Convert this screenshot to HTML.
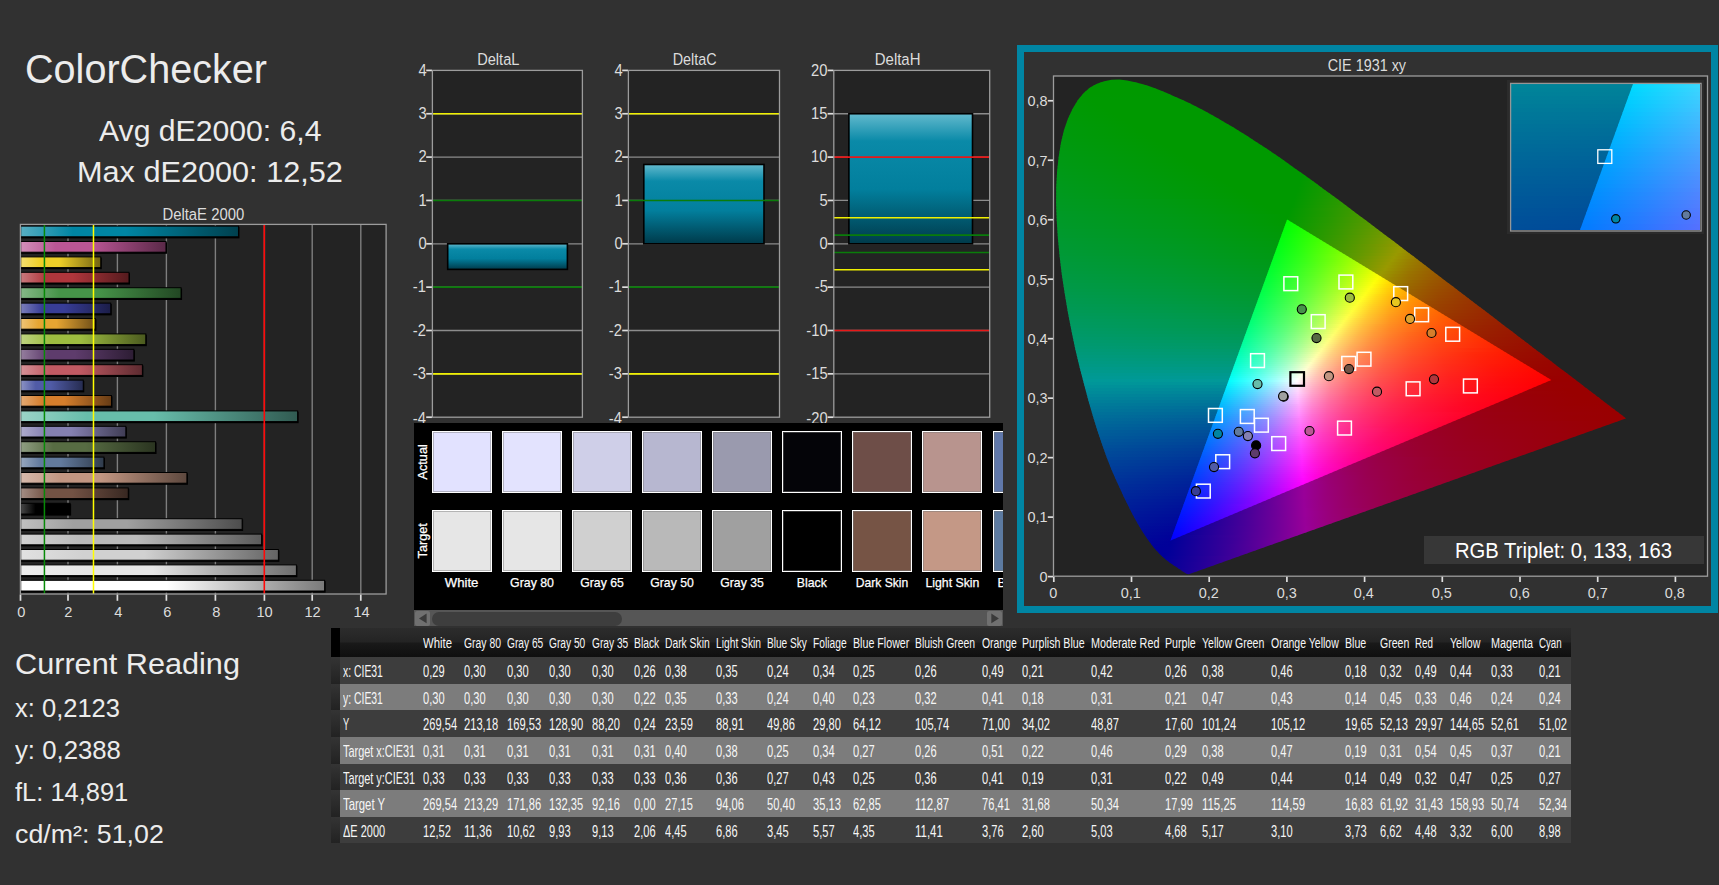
<!DOCTYPE html>
<html><head><meta charset="utf-8"><title>ColorChecker</title>
<style>
html,body{margin:0;padding:0;}
body{width:1719px;height:885px;background:#313131;position:relative;overflow:hidden;font-family:"Liberation Sans",sans-serif;}
.t{position:absolute;white-space:nowrap;line-height:1;}
.r{position:absolute;}
.sw{width:60.6px;height:62px;box-sizing:border-box;border:1.3px solid #fff;box-shadow:inset 0 0 0 1px rgba(120,120,120,0.45);}
</style></head><body>
<div class="t" style="left:24.50px;top:50.04px;font-size:40.12px;color:#ececec;transform:scaleX(0.9867);transform-origin:0 50%;">ColorChecker</div>
<div class="t" style="left:98.70px;top:116.64px;font-size:28.78px;color:#ececec;transform:scaleX(1.0481);transform-origin:0 50%;">Avg dE2000: 6,4</div>
<div class="t" style="left:77.00px;top:158.24px;font-size:28.78px;color:#ececec;transform:scaleX(1.0657);transform-origin:0 50%;">Max dE2000: 12,52</div>
<div class="t" style="left:159.10px;top:205.54px;font-size:16.13px;color:#dcdcdc;transform:scaleX(0.9234);transform-origin:50% 50%;">DeltaE 2000</div>
<div class="t" style="left:16.72px;top:603.86px;font-size:15.41px;color:#dcdcdc;transform:scaleX(0.9500);transform-origin:50% 50%;">0</div>
<div class="t" style="left:64.22px;top:603.86px;font-size:15.41px;color:#dcdcdc;transform:scaleX(0.9500);transform-origin:50% 50%;">2</div>
<div class="t" style="left:113.62px;top:603.86px;font-size:15.41px;color:#dcdcdc;transform:scaleX(0.9500);transform-origin:50% 50%;">4</div>
<div class="t" style="left:162.62px;top:603.86px;font-size:15.41px;color:#dcdcdc;transform:scaleX(0.9500);transform-origin:50% 50%;">6</div>
<div class="t" style="left:211.62px;top:603.86px;font-size:15.41px;color:#dcdcdc;transform:scaleX(0.9500);transform-origin:50% 50%;">8</div>
<div class="t" style="left:256.33px;top:603.86px;font-size:15.41px;color:#dcdcdc;transform:scaleX(0.9500);transform-origin:50% 50%;">10</div>
<div class="t" style="left:304.13px;top:603.86px;font-size:15.41px;color:#dcdcdc;transform:scaleX(0.9500);transform-origin:50% 50%;">12</div>
<div class="t" style="left:352.73px;top:603.86px;font-size:15.41px;color:#dcdcdc;transform:scaleX(0.9500);transform-origin:50% 50%;">14</div>
<div class="t" style="left:474.88px;top:51.34px;font-size:16.13px;color:#dcdcdc;transform:scaleX(0.9070);transform-origin:50% 50%;">DeltaL</div>
<div class="t" style="left:417.67px;top:62.51px;font-size:15.70px;color:#dcdcdc;transform:scaleX(0.9400);transform-origin:100% 50%;">4</div>
<div class="t" style="left:417.67px;top:105.86px;font-size:15.70px;color:#dcdcdc;transform:scaleX(0.9400);transform-origin:100% 50%;">3</div>
<div class="t" style="left:417.67px;top:149.21px;font-size:15.70px;color:#dcdcdc;transform:scaleX(0.9400);transform-origin:100% 50%;">2</div>
<div class="t" style="left:417.67px;top:192.56px;font-size:15.70px;color:#dcdcdc;transform:scaleX(0.9400);transform-origin:100% 50%;">1</div>
<div class="t" style="left:417.67px;top:235.91px;font-size:15.70px;color:#dcdcdc;transform:scaleX(0.9400);transform-origin:100% 50%;">0</div>
<div class="t" style="left:412.44px;top:279.26px;font-size:15.70px;color:#dcdcdc;transform:scaleX(0.9400);transform-origin:100% 50%;">-1</div>
<div class="t" style="left:412.44px;top:322.61px;font-size:15.70px;color:#dcdcdc;transform:scaleX(0.9400);transform-origin:100% 50%;">-2</div>
<div class="t" style="left:412.44px;top:365.96px;font-size:15.70px;color:#dcdcdc;transform:scaleX(0.9400);transform-origin:100% 50%;">-3</div>
<div class="t" style="left:412.44px;top:410.61px;font-size:15.70px;color:#dcdcdc;transform:scaleX(0.9400);transform-origin:100% 50%;">-4</div>
<div class="t" style="left:669.74px;top:51.34px;font-size:16.13px;color:#dcdcdc;transform:scaleX(0.8922);transform-origin:50% 50%;">DeltaC</div>
<div class="t" style="left:613.67px;top:62.51px;font-size:15.70px;color:#dcdcdc;transform:scaleX(0.9400);transform-origin:100% 50%;">4</div>
<div class="t" style="left:613.67px;top:105.86px;font-size:15.70px;color:#dcdcdc;transform:scaleX(0.9400);transform-origin:100% 50%;">3</div>
<div class="t" style="left:613.67px;top:149.21px;font-size:15.70px;color:#dcdcdc;transform:scaleX(0.9400);transform-origin:100% 50%;">2</div>
<div class="t" style="left:613.67px;top:192.56px;font-size:15.70px;color:#dcdcdc;transform:scaleX(0.9400);transform-origin:100% 50%;">1</div>
<div class="t" style="left:613.67px;top:235.91px;font-size:15.70px;color:#dcdcdc;transform:scaleX(0.9400);transform-origin:100% 50%;">0</div>
<div class="t" style="left:608.44px;top:279.26px;font-size:15.70px;color:#dcdcdc;transform:scaleX(0.9400);transform-origin:100% 50%;">-1</div>
<div class="t" style="left:608.44px;top:322.61px;font-size:15.70px;color:#dcdcdc;transform:scaleX(0.9400);transform-origin:100% 50%;">-2</div>
<div class="t" style="left:608.44px;top:365.96px;font-size:15.70px;color:#dcdcdc;transform:scaleX(0.9400);transform-origin:100% 50%;">-3</div>
<div class="t" style="left:608.44px;top:410.61px;font-size:15.70px;color:#dcdcdc;transform:scaleX(0.9400);transform-origin:100% 50%;">-4</div>
<div class="t" style="left:872.94px;top:51.34px;font-size:16.13px;color:#dcdcdc;transform:scaleX(0.9287);transform-origin:50% 50%;">DeltaH</div>
<div class="t" style="left:810.34px;top:62.51px;font-size:15.70px;color:#dcdcdc;transform:scaleX(0.9400);transform-origin:100% 50%;">20</div>
<div class="t" style="left:810.34px;top:105.86px;font-size:15.70px;color:#dcdcdc;transform:scaleX(0.9400);transform-origin:100% 50%;">15</div>
<div class="t" style="left:810.34px;top:149.21px;font-size:15.70px;color:#dcdcdc;transform:scaleX(0.9400);transform-origin:100% 50%;">10</div>
<div class="t" style="left:819.07px;top:192.56px;font-size:15.70px;color:#dcdcdc;transform:scaleX(0.9400);transform-origin:100% 50%;">5</div>
<div class="t" style="left:819.07px;top:235.91px;font-size:15.70px;color:#dcdcdc;transform:scaleX(0.9400);transform-origin:100% 50%;">0</div>
<div class="t" style="left:813.84px;top:279.26px;font-size:15.70px;color:#dcdcdc;transform:scaleX(0.9400);transform-origin:100% 50%;">-5</div>
<div class="t" style="left:805.11px;top:322.61px;font-size:15.70px;color:#dcdcdc;transform:scaleX(0.9400);transform-origin:100% 50%;">-10</div>
<div class="t" style="left:805.11px;top:365.96px;font-size:15.70px;color:#dcdcdc;transform:scaleX(0.9400);transform-origin:100% 50%;">-15</div>
<div class="t" style="left:805.11px;top:410.61px;font-size:15.70px;color:#dcdcdc;transform:scaleX(0.9400);transform-origin:100% 50%;">-20</div>
<svg class="r" style="left:0;top:0" width="1719" height="885" viewBox="0 0 1719 885"><rect x="20.40" y="224.40" width="365.70" height="369.60" fill="#232323"/><path d="M68.00 224.40L68.00 594.00" stroke="#7e7e7e" stroke-width="1.4"/><path d="M117.40 224.40L117.40 594.00" stroke="#7e7e7e" stroke-width="1.4"/><path d="M166.40 224.40L166.40 594.00" stroke="#7e7e7e" stroke-width="1.4"/><path d="M215.40 224.40L215.40 594.00" stroke="#7e7e7e" stroke-width="1.4"/><path d="M264.40 224.40L264.40 594.00" stroke="#7e7e7e" stroke-width="1.4"/><path d="M312.20 224.40L312.20 594.00" stroke="#7e7e7e" stroke-width="1.4"/><path d="M360.80 224.40L360.80 594.00" stroke="#7e7e7e" stroke-width="1.4"/><defs><linearGradient id="e0"><stop offset="0" stop-color="#57aec2"/><stop offset="0.24" stop-color="#0085a3"/><stop offset="0.48" stop-color="#0085a3"/><stop offset="1" stop-color="#00404e"/></linearGradient><linearGradient id="e1"><stop offset="0" stop-color="#d28fb9"/><stop offset="0.24" stop-color="#bb5695"/><stop offset="0.48" stop-color="#bb5695"/><stop offset="1" stop-color="#5a2948"/></linearGradient><linearGradient id="e2"><stop offset="0" stop-color="#f4df71"/><stop offset="0.24" stop-color="#eece28"/><stop offset="0.48" stop-color="#eece28"/><stop offset="1" stop-color="#726313"/></linearGradient><linearGradient id="e3"><stop offset="0" stop-color="#ca7a7e"/><stop offset="0.24" stop-color="#af363c"/><stop offset="0.48" stop-color="#af363c"/><stop offset="1" stop-color="#541a1d"/></linearGradient><linearGradient id="e4"><stop offset="0" stop-color="#85b887"/><stop offset="0.24" stop-color="#469449"/><stop offset="0.48" stop-color="#469449"/><stop offset="1" stop-color="#224723"/></linearGradient><linearGradient id="e5"><stop offset="0" stop-color="#7c7fba"/><stop offset="0.24" stop-color="#383d96"/><stop offset="0.48" stop-color="#383d96"/><stop offset="1" stop-color="#1b1d48"/></linearGradient><linearGradient id="e6"><stop offset="0" stop-color="#eec478"/><stop offset="0.24" stop-color="#e6a532"/><stop offset="0.48" stop-color="#e6a532"/><stop offset="1" stop-color="#6e4f18"/></linearGradient><linearGradient id="e7"><stop offset="0" stop-color="#bed381"/><stop offset="0.24" stop-color="#9dbc40"/><stop offset="0.48" stop-color="#9dbc40"/><stop offset="1" stop-color="#4b5a1f"/></linearGradient><linearGradient id="e8"><stop offset="0" stop-color="#957e9e"/><stop offset="0.24" stop-color="#5e3c6c"/><stop offset="0.48" stop-color="#5e3c6c"/><stop offset="1" stop-color="#2d1d34"/></linearGradient><linearGradient id="e9"><stop offset="0" stop-color="#d69298"/><stop offset="0.24" stop-color="#c15a63"/><stop offset="0.48" stop-color="#c15a63"/><stop offset="1" stop-color="#5d2b30"/></linearGradient><linearGradient id="e10"><stop offset="0" stop-color="#8c93c4"/><stop offset="0.24" stop-color="#505ba6"/><stop offset="0.48" stop-color="#505ba6"/><stop offset="1" stop-color="#262c50"/></linearGradient><linearGradient id="e11"><stop offset="0" stop-color="#e4aa74"/><stop offset="0.24" stop-color="#d67e2c"/><stop offset="0.48" stop-color="#d67e2c"/><stop offset="1" stop-color="#673c15"/></linearGradient><linearGradient id="e12"><stop offset="0" stop-color="#9bd3c7"/><stop offset="0.24" stop-color="#67bdaa"/><stop offset="0.48" stop-color="#67bdaa"/><stop offset="1" stop-color="#315b52"/></linearGradient><linearGradient id="e13"><stop offset="0" stop-color="#aeabcc"/><stop offset="0.24" stop-color="#8580b1"/><stop offset="0.48" stop-color="#8580b1"/><stop offset="1" stop-color="#403d55"/></linearGradient><linearGradient id="e14"><stop offset="0" stop-color="#909e83"/><stop offset="0.24" stop-color="#576c43"/><stop offset="0.48" stop-color="#576c43"/><stop offset="1" stop-color="#2a3420"/></linearGradient><linearGradient id="e15"><stop offset="0" stop-color="#97a7be"/><stop offset="0.24" stop-color="#627a9d"/><stop offset="0.48" stop-color="#627a9d"/><stop offset="1" stop-color="#2f3b4b"/></linearGradient><linearGradient id="e16"><stop offset="0" stop-color="#d7baac"/><stop offset="0.24" stop-color="#c29682"/><stop offset="0.48" stop-color="#c29682"/><stop offset="1" stop-color="#5d483e"/></linearGradient><linearGradient id="e17"><stop offset="0" stop-color="#a38d84"/><stop offset="0.24" stop-color="#735244"/><stop offset="0.48" stop-color="#735244"/><stop offset="1" stop-color="#372721"/></linearGradient><linearGradient id="e18"><stop offset="0" stop-color="#484848"/><stop offset="0.3" stop-color="#000000"/><stop offset="1" stop-color="#000000"/></linearGradient><linearGradient id="e19"><stop offset="0" stop-color="#c0c0c0"/><stop offset="0.24" stop-color="#a0a0a0"/><stop offset="0.48" stop-color="#a0a0a0"/><stop offset="1" stop-color="#4d4d4d"/></linearGradient><linearGradient id="e20"><stop offset="0" stop-color="#d2d2d2"/><stop offset="0.24" stop-color="#bbbbbb"/><stop offset="0.48" stop-color="#bbbbbb"/><stop offset="1" stop-color="#5a5a5a"/></linearGradient><linearGradient id="e21"><stop offset="0" stop-color="#e1e1e1"/><stop offset="0.24" stop-color="#d1d1d1"/><stop offset="0.48" stop-color="#d1d1d1"/><stop offset="1" stop-color="#646464"/></linearGradient><linearGradient id="e22"><stop offset="0" stop-color="#eeeeee"/><stop offset="0.24" stop-color="#e6e6e6"/><stop offset="0.48" stop-color="#e6e6e6"/><stop offset="1" stop-color="#6e6e6e"/></linearGradient><linearGradient id="e23"><stop offset="0" stop-color="#ffffff"/><stop offset="0.24" stop-color="#ffffff"/><stop offset="0.48" stop-color="#ffffff"/><stop offset="1" stop-color="#7a7a7a"/></linearGradient></defs><rect x="20.70" y="226.90" width="218.78" height="11.50" fill="#000"/><rect x="20.70" y="226.10" width="217.78" height="10.70" fill="url(#e0)" stroke="#000" stroke-width="1.0"/><rect x="20.70" y="242.30" width="146.28" height="11.50" fill="#000"/><rect x="20.70" y="241.50" width="145.28" height="10.70" fill="url(#e1)" stroke="#000" stroke-width="1.0"/><rect x="20.70" y="257.70" width="81.08" height="11.50" fill="#000"/><rect x="20.70" y="256.90" width="80.08" height="10.70" fill="url(#e2)" stroke="#000" stroke-width="1.0"/><rect x="20.70" y="273.10" width="109.30" height="11.50" fill="#000"/><rect x="20.70" y="272.30" width="108.30" height="10.70" fill="url(#e3)" stroke="#000" stroke-width="1.0"/><rect x="20.70" y="288.50" width="161.36" height="11.50" fill="#000"/><rect x="20.70" y="287.70" width="160.36" height="10.70" fill="url(#e4)" stroke="#000" stroke-width="1.0"/><rect x="20.70" y="303.90" width="91.05" height="11.50" fill="#000"/><rect x="20.70" y="303.10" width="90.05" height="10.70" fill="url(#e5)" stroke="#000" stroke-width="1.0"/><rect x="20.70" y="319.30" width="75.72" height="11.50" fill="#000"/><rect x="20.70" y="318.50" width="74.72" height="10.70" fill="url(#e6)" stroke="#000" stroke-width="1.0"/><rect x="20.70" y="334.70" width="126.09" height="11.50" fill="#000"/><rect x="20.70" y="333.90" width="125.09" height="10.70" fill="url(#e7)" stroke="#000" stroke-width="1.0"/><rect x="20.70" y="350.10" width="114.16" height="11.50" fill="#000"/><rect x="20.70" y="349.30" width="113.16" height="10.70" fill="url(#e8)" stroke="#000" stroke-width="1.0"/><rect x="20.70" y="365.50" width="122.68" height="11.50" fill="#000"/><rect x="20.70" y="364.70" width="121.68" height="10.70" fill="url(#e9)" stroke="#000" stroke-width="1.0"/><rect x="20.70" y="380.90" width="63.56" height="11.50" fill="#000"/><rect x="20.70" y="380.10" width="62.56" height="10.70" fill="url(#e10)" stroke="#000" stroke-width="1.0"/><rect x="20.70" y="396.30" width="91.78" height="11.50" fill="#000"/><rect x="20.70" y="395.50" width="90.78" height="10.70" fill="url(#e11)" stroke="#000" stroke-width="1.0"/><rect x="20.70" y="411.70" width="277.91" height="11.50" fill="#000"/><rect x="20.70" y="410.90" width="276.91" height="10.70" fill="url(#e12)" stroke="#000" stroke-width="1.0"/><rect x="20.70" y="427.10" width="106.14" height="11.50" fill="#000"/><rect x="20.70" y="426.30" width="105.14" height="10.70" fill="url(#e13)" stroke="#000" stroke-width="1.0"/><rect x="20.70" y="442.50" width="135.82" height="11.50" fill="#000"/><rect x="20.70" y="441.70" width="134.82" height="10.70" fill="url(#e14)" stroke="#000" stroke-width="1.0"/><rect x="20.70" y="457.90" width="84.24" height="11.50" fill="#000"/><rect x="20.70" y="457.10" width="83.24" height="10.70" fill="url(#e15)" stroke="#000" stroke-width="1.0"/><rect x="20.70" y="473.30" width="167.20" height="11.50" fill="#000"/><rect x="20.70" y="472.50" width="166.20" height="10.70" fill="url(#e16)" stroke="#000" stroke-width="1.0"/><rect x="20.70" y="488.70" width="108.57" height="11.50" fill="#000"/><rect x="20.70" y="487.90" width="107.57" height="10.70" fill="url(#e17)" stroke="#000" stroke-width="1.0"/><rect x="20.70" y="504.10" width="50.42" height="11.50" fill="#000"/><rect x="20.70" y="503.30" width="49.42" height="10.70" fill="url(#e18)" stroke="#000" stroke-width="1.0"/><rect x="20.70" y="519.50" width="222.43" height="11.50" fill="#000"/><rect x="20.70" y="518.70" width="221.43" height="10.70" fill="url(#e19)" stroke="#000" stroke-width="1.0"/><rect x="20.70" y="534.90" width="241.90" height="11.50" fill="#000"/><rect x="20.70" y="534.10" width="240.90" height="10.70" fill="url(#e20)" stroke="#000" stroke-width="1.0"/><rect x="20.70" y="550.30" width="258.68" height="11.50" fill="#000"/><rect x="20.70" y="549.50" width="257.68" height="10.70" fill="url(#e21)" stroke="#000" stroke-width="1.0"/><rect x="20.70" y="565.70" width="276.69" height="11.50" fill="#000"/><rect x="20.70" y="564.90" width="275.69" height="10.70" fill="url(#e22)" stroke="#000" stroke-width="1.0"/><rect x="20.70" y="581.10" width="304.91" height="11.50" fill="#000"/><rect x="20.70" y="580.30" width="303.91" height="10.70" fill="url(#e23)" stroke="#000" stroke-width="1.0"/><path d="M44.43 224.40L44.43 594.00" stroke="#078a07" stroke-width="1.5"/><path d="M93.49 224.40L93.49 594.00" stroke="#ffff00" stroke-width="1.5"/><path d="M264.30 224.40L264.30 594.00" stroke="#ff0808" stroke-width="1.6"/><rect x="20.40" y="224.40" width="365.70" height="369.60" fill="none" stroke="#9c9c9c" stroke-width="1.3"/><path d="M20.50 594.60L20.50 600.80" stroke="#dedede" stroke-width="1.7"/><path d="M68.00 594.60L68.00 600.80" stroke="#dedede" stroke-width="1.7"/><path d="M117.40 594.60L117.40 600.80" stroke="#dedede" stroke-width="1.7"/><path d="M166.40 594.60L166.40 600.80" stroke="#dedede" stroke-width="1.7"/><path d="M215.40 594.60L215.40 600.80" stroke="#dedede" stroke-width="1.7"/><path d="M264.40 594.60L264.40 600.80" stroke="#dedede" stroke-width="1.7"/><path d="M312.20 594.60L312.20 600.80" stroke="#dedede" stroke-width="1.7"/><path d="M360.80 594.60L360.80 600.80" stroke="#dedede" stroke-width="1.7"/><defs><linearGradient id="vb" x1="0" y1="0" x2="0" y2="1"><stop offset="0" stop-color="#62b9cd"/><stop offset="0.21" stop-color="#0a8aa8"/><stop offset="0.58" stop-color="#027f9d"/><stop offset="1" stop-color="#003a4a"/></linearGradient></defs><rect x="432.40" y="70.40" width="150.00" height="346.80" fill="#232323"/><path d="M432.40 113.75L582.40 113.75" stroke="#8c8c8c" stroke-width="1.3"/><path d="M432.40 157.10L582.40 157.10" stroke="#8c8c8c" stroke-width="1.3"/><path d="M432.40 200.45L582.40 200.45" stroke="#8c8c8c" stroke-width="1.3"/><path d="M432.40 243.80L582.40 243.80" stroke="#8c8c8c" stroke-width="1.3"/><path d="M432.40 287.15L582.40 287.15" stroke="#8c8c8c" stroke-width="1.3"/><path d="M432.40 330.50L582.40 330.50" stroke="#8c8c8c" stroke-width="1.3"/><path d="M432.40 373.85L582.40 373.85" stroke="#8c8c8c" stroke-width="1.3"/><rect x="447.70" y="243.80" width="119.70" height="25.58" fill="url(#vb)" stroke="#000" stroke-width="1.6"/><path d="M432.40 113.75L582.40 113.75" stroke="#f0f000" stroke-width="1.6"/><path d="M432.40 200.45L582.40 200.45" stroke="#0a7c0a" stroke-width="1.6"/><path d="M432.40 287.15L582.40 287.15" stroke="#0a7c0a" stroke-width="1.6"/><path d="M432.40 373.85L582.40 373.85" stroke="#f0f000" stroke-width="1.6"/><rect x="432.40" y="70.40" width="150.00" height="346.80" fill="none" stroke="#9c9c9c" stroke-width="1.3"/><path d="M426.20 70.40L431.90 70.40" stroke="#dedede" stroke-width="1.7"/><path d="M426.20 113.75L431.90 113.75" stroke="#dedede" stroke-width="1.7"/><path d="M426.20 157.10L431.90 157.10" stroke="#dedede" stroke-width="1.7"/><path d="M426.20 200.45L431.90 200.45" stroke="#dedede" stroke-width="1.7"/><path d="M426.20 243.80L431.90 243.80" stroke="#dedede" stroke-width="1.7"/><path d="M426.20 287.15L431.90 287.15" stroke="#dedede" stroke-width="1.7"/><path d="M426.20 330.50L431.90 330.50" stroke="#dedede" stroke-width="1.7"/><path d="M426.20 373.85L431.90 373.85" stroke="#dedede" stroke-width="1.7"/><path d="M426.20 417.20L431.90 417.20" stroke="#dedede" stroke-width="1.7"/><rect x="628.40" y="70.40" width="151.10" height="346.80" fill="#232323"/><path d="M628.40 113.75L779.50 113.75" stroke="#8c8c8c" stroke-width="1.3"/><path d="M628.40 157.10L779.50 157.10" stroke="#8c8c8c" stroke-width="1.3"/><path d="M628.40 200.45L779.50 200.45" stroke="#8c8c8c" stroke-width="1.3"/><path d="M628.40 243.80L779.50 243.80" stroke="#8c8c8c" stroke-width="1.3"/><path d="M628.40 287.15L779.50 287.15" stroke="#8c8c8c" stroke-width="1.3"/><path d="M628.40 330.50L779.50 330.50" stroke="#8c8c8c" stroke-width="1.3"/><path d="M628.40 373.85L779.50 373.85" stroke="#8c8c8c" stroke-width="1.3"/><rect x="643.80" y="164.47" width="120.20" height="79.33" fill="url(#vb)" stroke="#000" stroke-width="1.6"/><path d="M628.40 113.75L779.50 113.75" stroke="#f0f000" stroke-width="1.6"/><path d="M628.40 200.45L779.50 200.45" stroke="#0a7c0a" stroke-width="1.6"/><path d="M628.40 287.15L779.50 287.15" stroke="#0a7c0a" stroke-width="1.6"/><path d="M628.40 373.85L779.50 373.85" stroke="#f0f000" stroke-width="1.6"/><rect x="628.40" y="70.40" width="151.10" height="346.80" fill="none" stroke="#9c9c9c" stroke-width="1.3"/><path d="M622.20 70.40L627.90 70.40" stroke="#dedede" stroke-width="1.7"/><path d="M622.20 113.75L627.90 113.75" stroke="#dedede" stroke-width="1.7"/><path d="M622.20 157.10L627.90 157.10" stroke="#dedede" stroke-width="1.7"/><path d="M622.20 200.45L627.90 200.45" stroke="#dedede" stroke-width="1.7"/><path d="M622.20 243.80L627.90 243.80" stroke="#dedede" stroke-width="1.7"/><path d="M622.20 287.15L627.90 287.15" stroke="#dedede" stroke-width="1.7"/><path d="M622.20 330.50L627.90 330.50" stroke="#dedede" stroke-width="1.7"/><path d="M622.20 373.85L627.90 373.85" stroke="#dedede" stroke-width="1.7"/><path d="M622.20 417.20L627.90 417.20" stroke="#dedede" stroke-width="1.7"/><rect x="833.80" y="70.40" width="155.90" height="346.80" fill="#232323"/><path d="M833.80 113.75L989.70 113.75" stroke="#8c8c8c" stroke-width="1.3"/><path d="M833.80 157.10L989.70 157.10" stroke="#8c8c8c" stroke-width="1.3"/><path d="M833.80 200.45L989.70 200.45" stroke="#8c8c8c" stroke-width="1.3"/><path d="M833.80 243.80L989.70 243.80" stroke="#8c8c8c" stroke-width="1.3"/><path d="M833.80 287.15L989.70 287.15" stroke="#8c8c8c" stroke-width="1.3"/><path d="M833.80 330.50L989.70 330.50" stroke="#8c8c8c" stroke-width="1.3"/><path d="M833.80 373.85L989.70 373.85" stroke="#8c8c8c" stroke-width="1.3"/><rect x="848.90" y="113.75" width="123.60" height="130.05" fill="url(#vb)" stroke="#000" stroke-width="1.6"/><path d="M833.80 157.10L989.70 157.10" stroke="#e81818" stroke-width="1.6"/><path d="M833.80 217.79L989.70 217.79" stroke="#f0f000" stroke-width="1.6"/><path d="M833.80 235.13L989.70 235.13" stroke="#0a7c0a" stroke-width="1.6"/><path d="M833.80 252.47L989.70 252.47" stroke="#0a7c0a" stroke-width="1.6"/><path d="M833.80 269.81L989.70 269.81" stroke="#f0f000" stroke-width="1.6"/><path d="M833.80 330.50L989.70 330.50" stroke="#e81818" stroke-width="1.6"/><rect x="833.80" y="70.40" width="155.90" height="346.80" fill="none" stroke="#9c9c9c" stroke-width="1.3"/><path d="M827.60 70.40L833.30 70.40" stroke="#dedede" stroke-width="1.7"/><path d="M827.60 113.75L833.30 113.75" stroke="#dedede" stroke-width="1.7"/><path d="M827.60 157.10L833.30 157.10" stroke="#dedede" stroke-width="1.7"/><path d="M827.60 200.45L833.30 200.45" stroke="#dedede" stroke-width="1.7"/><path d="M827.60 243.80L833.30 243.80" stroke="#dedede" stroke-width="1.7"/><path d="M827.60 287.15L833.30 287.15" stroke="#dedede" stroke-width="1.7"/><path d="M827.60 330.50L833.30 330.50" stroke="#dedede" stroke-width="1.7"/><path d="M827.60 373.85L833.30 373.85" stroke="#dedede" stroke-width="1.7"/><path d="M827.60 417.20L833.30 417.20" stroke="#dedede" stroke-width="1.7"/></svg>
<div class="r" style="left:413.70px;top:423.00px;width:589.50px;height:203.30px;background:#000;overflow:hidden;"></div>
<div class="r" style="left:413.7px;top:423px;width:589.5px;height:186.8px;overflow:hidden;">
<div class="r sw" style="left:18.1px;top:8px;background:#e2e2ff;"></div>
<div class="r sw" style="left:18.1px;top:87.1px;background:#e6e6e6;"></div>
<div class="r sw" style="left:88.1px;top:8px;background:#e3e3fe;"></div>
<div class="r sw" style="left:88.1px;top:87.1px;background:#e6e6e6;"></div>
<div class="r sw" style="left:158.1px;top:8px;background:#cfcfe8;"></div>
<div class="r sw" style="left:158.1px;top:87.1px;background:#d0d0d0;"></div>
<div class="r sw" style="left:228.1px;top:8px;background:#b7b7d0;"></div>
<div class="r sw" style="left:228.1px;top:87.1px;background:#b9b9b9;"></div>
<div class="r sw" style="left:298.1px;top:8px;background:#9a9aae;"></div>
<div class="r sw" style="left:298.1px;top:87.1px;background:#a0a0a0;"></div>
<div class="r sw" style="left:368.1px;top:8px;background:#040408;"></div>
<div class="r sw" style="left:368.1px;top:87.1px;background:#000000;"></div>
<div class="r sw" style="left:438.1px;top:8px;background:#6e4e48;"></div>
<div class="r sw" style="left:438.1px;top:87.1px;background:#765445;"></div>
<div class="r sw" style="left:508.1px;top:8px;background:#b8948e;"></div>
<div class="r sw" style="left:508.1px;top:87.1px;background:#c49886;"></div>
<div class="r sw" style="left:578.9px;top:8px;background:#6078aa;"></div>
<div class="r sw" style="left:578.9px;top:87.1px;background:#5c7aa0;"></div>
</div>
<div class="t" style="left:445.47px;top:577.05px;font-size:12.94px;color:#ffffff;transform:scaleX(1.0192);transform-origin:50% 50%;-webkit-text-stroke:0.25px #fff;">White</div>
<div class="t" style="left:508.99px;top:577.05px;font-size:12.94px;color:#ffffff;transform:scaleX(0.9540);transform-origin:50% 50%;-webkit-text-stroke:0.25px #fff;">Gray 80</div>
<div class="t" style="left:578.99px;top:577.05px;font-size:12.94px;color:#ffffff;transform:scaleX(0.9453);transform-origin:50% 50%;-webkit-text-stroke:0.25px #fff;">Gray 65</div>
<div class="t" style="left:648.99px;top:577.05px;font-size:12.94px;color:#ffffff;transform:scaleX(0.9453);transform-origin:50% 50%;-webkit-text-stroke:0.25px #fff;">Gray 50</div>
<div class="t" style="left:718.99px;top:577.05px;font-size:12.94px;color:#ffffff;transform:scaleX(0.9453);transform-origin:50% 50%;-webkit-text-stroke:0.25px #fff;">Gray 35</div>
<div class="t" style="left:796.18px;top:577.05px;font-size:12.94px;color:#ffffff;transform:scaleX(0.9484);transform-origin:50% 50%;-webkit-text-stroke:0.25px #fff;">Black</div>
<div class="t" style="left:853.96px;top:577.05px;font-size:12.94px;color:#ffffff;transform:scaleX(0.9363);transform-origin:50% 50%;-webkit-text-stroke:0.25px #fff;">Dark Skin</div>
<div class="t" style="left:923.59px;top:577.05px;font-size:12.94px;color:#ffffff;transform:scaleX(0.9505);transform-origin:50% 50%;-webkit-text-stroke:0.25px #fff;">Light Skin</div>
<div class="r" style="left:990px;top:570px;width:13.2px;height:24px;overflow:hidden;">
<div class="t" style="left:7.27px;top:7.05px;font-size:12.94px;color:#ffffff;transform:scaleX(0.9794);transform-origin:50% 50%;-webkit-text-stroke:0.25px #fff;">Blue Sky</div>
</div>
<div class="t" style="left:403.61px;top:455.17px;font-size:13.66px;color:#fff;-webkit-text-stroke:0.25px #fff;transform:rotate(-90deg) scaleX(0.927);transform-origin:50% 50%;">Actual</div>
<div class="t" style="left:403.61px;top:533.67px;font-size:13.66px;color:#fff;-webkit-text-stroke:0.25px #fff;transform:rotate(-90deg) scaleX(0.927);transform-origin:50% 50%;">Target</div>
<div class="r" style="left:413.70px;top:609.90px;width:589.50px;height:16.40px;background:#565656;"></div>
<div class="r" style="left:432.00px;top:611.60px;width:189.50px;height:14.00px;background:#3e3e3e;border-radius:7px;"></div>
<div class="r" style="left:415.00px;top:611.00px;width:14.50px;height:14.50px;background:#707070;border-radius:2px;"></div>
<div class="r" style="left:987.30px;top:611.00px;width:14.50px;height:14.50px;background:#707070;border-radius:2px;"></div>
<svg class="r" style="left:413.7px;top:609.9px" width="590" height="17"><path d="M12.6 3.6 L5 8.4 L12.6 13.2Z" fill="#3a3a3a"/><path d="M577.3 3.6 L584.9 8.4 L577.3 13.2Z" fill="#3a3a3a"/></svg>
<div class="r" style="left:331.00px;top:628.00px;width:1240.00px;height:29.00px;background:linear-gradient(180deg,#2c2c2c 0%,#242424 47%,#191919 53%,#0f0f0f 100%);"></div>
<div class="t" style="left:423.00px;top:635.82px;font-size:14.39px;color:#f6f6f6;transform:scaleX(0.7884);transform-origin:0 50%;">White</div>
<div class="t" style="left:463.70px;top:635.82px;font-size:14.39px;color:#f6f6f6;transform:scaleX(0.7229);transform-origin:0 50%;">Gray 80</div>
<div class="t" style="left:506.50px;top:635.82px;font-size:14.39px;color:#f6f6f6;transform:scaleX(0.7092);transform-origin:0 50%;">Gray 65</div>
<div class="t" style="left:549.00px;top:635.82px;font-size:14.39px;color:#f6f6f6;transform:scaleX(0.7092);transform-origin:0 50%;">Gray 50</div>
<div class="t" style="left:591.60px;top:635.82px;font-size:14.39px;color:#f6f6f6;transform:scaleX(0.7092);transform-origin:0 50%;">Gray 35</div>
<div class="t" style="left:634.00px;top:635.82px;font-size:14.39px;color:#f6f6f6;transform:scaleX(0.7190);transform-origin:0 50%;">Black</div>
<div class="t" style="left:664.90px;top:635.82px;font-size:14.39px;color:#f6f6f6;transform:scaleX(0.7167);transform-origin:0 50%;">Dark Skin</div>
<div class="t" style="left:715.80px;top:635.82px;font-size:14.39px;color:#f6f6f6;transform:scaleX(0.7137);transform-origin:0 50%;">Light Skin</div>
<div class="t" style="left:767.00px;top:635.82px;font-size:14.39px;color:#f6f6f6;transform:scaleX(0.7026);transform-origin:0 50%;">Blue Sky</div>
<div class="t" style="left:813.00px;top:635.82px;font-size:14.39px;color:#f6f6f6;transform:scaleX(0.7140);transform-origin:0 50%;">Foliage</div>
<div class="t" style="left:852.50px;top:635.82px;font-size:14.39px;color:#f6f6f6;transform:scaleX(0.7423);transform-origin:0 50%;">Blue Flower</div>
<div class="t" style="left:914.80px;top:635.82px;font-size:14.39px;color:#f6f6f6;transform:scaleX(0.7225);transform-origin:0 50%;">Bluish Green</div>
<div class="t" style="left:981.50px;top:635.82px;font-size:14.39px;color:#f6f6f6;transform:scaleX(0.7250);transform-origin:0 50%;">Orange</div>
<div class="t" style="left:1022.20px;top:635.82px;font-size:14.39px;color:#f6f6f6;transform:scaleX(0.7395);transform-origin:0 50%;">Purplish Blue</div>
<div class="t" style="left:1090.70px;top:635.82px;font-size:14.39px;color:#f6f6f6;transform:scaleX(0.7512);transform-origin:0 50%;">Moderate Red</div>
<div class="t" style="left:1165.10px;top:635.82px;font-size:14.39px;color:#f6f6f6;transform:scaleX(0.7404);transform-origin:0 50%;">Purple</div>
<div class="t" style="left:1202.10px;top:635.82px;font-size:14.39px;color:#f6f6f6;transform:scaleX(0.7324);transform-origin:0 50%;">Yellow Green</div>
<div class="t" style="left:1270.70px;top:635.82px;font-size:14.39px;color:#f6f6f6;transform:scaleX(0.7306);transform-origin:0 50%;">Orange Yellow</div>
<div class="t" style="left:1344.70px;top:635.82px;font-size:14.39px;color:#f6f6f6;transform:scaleX(0.7395);transform-origin:0 50%;">Blue</div>
<div class="t" style="left:1379.50px;top:635.82px;font-size:14.39px;color:#f6f6f6;transform:scaleX(0.7326);transform-origin:0 50%;">Green</div>
<div class="t" style="left:1414.70px;top:635.82px;font-size:14.39px;color:#f6f6f6;transform:scaleX(0.6819);transform-origin:0 50%;">Red</div>
<div class="t" style="left:1449.50px;top:635.82px;font-size:14.39px;color:#f6f6f6;transform:scaleX(0.7402);transform-origin:0 50%;">Yellow</div>
<div class="t" style="left:1490.60px;top:635.82px;font-size:14.39px;color:#f6f6f6;transform:scaleX(0.7518);transform-origin:0 50%;">Magenta</div>
<div class="t" style="left:1539.30px;top:635.82px;font-size:14.39px;color:#f6f6f6;transform:scaleX(0.6757);transform-origin:0 50%;">Cyan</div>
<div class="r" style="left:331.00px;top:657.00px;width:1240.00px;height:27.00px;background:#3d3d3d;"></div>
<div class="t" style="left:343.20px;top:663.77px;font-size:15.99px;color:#f6f6f6;transform:scaleX(0.6507);transform-origin:0 50%;">x: CIE31</div>
<div class="t" style="left:423.00px;top:663.77px;font-size:15.99px;color:#f6f6f6;transform:scaleX(0.6941);transform-origin:0 50%;">0,29</div>
<div class="t" style="left:463.70px;top:663.77px;font-size:15.99px;color:#f6f6f6;transform:scaleX(0.6941);transform-origin:0 50%;">0,30</div>
<div class="t" style="left:506.50px;top:663.77px;font-size:15.99px;color:#f6f6f6;transform:scaleX(0.6941);transform-origin:0 50%;">0,30</div>
<div class="t" style="left:549.00px;top:663.77px;font-size:15.99px;color:#f6f6f6;transform:scaleX(0.6941);transform-origin:0 50%;">0,30</div>
<div class="t" style="left:591.60px;top:663.77px;font-size:15.99px;color:#f6f6f6;transform:scaleX(0.6941);transform-origin:0 50%;">0,30</div>
<div class="t" style="left:634.00px;top:663.77px;font-size:15.99px;color:#f6f6f6;transform:scaleX(0.6941);transform-origin:0 50%;">0,26</div>
<div class="t" style="left:664.90px;top:663.77px;font-size:15.99px;color:#f6f6f6;transform:scaleX(0.6941);transform-origin:0 50%;">0,38</div>
<div class="t" style="left:715.80px;top:663.77px;font-size:15.99px;color:#f6f6f6;transform:scaleX(0.6941);transform-origin:0 50%;">0,35</div>
<div class="t" style="left:767.00px;top:663.77px;font-size:15.99px;color:#f6f6f6;transform:scaleX(0.6941);transform-origin:0 50%;">0,24</div>
<div class="t" style="left:813.00px;top:663.77px;font-size:15.99px;color:#f6f6f6;transform:scaleX(0.6941);transform-origin:0 50%;">0,34</div>
<div class="t" style="left:852.50px;top:663.77px;font-size:15.99px;color:#f6f6f6;transform:scaleX(0.6941);transform-origin:0 50%;">0,25</div>
<div class="t" style="left:914.80px;top:663.77px;font-size:15.99px;color:#f6f6f6;transform:scaleX(0.6941);transform-origin:0 50%;">0,26</div>
<div class="t" style="left:981.50px;top:663.77px;font-size:15.99px;color:#f6f6f6;transform:scaleX(0.6941);transform-origin:0 50%;">0,49</div>
<div class="t" style="left:1022.20px;top:663.77px;font-size:15.99px;color:#f6f6f6;transform:scaleX(0.6941);transform-origin:0 50%;">0,21</div>
<div class="t" style="left:1090.70px;top:663.77px;font-size:15.99px;color:#f6f6f6;transform:scaleX(0.6941);transform-origin:0 50%;">0,42</div>
<div class="t" style="left:1165.10px;top:663.77px;font-size:15.99px;color:#f6f6f6;transform:scaleX(0.6941);transform-origin:0 50%;">0,26</div>
<div class="t" style="left:1202.10px;top:663.77px;font-size:15.99px;color:#f6f6f6;transform:scaleX(0.6941);transform-origin:0 50%;">0,38</div>
<div class="t" style="left:1270.70px;top:663.77px;font-size:15.99px;color:#f6f6f6;transform:scaleX(0.6941);transform-origin:0 50%;">0,46</div>
<div class="t" style="left:1344.70px;top:663.77px;font-size:15.99px;color:#f6f6f6;transform:scaleX(0.6941);transform-origin:0 50%;">0,18</div>
<div class="t" style="left:1379.50px;top:663.77px;font-size:15.99px;color:#f6f6f6;transform:scaleX(0.6941);transform-origin:0 50%;">0,32</div>
<div class="t" style="left:1414.70px;top:663.77px;font-size:15.99px;color:#f6f6f6;transform:scaleX(0.6941);transform-origin:0 50%;">0,49</div>
<div class="t" style="left:1449.50px;top:663.77px;font-size:15.99px;color:#f6f6f6;transform:scaleX(0.6941);transform-origin:0 50%;">0,44</div>
<div class="t" style="left:1490.60px;top:663.77px;font-size:15.99px;color:#f6f6f6;transform:scaleX(0.6941);transform-origin:0 50%;">0,33</div>
<div class="t" style="left:1539.30px;top:663.77px;font-size:15.99px;color:#f6f6f6;transform:scaleX(0.6941);transform-origin:0 50%;">0,21</div>
<div class="r" style="left:331.00px;top:684.00px;width:1240.00px;height:26.00px;background:#7c7c7c;"></div>
<div class="t" style="left:343.20px;top:690.77px;font-size:15.99px;color:#f6f6f6;transform:scaleX(0.6507);transform-origin:0 50%;">y: CIE31</div>
<div class="t" style="left:423.00px;top:690.77px;font-size:15.99px;color:#f6f6f6;transform:scaleX(0.6941);transform-origin:0 50%;">0,30</div>
<div class="t" style="left:463.70px;top:690.77px;font-size:15.99px;color:#f6f6f6;transform:scaleX(0.6941);transform-origin:0 50%;">0,30</div>
<div class="t" style="left:506.50px;top:690.77px;font-size:15.99px;color:#f6f6f6;transform:scaleX(0.6941);transform-origin:0 50%;">0,30</div>
<div class="t" style="left:549.00px;top:690.77px;font-size:15.99px;color:#f6f6f6;transform:scaleX(0.6941);transform-origin:0 50%;">0,30</div>
<div class="t" style="left:591.60px;top:690.77px;font-size:15.99px;color:#f6f6f6;transform:scaleX(0.6941);transform-origin:0 50%;">0,30</div>
<div class="t" style="left:634.00px;top:690.77px;font-size:15.99px;color:#f6f6f6;transform:scaleX(0.6941);transform-origin:0 50%;">0,22</div>
<div class="t" style="left:664.90px;top:690.77px;font-size:15.99px;color:#f6f6f6;transform:scaleX(0.6941);transform-origin:0 50%;">0,35</div>
<div class="t" style="left:715.80px;top:690.77px;font-size:15.99px;color:#f6f6f6;transform:scaleX(0.6941);transform-origin:0 50%;">0,33</div>
<div class="t" style="left:767.00px;top:690.77px;font-size:15.99px;color:#f6f6f6;transform:scaleX(0.6941);transform-origin:0 50%;">0,24</div>
<div class="t" style="left:813.00px;top:690.77px;font-size:15.99px;color:#f6f6f6;transform:scaleX(0.6941);transform-origin:0 50%;">0,40</div>
<div class="t" style="left:852.50px;top:690.77px;font-size:15.99px;color:#f6f6f6;transform:scaleX(0.6941);transform-origin:0 50%;">0,23</div>
<div class="t" style="left:914.80px;top:690.77px;font-size:15.99px;color:#f6f6f6;transform:scaleX(0.6941);transform-origin:0 50%;">0,32</div>
<div class="t" style="left:981.50px;top:690.77px;font-size:15.99px;color:#f6f6f6;transform:scaleX(0.6941);transform-origin:0 50%;">0,41</div>
<div class="t" style="left:1022.20px;top:690.77px;font-size:15.99px;color:#f6f6f6;transform:scaleX(0.6941);transform-origin:0 50%;">0,18</div>
<div class="t" style="left:1090.70px;top:690.77px;font-size:15.99px;color:#f6f6f6;transform:scaleX(0.6941);transform-origin:0 50%;">0,31</div>
<div class="t" style="left:1165.10px;top:690.77px;font-size:15.99px;color:#f6f6f6;transform:scaleX(0.6941);transform-origin:0 50%;">0,21</div>
<div class="t" style="left:1202.10px;top:690.77px;font-size:15.99px;color:#f6f6f6;transform:scaleX(0.6941);transform-origin:0 50%;">0,47</div>
<div class="t" style="left:1270.70px;top:690.77px;font-size:15.99px;color:#f6f6f6;transform:scaleX(0.6941);transform-origin:0 50%;">0,43</div>
<div class="t" style="left:1344.70px;top:690.77px;font-size:15.99px;color:#f6f6f6;transform:scaleX(0.6941);transform-origin:0 50%;">0,14</div>
<div class="t" style="left:1379.50px;top:690.77px;font-size:15.99px;color:#f6f6f6;transform:scaleX(0.6941);transform-origin:0 50%;">0,45</div>
<div class="t" style="left:1414.70px;top:690.77px;font-size:15.99px;color:#f6f6f6;transform:scaleX(0.6941);transform-origin:0 50%;">0,33</div>
<div class="t" style="left:1449.50px;top:690.77px;font-size:15.99px;color:#f6f6f6;transform:scaleX(0.6941);transform-origin:0 50%;">0,46</div>
<div class="t" style="left:1490.60px;top:690.77px;font-size:15.99px;color:#f6f6f6;transform:scaleX(0.6941);transform-origin:0 50%;">0,24</div>
<div class="t" style="left:1539.30px;top:690.77px;font-size:15.99px;color:#f6f6f6;transform:scaleX(0.6941);transform-origin:0 50%;">0,24</div>
<div class="r" style="left:331.00px;top:710.00px;width:1240.00px;height:27.00px;background:#3d3d3d;"></div>
<div class="t" style="left:343.20px;top:716.77px;font-size:15.99px;color:#f6f6f6;transform:scaleX(0.5814);transform-origin:0 50%;">Y</div>
<div class="t" style="left:423.00px;top:716.77px;font-size:15.99px;color:#f6f6f6;transform:scaleX(0.6973);transform-origin:0 50%;">269,54</div>
<div class="t" style="left:463.70px;top:716.77px;font-size:15.99px;color:#f6f6f6;transform:scaleX(0.6973);transform-origin:0 50%;">213,18</div>
<div class="t" style="left:506.50px;top:716.77px;font-size:15.99px;color:#f6f6f6;transform:scaleX(0.6973);transform-origin:0 50%;">169,53</div>
<div class="t" style="left:549.00px;top:716.77px;font-size:15.99px;color:#f6f6f6;transform:scaleX(0.6973);transform-origin:0 50%;">128,90</div>
<div class="t" style="left:591.60px;top:716.77px;font-size:15.99px;color:#f6f6f6;transform:scaleX(0.6961);transform-origin:0 50%;">88,20</div>
<div class="t" style="left:634.00px;top:716.77px;font-size:15.99px;color:#f6f6f6;transform:scaleX(0.6941);transform-origin:0 50%;">0,24</div>
<div class="t" style="left:664.90px;top:716.77px;font-size:15.99px;color:#f6f6f6;transform:scaleX(0.6961);transform-origin:0 50%;">23,59</div>
<div class="t" style="left:715.80px;top:716.77px;font-size:15.99px;color:#f6f6f6;transform:scaleX(0.6961);transform-origin:0 50%;">88,91</div>
<div class="t" style="left:767.00px;top:716.77px;font-size:15.99px;color:#f6f6f6;transform:scaleX(0.6961);transform-origin:0 50%;">49,86</div>
<div class="t" style="left:813.00px;top:716.77px;font-size:15.99px;color:#f6f6f6;transform:scaleX(0.6961);transform-origin:0 50%;">29,80</div>
<div class="t" style="left:852.50px;top:716.77px;font-size:15.99px;color:#f6f6f6;transform:scaleX(0.6961);transform-origin:0 50%;">64,12</div>
<div class="t" style="left:914.80px;top:716.77px;font-size:15.99px;color:#f6f6f6;transform:scaleX(0.6973);transform-origin:0 50%;">105,74</div>
<div class="t" style="left:981.50px;top:716.77px;font-size:15.99px;color:#f6f6f6;transform:scaleX(0.6961);transform-origin:0 50%;">71,00</div>
<div class="t" style="left:1022.20px;top:716.77px;font-size:15.99px;color:#f6f6f6;transform:scaleX(0.6961);transform-origin:0 50%;">34,02</div>
<div class="t" style="left:1090.70px;top:716.77px;font-size:15.99px;color:#f6f6f6;transform:scaleX(0.6961);transform-origin:0 50%;">48,87</div>
<div class="t" style="left:1165.10px;top:716.77px;font-size:15.99px;color:#f6f6f6;transform:scaleX(0.6961);transform-origin:0 50%;">17,60</div>
<div class="t" style="left:1202.10px;top:716.77px;font-size:15.99px;color:#f6f6f6;transform:scaleX(0.6973);transform-origin:0 50%;">101,24</div>
<div class="t" style="left:1270.70px;top:716.77px;font-size:15.99px;color:#f6f6f6;transform:scaleX(0.6973);transform-origin:0 50%;">105,12</div>
<div class="t" style="left:1344.70px;top:716.77px;font-size:15.99px;color:#f6f6f6;transform:scaleX(0.6961);transform-origin:0 50%;">19,65</div>
<div class="t" style="left:1379.50px;top:716.77px;font-size:15.99px;color:#f6f6f6;transform:scaleX(0.6961);transform-origin:0 50%;">52,13</div>
<div class="t" style="left:1414.70px;top:716.77px;font-size:15.99px;color:#f6f6f6;transform:scaleX(0.6961);transform-origin:0 50%;">29,97</div>
<div class="t" style="left:1449.50px;top:716.77px;font-size:15.99px;color:#f6f6f6;transform:scaleX(0.6973);transform-origin:0 50%;">144,65</div>
<div class="t" style="left:1490.60px;top:716.77px;font-size:15.99px;color:#f6f6f6;transform:scaleX(0.6961);transform-origin:0 50%;">52,61</div>
<div class="t" style="left:1539.30px;top:716.77px;font-size:15.99px;color:#f6f6f6;transform:scaleX(0.6961);transform-origin:0 50%;">51,02</div>
<div class="r" style="left:331.00px;top:737.00px;width:1240.00px;height:27.00px;background:#7c7c7c;"></div>
<div class="t" style="left:343.20px;top:743.77px;font-size:15.99px;color:#f6f6f6;transform:scaleX(0.6827);transform-origin:0 50%;">Target x:CIE31</div>
<div class="t" style="left:423.00px;top:743.77px;font-size:15.99px;color:#f6f6f6;transform:scaleX(0.6941);transform-origin:0 50%;">0,31</div>
<div class="t" style="left:463.70px;top:743.77px;font-size:15.99px;color:#f6f6f6;transform:scaleX(0.6941);transform-origin:0 50%;">0,31</div>
<div class="t" style="left:506.50px;top:743.77px;font-size:15.99px;color:#f6f6f6;transform:scaleX(0.6941);transform-origin:0 50%;">0,31</div>
<div class="t" style="left:549.00px;top:743.77px;font-size:15.99px;color:#f6f6f6;transform:scaleX(0.6941);transform-origin:0 50%;">0,31</div>
<div class="t" style="left:591.60px;top:743.77px;font-size:15.99px;color:#f6f6f6;transform:scaleX(0.6941);transform-origin:0 50%;">0,31</div>
<div class="t" style="left:634.00px;top:743.77px;font-size:15.99px;color:#f6f6f6;transform:scaleX(0.6941);transform-origin:0 50%;">0,31</div>
<div class="t" style="left:664.90px;top:743.77px;font-size:15.99px;color:#f6f6f6;transform:scaleX(0.6941);transform-origin:0 50%;">0,40</div>
<div class="t" style="left:715.80px;top:743.77px;font-size:15.99px;color:#f6f6f6;transform:scaleX(0.6941);transform-origin:0 50%;">0,38</div>
<div class="t" style="left:767.00px;top:743.77px;font-size:15.99px;color:#f6f6f6;transform:scaleX(0.6941);transform-origin:0 50%;">0,25</div>
<div class="t" style="left:813.00px;top:743.77px;font-size:15.99px;color:#f6f6f6;transform:scaleX(0.6941);transform-origin:0 50%;">0,34</div>
<div class="t" style="left:852.50px;top:743.77px;font-size:15.99px;color:#f6f6f6;transform:scaleX(0.6941);transform-origin:0 50%;">0,27</div>
<div class="t" style="left:914.80px;top:743.77px;font-size:15.99px;color:#f6f6f6;transform:scaleX(0.6941);transform-origin:0 50%;">0,26</div>
<div class="t" style="left:981.50px;top:743.77px;font-size:15.99px;color:#f6f6f6;transform:scaleX(0.6941);transform-origin:0 50%;">0,51</div>
<div class="t" style="left:1022.20px;top:743.77px;font-size:15.99px;color:#f6f6f6;transform:scaleX(0.6941);transform-origin:0 50%;">0,22</div>
<div class="t" style="left:1090.70px;top:743.77px;font-size:15.99px;color:#f6f6f6;transform:scaleX(0.6941);transform-origin:0 50%;">0,46</div>
<div class="t" style="left:1165.10px;top:743.77px;font-size:15.99px;color:#f6f6f6;transform:scaleX(0.6941);transform-origin:0 50%;">0,29</div>
<div class="t" style="left:1202.10px;top:743.77px;font-size:15.99px;color:#f6f6f6;transform:scaleX(0.6941);transform-origin:0 50%;">0,38</div>
<div class="t" style="left:1270.70px;top:743.77px;font-size:15.99px;color:#f6f6f6;transform:scaleX(0.6941);transform-origin:0 50%;">0,47</div>
<div class="t" style="left:1344.70px;top:743.77px;font-size:15.99px;color:#f6f6f6;transform:scaleX(0.6941);transform-origin:0 50%;">0,19</div>
<div class="t" style="left:1379.50px;top:743.77px;font-size:15.99px;color:#f6f6f6;transform:scaleX(0.6941);transform-origin:0 50%;">0,31</div>
<div class="t" style="left:1414.70px;top:743.77px;font-size:15.99px;color:#f6f6f6;transform:scaleX(0.6941);transform-origin:0 50%;">0,54</div>
<div class="t" style="left:1449.50px;top:743.77px;font-size:15.99px;color:#f6f6f6;transform:scaleX(0.6941);transform-origin:0 50%;">0,45</div>
<div class="t" style="left:1490.60px;top:743.77px;font-size:15.99px;color:#f6f6f6;transform:scaleX(0.6941);transform-origin:0 50%;">0,37</div>
<div class="t" style="left:1539.30px;top:743.77px;font-size:15.99px;color:#f6f6f6;transform:scaleX(0.6941);transform-origin:0 50%;">0,21</div>
<div class="r" style="left:331.00px;top:764.00px;width:1240.00px;height:26.00px;background:#3d3d3d;"></div>
<div class="t" style="left:343.20px;top:770.77px;font-size:15.99px;color:#f6f6f6;transform:scaleX(0.6827);transform-origin:0 50%;">Target y:CIE31</div>
<div class="t" style="left:423.00px;top:770.77px;font-size:15.99px;color:#f6f6f6;transform:scaleX(0.6941);transform-origin:0 50%;">0,33</div>
<div class="t" style="left:463.70px;top:770.77px;font-size:15.99px;color:#f6f6f6;transform:scaleX(0.6941);transform-origin:0 50%;">0,33</div>
<div class="t" style="left:506.50px;top:770.77px;font-size:15.99px;color:#f6f6f6;transform:scaleX(0.6941);transform-origin:0 50%;">0,33</div>
<div class="t" style="left:549.00px;top:770.77px;font-size:15.99px;color:#f6f6f6;transform:scaleX(0.6941);transform-origin:0 50%;">0,33</div>
<div class="t" style="left:591.60px;top:770.77px;font-size:15.99px;color:#f6f6f6;transform:scaleX(0.6941);transform-origin:0 50%;">0,33</div>
<div class="t" style="left:634.00px;top:770.77px;font-size:15.99px;color:#f6f6f6;transform:scaleX(0.6941);transform-origin:0 50%;">0,33</div>
<div class="t" style="left:664.90px;top:770.77px;font-size:15.99px;color:#f6f6f6;transform:scaleX(0.6941);transform-origin:0 50%;">0,36</div>
<div class="t" style="left:715.80px;top:770.77px;font-size:15.99px;color:#f6f6f6;transform:scaleX(0.6941);transform-origin:0 50%;">0,36</div>
<div class="t" style="left:767.00px;top:770.77px;font-size:15.99px;color:#f6f6f6;transform:scaleX(0.6941);transform-origin:0 50%;">0,27</div>
<div class="t" style="left:813.00px;top:770.77px;font-size:15.99px;color:#f6f6f6;transform:scaleX(0.6941);transform-origin:0 50%;">0,43</div>
<div class="t" style="left:852.50px;top:770.77px;font-size:15.99px;color:#f6f6f6;transform:scaleX(0.6941);transform-origin:0 50%;">0,25</div>
<div class="t" style="left:914.80px;top:770.77px;font-size:15.99px;color:#f6f6f6;transform:scaleX(0.6941);transform-origin:0 50%;">0,36</div>
<div class="t" style="left:981.50px;top:770.77px;font-size:15.99px;color:#f6f6f6;transform:scaleX(0.6941);transform-origin:0 50%;">0,41</div>
<div class="t" style="left:1022.20px;top:770.77px;font-size:15.99px;color:#f6f6f6;transform:scaleX(0.6941);transform-origin:0 50%;">0,19</div>
<div class="t" style="left:1090.70px;top:770.77px;font-size:15.99px;color:#f6f6f6;transform:scaleX(0.6941);transform-origin:0 50%;">0,31</div>
<div class="t" style="left:1165.10px;top:770.77px;font-size:15.99px;color:#f6f6f6;transform:scaleX(0.6941);transform-origin:0 50%;">0,22</div>
<div class="t" style="left:1202.10px;top:770.77px;font-size:15.99px;color:#f6f6f6;transform:scaleX(0.6941);transform-origin:0 50%;">0,49</div>
<div class="t" style="left:1270.70px;top:770.77px;font-size:15.99px;color:#f6f6f6;transform:scaleX(0.6941);transform-origin:0 50%;">0,44</div>
<div class="t" style="left:1344.70px;top:770.77px;font-size:15.99px;color:#f6f6f6;transform:scaleX(0.6941);transform-origin:0 50%;">0,14</div>
<div class="t" style="left:1379.50px;top:770.77px;font-size:15.99px;color:#f6f6f6;transform:scaleX(0.6941);transform-origin:0 50%;">0,49</div>
<div class="t" style="left:1414.70px;top:770.77px;font-size:15.99px;color:#f6f6f6;transform:scaleX(0.6941);transform-origin:0 50%;">0,32</div>
<div class="t" style="left:1449.50px;top:770.77px;font-size:15.99px;color:#f6f6f6;transform:scaleX(0.6941);transform-origin:0 50%;">0,47</div>
<div class="t" style="left:1490.60px;top:770.77px;font-size:15.99px;color:#f6f6f6;transform:scaleX(0.6941);transform-origin:0 50%;">0,25</div>
<div class="t" style="left:1539.30px;top:770.77px;font-size:15.99px;color:#f6f6f6;transform:scaleX(0.6941);transform-origin:0 50%;">0,27</div>
<div class="r" style="left:331.00px;top:790.00px;width:1240.00px;height:27.00px;background:#7c7c7c;"></div>
<div class="t" style="left:343.20px;top:796.77px;font-size:15.99px;color:#f6f6f6;transform:scaleX(0.7105);transform-origin:0 50%;">Target Y</div>
<div class="t" style="left:423.00px;top:796.77px;font-size:15.99px;color:#f6f6f6;transform:scaleX(0.6973);transform-origin:0 50%;">269,54</div>
<div class="t" style="left:463.70px;top:796.77px;font-size:15.99px;color:#f6f6f6;transform:scaleX(0.6973);transform-origin:0 50%;">213,29</div>
<div class="t" style="left:506.50px;top:796.77px;font-size:15.99px;color:#f6f6f6;transform:scaleX(0.6973);transform-origin:0 50%;">171,86</div>
<div class="t" style="left:549.00px;top:796.77px;font-size:15.99px;color:#f6f6f6;transform:scaleX(0.6973);transform-origin:0 50%;">132,35</div>
<div class="t" style="left:591.60px;top:796.77px;font-size:15.99px;color:#f6f6f6;transform:scaleX(0.6961);transform-origin:0 50%;">92,16</div>
<div class="t" style="left:634.00px;top:796.77px;font-size:15.99px;color:#f6f6f6;transform:scaleX(0.6941);transform-origin:0 50%;">0,00</div>
<div class="t" style="left:664.90px;top:796.77px;font-size:15.99px;color:#f6f6f6;transform:scaleX(0.6961);transform-origin:0 50%;">27,15</div>
<div class="t" style="left:715.80px;top:796.77px;font-size:15.99px;color:#f6f6f6;transform:scaleX(0.6961);transform-origin:0 50%;">94,06</div>
<div class="t" style="left:767.00px;top:796.77px;font-size:15.99px;color:#f6f6f6;transform:scaleX(0.6961);transform-origin:0 50%;">50,40</div>
<div class="t" style="left:813.00px;top:796.77px;font-size:15.99px;color:#f6f6f6;transform:scaleX(0.6961);transform-origin:0 50%;">35,13</div>
<div class="t" style="left:852.50px;top:796.77px;font-size:15.99px;color:#f6f6f6;transform:scaleX(0.6961);transform-origin:0 50%;">62,85</div>
<div class="t" style="left:914.80px;top:796.77px;font-size:15.99px;color:#f6f6f6;transform:scaleX(0.7146);transform-origin:0 50%;">112,87</div>
<div class="t" style="left:981.50px;top:796.77px;font-size:15.99px;color:#f6f6f6;transform:scaleX(0.6961);transform-origin:0 50%;">76,41</div>
<div class="t" style="left:1022.20px;top:796.77px;font-size:15.99px;color:#f6f6f6;transform:scaleX(0.6961);transform-origin:0 50%;">31,68</div>
<div class="t" style="left:1090.70px;top:796.77px;font-size:15.99px;color:#f6f6f6;transform:scaleX(0.6961);transform-origin:0 50%;">50,34</div>
<div class="t" style="left:1165.10px;top:796.77px;font-size:15.99px;color:#f6f6f6;transform:scaleX(0.6961);transform-origin:0 50%;">17,99</div>
<div class="t" style="left:1202.10px;top:796.77px;font-size:15.99px;color:#f6f6f6;transform:scaleX(0.7146);transform-origin:0 50%;">115,25</div>
<div class="t" style="left:1270.70px;top:796.77px;font-size:15.99px;color:#f6f6f6;transform:scaleX(0.7146);transform-origin:0 50%;">114,59</div>
<div class="t" style="left:1344.70px;top:796.77px;font-size:15.99px;color:#f6f6f6;transform:scaleX(0.6961);transform-origin:0 50%;">16,83</div>
<div class="t" style="left:1379.50px;top:796.77px;font-size:15.99px;color:#f6f6f6;transform:scaleX(0.6961);transform-origin:0 50%;">61,92</div>
<div class="t" style="left:1414.70px;top:796.77px;font-size:15.99px;color:#f6f6f6;transform:scaleX(0.6961);transform-origin:0 50%;">31,43</div>
<div class="t" style="left:1449.50px;top:796.77px;font-size:15.99px;color:#f6f6f6;transform:scaleX(0.6973);transform-origin:0 50%;">158,93</div>
<div class="t" style="left:1490.60px;top:796.77px;font-size:15.99px;color:#f6f6f6;transform:scaleX(0.6961);transform-origin:0 50%;">50,74</div>
<div class="t" style="left:1539.30px;top:796.77px;font-size:15.99px;color:#f6f6f6;transform:scaleX(0.6961);transform-origin:0 50%;">52,34</div>
<div class="r" style="left:331.00px;top:817.00px;width:1240.00px;height:26.00px;background:#3d3d3d;"></div>
<div class="t" style="left:343.20px;top:823.77px;font-size:15.99px;color:#f6f6f6;transform:scaleX(0.6862);transform-origin:0 50%;">ΔE 2000</div>
<div class="t" style="left:423.00px;top:823.77px;font-size:15.99px;color:#f6f6f6;transform:scaleX(0.6961);transform-origin:0 50%;">12,52</div>
<div class="t" style="left:463.70px;top:823.77px;font-size:15.99px;color:#f6f6f6;transform:scaleX(0.7173);transform-origin:0 50%;">11,36</div>
<div class="t" style="left:506.50px;top:823.77px;font-size:15.99px;color:#f6f6f6;transform:scaleX(0.6961);transform-origin:0 50%;">10,62</div>
<div class="t" style="left:549.00px;top:823.77px;font-size:15.99px;color:#f6f6f6;transform:scaleX(0.6941);transform-origin:0 50%;">9,93</div>
<div class="t" style="left:591.60px;top:823.77px;font-size:15.99px;color:#f6f6f6;transform:scaleX(0.6941);transform-origin:0 50%;">9,13</div>
<div class="t" style="left:634.00px;top:823.77px;font-size:15.99px;color:#f6f6f6;transform:scaleX(0.6941);transform-origin:0 50%;">2,06</div>
<div class="t" style="left:664.90px;top:823.77px;font-size:15.99px;color:#f6f6f6;transform:scaleX(0.6941);transform-origin:0 50%;">4,45</div>
<div class="t" style="left:715.80px;top:823.77px;font-size:15.99px;color:#f6f6f6;transform:scaleX(0.6941);transform-origin:0 50%;">6,86</div>
<div class="t" style="left:767.00px;top:823.77px;font-size:15.99px;color:#f6f6f6;transform:scaleX(0.6941);transform-origin:0 50%;">3,45</div>
<div class="t" style="left:813.00px;top:823.77px;font-size:15.99px;color:#f6f6f6;transform:scaleX(0.6941);transform-origin:0 50%;">5,57</div>
<div class="t" style="left:852.50px;top:823.77px;font-size:15.99px;color:#f6f6f6;transform:scaleX(0.6941);transform-origin:0 50%;">4,35</div>
<div class="t" style="left:914.80px;top:823.77px;font-size:15.99px;color:#f6f6f6;transform:scaleX(0.7173);transform-origin:0 50%;">11,41</div>
<div class="t" style="left:981.50px;top:823.77px;font-size:15.99px;color:#f6f6f6;transform:scaleX(0.6941);transform-origin:0 50%;">3,76</div>
<div class="t" style="left:1022.20px;top:823.77px;font-size:15.99px;color:#f6f6f6;transform:scaleX(0.6941);transform-origin:0 50%;">2,60</div>
<div class="t" style="left:1090.70px;top:823.77px;font-size:15.99px;color:#f6f6f6;transform:scaleX(0.6941);transform-origin:0 50%;">5,03</div>
<div class="t" style="left:1165.10px;top:823.77px;font-size:15.99px;color:#f6f6f6;transform:scaleX(0.6941);transform-origin:0 50%;">4,68</div>
<div class="t" style="left:1202.10px;top:823.77px;font-size:15.99px;color:#f6f6f6;transform:scaleX(0.6941);transform-origin:0 50%;">5,17</div>
<div class="t" style="left:1270.70px;top:823.77px;font-size:15.99px;color:#f6f6f6;transform:scaleX(0.6941);transform-origin:0 50%;">3,10</div>
<div class="t" style="left:1344.70px;top:823.77px;font-size:15.99px;color:#f6f6f6;transform:scaleX(0.6941);transform-origin:0 50%;">3,73</div>
<div class="t" style="left:1379.50px;top:823.77px;font-size:15.99px;color:#f6f6f6;transform:scaleX(0.6941);transform-origin:0 50%;">6,62</div>
<div class="t" style="left:1414.70px;top:823.77px;font-size:15.99px;color:#f6f6f6;transform:scaleX(0.6941);transform-origin:0 50%;">4,48</div>
<div class="t" style="left:1449.50px;top:823.77px;font-size:15.99px;color:#f6f6f6;transform:scaleX(0.6941);transform-origin:0 50%;">3,32</div>
<div class="t" style="left:1490.60px;top:823.77px;font-size:15.99px;color:#f6f6f6;transform:scaleX(0.6941);transform-origin:0 50%;">6,00</div>
<div class="t" style="left:1539.30px;top:823.77px;font-size:15.99px;color:#f6f6f6;transform:scaleX(0.6941);transform-origin:0 50%;">8,98</div>
<div class="r" style="left:331.00px;top:628.00px;width:9.00px;height:29.00px;background:#000;"></div>
<div class="r" style="left:331.00px;top:657.00px;width:9.00px;height:27.00px;background:linear-gradient(180deg,#343434 0%,#222 100%);"></div>
<div class="r" style="left:331.00px;top:684.00px;width:9.00px;height:26.00px;background:linear-gradient(180deg,#343434 0%,#222 100%);"></div>
<div class="r" style="left:331.00px;top:710.00px;width:9.00px;height:27.00px;background:linear-gradient(180deg,#343434 0%,#222 100%);"></div>
<div class="r" style="left:331.00px;top:737.00px;width:9.00px;height:27.00px;background:linear-gradient(180deg,#343434 0%,#222 100%);"></div>
<div class="r" style="left:331.00px;top:764.00px;width:9.00px;height:26.00px;background:linear-gradient(180deg,#343434 0%,#222 100%);"></div>
<div class="r" style="left:331.00px;top:790.00px;width:9.00px;height:27.00px;background:linear-gradient(180deg,#343434 0%,#222 100%);"></div>
<div class="r" style="left:331.00px;top:817.00px;width:9.00px;height:26.00px;background:linear-gradient(180deg,#343434 0%,#222 100%);"></div>
<div class="t" style="left:14.80px;top:648.52px;font-size:29.51px;color:#ececec;transform:scaleX(1.0392);transform-origin:0 50%;">Current Reading</div>
<div class="t" style="left:14.80px;top:695.71px;font-size:25.15px;color:#ececec;transform:scaleX(1.0149);transform-origin:0 50%;">x: 0,2123</div>
<div class="t" style="left:14.80px;top:738.31px;font-size:25.15px;color:#ececec;transform:scaleX(1.0236);transform-origin:0 50%;">y: 0,2388</div>
<div class="t" style="left:14.80px;top:780.31px;font-size:25.15px;color:#ececec;transform:scaleX(1.0129);transform-origin:0 50%;">fL: 14,891</div>
<div class="t" style="left:14.80px;top:822.11px;font-size:25.15px;color:#ececec;transform:scaleX(1.0647);transform-origin:0 50%;">cd/m²: 51,02</div>
<div class="r" style="left:1017.00px;top:45.00px;width:701.00px;height:568.00px;border:7px solid #0085a3;box-sizing:border-box;"></div>
<div class="r" style="left:1053.50px;top:76.00px;width:654.00px;height:500.20px;background:#232323;"></div>
<div class="t" style="left:1323.36px;top:56.84px;font-size:16.13px;color:#dcdcdc;transform:scaleX(0.8932);transform-origin:50% 50%;">CIE 1931 xy</div>
<svg class="r" style="left:1053.5px;top:76.0px" width="654.0" height="500.20000000000005" viewBox="0 0 654.0 500.20000000000005" shape-rendering="auto"><defs><clipPath id="hs"><path d="M135.5 498.0L135.5 498.0L135.4 498.0L135.3 498.0L135.2 498.1L135.1 498.1L135.0 498.1L134.9 498.1L134.7 498.1L134.6 498.2L134.4 498.2L134.2 498.2L134.0 498.1L133.8 498.1L133.5 498.1L133.2 498.0L132.9 497.9L132.6 497.8L132.4 497.7L132.2 497.6L131.9 497.5L131.7 497.3L131.4 497.1L131.1 497.0L130.8 496.8L130.5 496.6L130.1 496.3L129.7 496.0L129.2 495.7L128.8 495.4L128.3 495.1L127.8 494.7L127.3 494.4L126.7 494.0L126.1 493.6L125.5 493.1L124.7 492.7L123.9 492.1L123.1 491.6L122.2 491.0L121.2 490.3L120.2 489.7L119.2 489.0L118.1 488.2L116.9 487.4L115.6 486.4L114.3 485.5L112.9 484.4L111.4 483.2L109.9 481.9L108.3 480.5L106.6 478.9L104.7 477.0L102.7 474.8L100.5 472.4L98.2 469.6L95.8 466.3L93.2 462.7L90.5 458.7L87.6 454.2L84.5 449.0L81.2 443.2L77.7 436.8L74.1 429.6L70.2 421.7L66.1 412.8L61.7 403.2L57.1 392.7L52.6 381.2L48.1 368.6L43.5 354.9L39.0 340.4L34.5 325.0L30.1 308.6L25.6 291.2L21.3 273.2L17.5 255.0L13.9 236.5L10.7 217.6L7.8 198.6L5.6 180.2L3.9 162.2L2.7 144.4L2.1 127.2L2.2 110.9L3.1 95.3L4.7 80.4L7.0 66.5L10.0 54.0L13.9 42.8L18.6 32.7L23.9 24.0L29.7 16.9L36.0 11.5L42.9 7.7L50.2 5.2L57.6 3.7L65.3 3.4L73.1 4.4L81.1 6.2L89.0 8.3L96.9 10.7L104.8 13.7L112.8 17.0L120.5 20.4L128.1 23.8L135.6 27.3L143.0 31.0L150.3 34.8L157.5 38.7L164.6 42.7L171.7 46.9L178.8 51.1L185.9 55.4L192.9 59.8L200.0 64.4L207.0 68.9L214.0 73.6L220.9 78.3L227.9 83.1L234.8 88.0L241.7 92.9L248.7 97.8L255.6 102.8L262.6 107.8L269.5 112.9L276.5 118.0L283.4 123.1L290.4 128.3L297.3 133.5L304.2 138.7L311.1 143.8L318.0 149.0L324.9 154.2L331.8 159.4L338.7 164.6L345.5 169.8L352.3 175.0L359.1 180.1L365.8 185.2L372.5 190.3L379.1 195.4L385.7 200.4L392.2 205.4L398.7 210.3L405.1 215.2L411.4 220.0L417.6 224.7L423.8 229.4L429.9 234.0L435.8 238.6L441.7 243.0L447.4 247.4L453.0 251.7L458.5 255.8L463.8 259.9L468.9 263.8L473.9 267.6L478.6 271.2L483.2 274.7L487.7 278.1L492.0 281.4L496.2 284.6L500.3 287.7L504.1 290.7L507.8 293.4L511.3 296.1L514.6 298.6L517.8 301.0L520.8 303.3L523.7 305.5L526.4 307.5L528.9 309.5L531.3 311.4L533.6 313.1L535.7 314.7L537.8 316.3L539.7 317.7L541.5 319.1L543.2 320.4L544.9 321.6L546.4 322.8L547.8 323.9L549.2 325.0L550.5 326.0L551.8 326.9L553.0 327.9L554.2 328.8L555.3 329.6L556.3 330.4L557.3 331.2L558.3 331.9L559.1 332.6L560.0 333.2L560.8 333.8L561.5 334.4L562.3 334.9L562.9 335.4L563.5 335.8L564.1 336.3L564.6 336.7L565.1 337.1L565.5 337.4L566.0 337.7L566.4 338.0L566.7 338.3L567.1 338.6L567.4 338.8L567.7 339.0L568.1 339.3L568.5 339.7L568.9 340.0L569.3 340.2L569.6 340.5L569.8 340.7L570.1 340.9L570.3 341.1L570.6 341.3L570.9 341.5L571.2 341.7L571.7 342.6Z"/></clipPath><clipPath id="tr"><path d="M497.3 304.0L233.1 143.5L116.5 464.5Z"/></clipPath><linearGradient id="a0"><stop offset="0.0000" stop-color="#009900"/><stop offset="1.0000" stop-color="#009900"/></linearGradient><linearGradient id="a1"><stop offset="0.0000" stop-color="#009900"/><stop offset="1.0000" stop-color="#009900"/></linearGradient><linearGradient id="a2"><stop offset="0.0000" stop-color="#009900"/><stop offset="1.0000" stop-color="#009900"/></linearGradient><linearGradient id="a3"><stop offset="0.0000" stop-color="#009900"/><stop offset="1.0000" stop-color="#009900"/></linearGradient><linearGradient id="a4"><stop offset="0.0000" stop-color="#009900"/><stop offset="1.0000" stop-color="#009900"/></linearGradient><linearGradient id="a5"><stop offset="0.0000" stop-color="#009901"/><stop offset="1.0000" stop-color="#009900"/></linearGradient><linearGradient id="a6"><stop offset="0.0000" stop-color="#009902"/><stop offset="1.0000" stop-color="#009900"/></linearGradient><linearGradient id="a7"><stop offset="0.0000" stop-color="#009903"/><stop offset="0.1681" stop-color="#009900"/><stop offset="1.0000" stop-color="#009900"/></linearGradient><linearGradient id="a8"><stop offset="0.0000" stop-color="#009904"/><stop offset="0.2126" stop-color="#009900"/><stop offset="1.0000" stop-color="#009900"/></linearGradient><linearGradient id="a9"><stop offset="0.0000" stop-color="#009905"/><stop offset="0.2519" stop-color="#009900"/><stop offset="1.0000" stop-color="#009900"/></linearGradient><linearGradient id="a10"><stop offset="0.0000" stop-color="#009905"/><stop offset="0.2817" stop-color="#009900"/><stop offset="1.0000" stop-color="#009900"/></linearGradient><linearGradient id="a11"><stop offset="0.0000" stop-color="#009906"/><stop offset="0.3154" stop-color="#009900"/><stop offset="1.0000" stop-color="#009900"/></linearGradient><linearGradient id="a12"><stop offset="0.0000" stop-color="#009907"/><stop offset="0.3397" stop-color="#009900"/><stop offset="1.0000" stop-color="#009900"/></linearGradient><linearGradient id="a13"><stop offset="0.0000" stop-color="#009908"/><stop offset="0.3642" stop-color="#009900"/><stop offset="1.0000" stop-color="#009900"/></linearGradient><linearGradient id="a14"><stop offset="0.0000" stop-color="#009909"/><stop offset="0.3869" stop-color="#009900"/><stop offset="1.0000" stop-color="#009900"/></linearGradient><linearGradient id="a15"><stop offset="0.0000" stop-color="#00990a"/><stop offset="0.4080" stop-color="#009900"/><stop offset="1.0000" stop-color="#009900"/></linearGradient><linearGradient id="a16"><stop offset="0.0000" stop-color="#00990b"/><stop offset="0.4222" stop-color="#009900"/><stop offset="1.0000" stop-color="#009900"/></linearGradient><linearGradient id="a17"><stop offset="0.0000" stop-color="#00990c"/><stop offset="0.4409" stop-color="#009900"/><stop offset="1.0000" stop-color="#009900"/></linearGradient><linearGradient id="a18"><stop offset="0.0000" stop-color="#00990c"/><stop offset="0.4583" stop-color="#009900"/><stop offset="1.0000" stop-color="#009900"/></linearGradient><linearGradient id="a19"><stop offset="0.0000" stop-color="#00990d"/><stop offset="0.4772" stop-color="#009900"/><stop offset="1.0000" stop-color="#009900"/></linearGradient><linearGradient id="a20"><stop offset="0.0000" stop-color="#00990e"/><stop offset="0.4901" stop-color="#009900"/><stop offset="1.0000" stop-color="#009900"/></linearGradient><linearGradient id="a21"><stop offset="0.0000" stop-color="#00990f"/><stop offset="0.5048" stop-color="#009900"/><stop offset="1.0000" stop-color="#009900"/></linearGradient><linearGradient id="a22"><stop offset="0.0000" stop-color="#009910"/><stop offset="0.5189" stop-color="#009900"/><stop offset="1.0000" stop-color="#009900"/></linearGradient><linearGradient id="a23"><stop offset="0.0000" stop-color="#009911"/><stop offset="0.5321" stop-color="#009900"/><stop offset="1.0000" stop-color="#009900"/></linearGradient><linearGradient id="a24"><stop offset="0.0000" stop-color="#009912"/><stop offset="0.5450" stop-color="#009900"/><stop offset="1.0000" stop-color="#009900"/></linearGradient><linearGradient id="a25"><stop offset="0.0000" stop-color="#009913"/><stop offset="0.5595" stop-color="#009900"/><stop offset="1.0000" stop-color="#009900"/></linearGradient><linearGradient id="a26"><stop offset="0.0000" stop-color="#009914"/><stop offset="0.5690" stop-color="#009900"/><stop offset="1.0000" stop-color="#009900"/></linearGradient><linearGradient id="a27"><stop offset="0.0000" stop-color="#009914"/><stop offset="0.5805" stop-color="#009900"/><stop offset="1.0000" stop-color="#009900"/></linearGradient><linearGradient id="a28"><stop offset="0.0000" stop-color="#009915"/><stop offset="0.5934" stop-color="#009900"/><stop offset="1.0000" stop-color="#009900"/></linearGradient><linearGradient id="a29"><stop offset="0.0000" stop-color="#009916"/><stop offset="0.6041" stop-color="#009900"/><stop offset="1.0000" stop-color="#009900"/></linearGradient><linearGradient id="a30"><stop offset="0.0000" stop-color="#009917"/><stop offset="0.6080" stop-color="#009900"/><stop offset="1.0000" stop-color="#009900"/></linearGradient><linearGradient id="a31"><stop offset="0.0000" stop-color="#009918"/><stop offset="0.6181" stop-color="#009900"/><stop offset="0.9803" stop-color="#009900"/><stop offset="1.0000" stop-color="#039900"/></linearGradient><linearGradient id="a32"><stop offset="0.0000" stop-color="#009919"/><stop offset="0.6279" stop-color="#009900"/><stop offset="0.9612" stop-color="#009900"/><stop offset="1.0000" stop-color="#079900"/></linearGradient><linearGradient id="a33"><stop offset="0.0000" stop-color="#00991a"/><stop offset="0.6374" stop-color="#009900"/><stop offset="0.9427" stop-color="#009900"/><stop offset="1.0000" stop-color="#0b9900"/></linearGradient><linearGradient id="a34"><stop offset="0.0000" stop-color="#00991b"/><stop offset="0.6466" stop-color="#009900"/><stop offset="0.9248" stop-color="#009900"/><stop offset="1.0000" stop-color="#109900"/></linearGradient><linearGradient id="a35"><stop offset="0.0000" stop-color="#00991c"/><stop offset="0.6556" stop-color="#009900"/><stop offset="0.9074" stop-color="#009900"/><stop offset="1.0000" stop-color="#149900"/></linearGradient><linearGradient id="a36"><stop offset="0.0000" stop-color="#00991d"/><stop offset="0.6642" stop-color="#009900"/><stop offset="0.8905" stop-color="#009900"/><stop offset="1.0000" stop-color="#199900"/></linearGradient><linearGradient id="a37"><stop offset="0.0000" stop-color="#00991e"/><stop offset="0.6703" stop-color="#009900"/><stop offset="0.8710" stop-color="#009900"/><stop offset="1.0000" stop-color="#1e9900"/></linearGradient><linearGradient id="a38"><stop offset="0.0000" stop-color="#00991f"/><stop offset="0.6784" stop-color="#009900"/><stop offset="0.8551" stop-color="#009900"/><stop offset="1.0000" stop-color="#239900"/></linearGradient><linearGradient id="a39"><stop offset="0.0000" stop-color="#009920"/><stop offset="0.6864" stop-color="#009900"/><stop offset="0.8397" stop-color="#009900"/><stop offset="1.0000" stop-color="#289900"/></linearGradient><linearGradient id="a40"><stop offset="0.0000" stop-color="#009921"/><stop offset="0.3677" stop-color="#009912"/><stop offset="0.6942" stop-color="#009900"/><stop offset="0.8247" stop-color="#009900"/><stop offset="1.0000" stop-color="#2e9900"/></linearGradient><linearGradient id="a41"><stop offset="0.0000" stop-color="#009922"/><stop offset="0.3729" stop-color="#009912"/><stop offset="0.7017" stop-color="#009900"/><stop offset="0.8102" stop-color="#009900"/><stop offset="1.0000" stop-color="#339900"/></linearGradient><linearGradient id="a42"><stop offset="0.0000" stop-color="#009923"/><stop offset="0.3746" stop-color="#009913"/><stop offset="0.7090" stop-color="#009900"/><stop offset="0.7960" stop-color="#009900"/><stop offset="1.0000" stop-color="#399900"/></linearGradient><linearGradient id="a43"><stop offset="0.0000" stop-color="#009924"/><stop offset="0.3795" stop-color="#009914"/><stop offset="0.7129" stop-color="#009900"/><stop offset="0.7789" stop-color="#009900"/><stop offset="1.0000" stop-color="#3f9900"/></linearGradient><linearGradient id="a44"><stop offset="0.0000" stop-color="#009926"/><stop offset="0.3844" stop-color="#009914"/><stop offset="0.7199" stop-color="#009900"/><stop offset="0.7655" stop-color="#009900"/><stop offset="0.8795" stop-color="#1f9900"/><stop offset="1.0000" stop-color="#459900"/></linearGradient><linearGradient id="a45"><stop offset="0.0000" stop-color="#009927"/><stop offset="0.3505" stop-color="#009917"/><stop offset="0.7524" stop-color="#009900"/><stop offset="0.8746" stop-color="#229900"/><stop offset="1.0000" stop-color="#4b9900"/></linearGradient><linearGradient id="a46"><stop offset="0.0000" stop-color="#009928"/><stop offset="0.3873" stop-color="#009916"/><stop offset="0.7397" stop-color="#009900"/><stop offset="0.8698" stop-color="#269900"/><stop offset="1.0000" stop-color="#529900"/></linearGradient><linearGradient id="a47"><stop offset="0.0000" stop-color="#009929"/><stop offset="0.3918" stop-color="#009917"/><stop offset="0.7273" stop-color="#009901"/><stop offset="0.8652" stop-color="#299900"/><stop offset="1.0000" stop-color="#589900"/></linearGradient><linearGradient id="a48"><stop offset="0.0000" stop-color="#00992a"/><stop offset="0.3839" stop-color="#009918"/><stop offset="0.7152" stop-color="#009902"/><stop offset="0.8607" stop-color="#2d9900"/><stop offset="1.0000" stop-color="#609900"/></linearGradient><linearGradient id="a49"><stop offset="0.0000" stop-color="#00992b"/><stop offset="0.3792" stop-color="#009919"/><stop offset="0.7034" stop-color="#009904"/><stop offset="0.7523" stop-color="#0f9900"/><stop offset="0.8563" stop-color="#319900"/><stop offset="1.0000" stop-color="#679900"/></linearGradient><linearGradient id="a50"><stop offset="0.0000" stop-color="#00992d"/><stop offset="0.3716" stop-color="#00991b"/><stop offset="0.6918" stop-color="#009905"/><stop offset="0.7583" stop-color="#159900"/><stop offset="0.8520" stop-color="#359900"/><stop offset="1.0000" stop-color="#6f9900"/></linearGradient><linearGradient id="a51"><stop offset="0.0000" stop-color="#00992e"/><stop offset="0.3672" stop-color="#00991c"/><stop offset="0.6806" stop-color="#009907"/><stop offset="0.7642" stop-color="#1b9900"/><stop offset="0.8478" stop-color="#389900"/><stop offset="1.0000" stop-color="#779900"/></linearGradient><linearGradient id="a52"><stop offset="0.0000" stop-color="#00992f"/><stop offset="0.3599" stop-color="#00991d"/><stop offset="0.6696" stop-color="#009908"/><stop offset="0.7699" stop-color="#219900"/><stop offset="0.8437" stop-color="#3d9900"/><stop offset="1.0000" stop-color="#7f9900"/></linearGradient><linearGradient id="a53"><stop offset="0.0000" stop-color="#009931"/><stop offset="0.3557" stop-color="#00991f"/><stop offset="0.6589" stop-color="#00990a"/><stop offset="0.7755" stop-color="#289900"/><stop offset="0.8397" stop-color="#419900"/><stop offset="1.0000" stop-color="#889900"/></linearGradient><linearGradient id="a54"><stop offset="0.0000" stop-color="#009932"/><stop offset="0.3497" stop-color="#009920"/><stop offset="0.6474" stop-color="#00990c"/><stop offset="0.7803" stop-color="#2f9900"/><stop offset="0.8324" stop-color="#449900"/><stop offset="0.9191" stop-color="#6a9900"/><stop offset="1.0000" stop-color="#919900"/></linearGradient><linearGradient id="a55"><stop offset="0.0000" stop-color="#009933"/><stop offset="0.3429" stop-color="#009922"/><stop offset="0.6371" stop-color="#00990d"/><stop offset="0.7857" stop-color="#379900"/><stop offset="0.8200" stop-color="#459900"/><stop offset="1.0000" stop-color="#999700"/></linearGradient><linearGradient id="a56"><stop offset="0.0000" stop-color="#009934"/><stop offset="0.3390" stop-color="#009923"/><stop offset="0.6271" stop-color="#00990f"/><stop offset="0.7232" stop-color="#239907"/><stop offset="0.8136" stop-color="#489900"/><stop offset="0.8983" stop-color="#6f9900"/><stop offset="0.9774" stop-color="#989900"/><stop offset="1.0000" stop-color="#998e00"/></linearGradient><linearGradient id="a57"><stop offset="0.0000" stop-color="#009936"/><stop offset="0.3324" stop-color="#009925"/><stop offset="0.6145" stop-color="#009911"/><stop offset="0.7039" stop-color="#209909"/><stop offset="0.7961" stop-color="#479900"/><stop offset="0.8799" stop-color="#6e9900"/><stop offset="0.9609" stop-color="#999900"/><stop offset="1.0000" stop-color="#998500"/></linearGradient><linearGradient id="a58"><stop offset="0.0000" stop-color="#009937"/><stop offset="0.3278" stop-color="#009926"/><stop offset="0.6056" stop-color="#009913"/><stop offset="0.6917" stop-color="#20990b"/><stop offset="0.7833" stop-color="#469902"/><stop offset="0.8667" stop-color="#6e9900"/><stop offset="0.9444" stop-color="#989900"/><stop offset="1.0000" stop-color="#997e00"/></linearGradient><linearGradient id="a59"><stop offset="0.0000" stop-color="#009939"/><stop offset="0.3214" stop-color="#009928"/><stop offset="0.5962" stop-color="#009914"/><stop offset="0.6841" stop-color="#21990d"/><stop offset="0.7720" stop-color="#479904"/><stop offset="0.8077" stop-color="#589900"/><stop offset="0.9286" stop-color="#999900"/><stop offset="1.0000" stop-color="#997700"/></linearGradient><linearGradient id="a60"><stop offset="0.0000" stop-color="#00993a"/><stop offset="0.3179" stop-color="#00992a"/><stop offset="0.5870" stop-color="#009916"/><stop offset="0.6739" stop-color="#22990e"/><stop offset="0.7582" stop-color="#479906"/><stop offset="0.8125" stop-color="#629900"/><stop offset="0.9130" stop-color="#999900"/><stop offset="0.9538" stop-color="#998300"/><stop offset="1.0000" stop-color="#997000"/></linearGradient><linearGradient id="a61"><stop offset="0.0000" stop-color="#00993c"/><stop offset="0.3127" stop-color="#00992b"/><stop offset="0.5768" stop-color="#009918"/><stop offset="0.6604" stop-color="#219911"/><stop offset="0.7439" stop-color="#479908"/><stop offset="0.8167" stop-color="#6c9900"/><stop offset="0.8949" stop-color="#989900"/><stop offset="0.9461" stop-color="#997f00"/><stop offset="1.0000" stop-color="#996900"/></linearGradient><linearGradient id="a62"><stop offset="0.0000" stop-color="#00993d"/><stop offset="0.3067" stop-color="#00992d"/><stop offset="0.5680" stop-color="#00991a"/><stop offset="0.6533" stop-color="#239912"/><stop offset="0.7333" stop-color="#48990a"/><stop offset="0.8187" stop-color="#749900"/><stop offset="0.8800" stop-color="#999900"/><stop offset="0.9360" stop-color="#997c00"/><stop offset="1.0000" stop-color="#996300"/></linearGradient><linearGradient id="a63"><stop offset="0.0000" stop-color="#00993e"/><stop offset="0.3016" stop-color="#00992f"/><stop offset="0.5582" stop-color="#00991c"/><stop offset="0.6402" stop-color="#229914"/><stop offset="0.7196" stop-color="#47990c"/><stop offset="0.8228" stop-color="#7f9900"/><stop offset="0.8651" stop-color="#999900"/><stop offset="0.9259" stop-color="#997900"/><stop offset="1.0000" stop-color="#995d00"/></linearGradient><linearGradient id="a64"><stop offset="0.0000" stop-color="#009940"/><stop offset="0.2984" stop-color="#009930"/><stop offset="0.5497" stop-color="#00991e"/><stop offset="0.6309" stop-color="#239917"/><stop offset="0.7068" stop-color="#47990f"/><stop offset="0.7801" stop-color="#6f9906"/><stop offset="0.8482" stop-color="#989900"/><stop offset="0.9188" stop-color="#997400"/><stop offset="1.0000" stop-color="#995800"/></linearGradient><linearGradient id="a65"><stop offset="0.0000" stop-color="#009942"/><stop offset="0.2927" stop-color="#009932"/><stop offset="0.5415" stop-color="#009920"/><stop offset="0.6218" stop-color="#239919"/><stop offset="0.6969" stop-color="#489911"/><stop offset="0.7668" stop-color="#6f9909"/><stop offset="0.8342" stop-color="#999900"/><stop offset="0.8705" stop-color="#998400"/><stop offset="0.9093" stop-color="#997100"/><stop offset="1.0000" stop-color="#995300"/></linearGradient><linearGradient id="a66"><stop offset="0.0000" stop-color="#009943"/><stop offset="0.2879" stop-color="#009934"/><stop offset="0.5321" stop-color="#009922"/><stop offset="0.6093" stop-color="#23991b"/><stop offset="0.6838" stop-color="#489913"/><stop offset="0.7506" stop-color="#6d990b"/><stop offset="0.8201" stop-color="#999802"/><stop offset="0.8586" stop-color="#998200"/><stop offset="0.8997" stop-color="#996f00"/><stop offset="1.0000" stop-color="#994e00"/></linearGradient><linearGradient id="a67"><stop offset="0.0000" stop-color="#009945"/><stop offset="0.2824" stop-color="#009936"/><stop offset="0.5216" stop-color="#009924"/><stop offset="0.5929" stop-color="#1f991e"/><stop offset="0.6692" stop-color="#469916"/><stop offset="0.7379" stop-color="#6e990e"/><stop offset="0.8041" stop-color="#989905"/><stop offset="0.8397" stop-color="#998400"/><stop offset="0.8906" stop-color="#996c00"/><stop offset="0.9415" stop-color="#995a00"/><stop offset="1.0000" stop-color="#994900"/></linearGradient><linearGradient id="a68"><stop offset="0.0000" stop-color="#009947"/><stop offset="0.2778" stop-color="#009938"/><stop offset="0.5126" stop-color="#009927"/><stop offset="0.5808" stop-color="#1f9920"/><stop offset="0.6566" stop-color="#469919"/><stop offset="0.7247" stop-color="#6e9911"/><stop offset="0.7904" stop-color="#999908"/><stop offset="0.8333" stop-color="#997f01"/><stop offset="0.8813" stop-color="#996900"/><stop offset="0.9369" stop-color="#995600"/><stop offset="1.0000" stop-color="#994500"/></linearGradient><linearGradient id="a69"><stop offset="0.0000" stop-color="#009948"/><stop offset="0.2725" stop-color="#00993a"/><stop offset="0.5050" stop-color="#009929"/><stop offset="0.5725" stop-color="#1f9923"/><stop offset="0.6450" stop-color="#45991b"/><stop offset="0.7075" stop-color="#6b9914"/><stop offset="0.7775" stop-color="#99980b"/><stop offset="0.8225" stop-color="#997d03"/><stop offset="0.8725" stop-color="#996600"/><stop offset="0.9325" stop-color="#995200"/><stop offset="1.0000" stop-color="#994100"/></linearGradient><linearGradient id="a70"><stop offset="0.0000" stop-color="#00994a"/><stop offset="0.2698" stop-color="#00993c"/><stop offset="0.4975" stop-color="#00992b"/><stop offset="0.5668" stop-color="#219925"/><stop offset="0.6361" stop-color="#47991e"/><stop offset="0.7005" stop-color="#6e9916"/><stop offset="0.7624" stop-color="#99990e"/><stop offset="0.8094" stop-color="#997c06"/><stop offset="0.8639" stop-color="#996300"/><stop offset="0.9257" stop-color="#994f00"/><stop offset="1.0000" stop-color="#993d00"/></linearGradient><linearGradient id="a71"><stop offset="0.0000" stop-color="#00994c"/><stop offset="0.2654" stop-color="#00993e"/><stop offset="0.4889" stop-color="#00992d"/><stop offset="0.5553" stop-color="#209927"/><stop offset="0.6241" stop-color="#469920"/><stop offset="0.6880" stop-color="#6e9919"/><stop offset="0.7494" stop-color="#999911"/><stop offset="0.7961" stop-color="#997b08"/><stop offset="0.8526" stop-color="#996200"/><stop offset="0.9189" stop-color="#994c00"/><stop offset="1.0000" stop-color="#993900"/></linearGradient><linearGradient id="a72"><stop offset="0.0000" stop-color="#00994e"/><stop offset="0.2603" stop-color="#009940"/><stop offset="0.4818" stop-color="#009930"/><stop offset="0.5474" stop-color="#21992a"/><stop offset="0.6131" stop-color="#469923"/><stop offset="0.6715" stop-color="#6b991c"/><stop offset="0.7372" stop-color="#999813"/><stop offset="0.7859" stop-color="#99790a"/><stop offset="0.8467" stop-color="#995e01"/><stop offset="0.9173" stop-color="#994800"/><stop offset="1.0000" stop-color="#993600"/></linearGradient><linearGradient id="a73"><stop offset="0.0000" stop-color="#009950"/><stop offset="0.2567" stop-color="#009942"/><stop offset="0.4746" stop-color="#009932"/><stop offset="0.5424" stop-color="#23992c"/><stop offset="0.6053" stop-color="#479926"/><stop offset="0.6659" stop-color="#6e991f"/><stop offset="0.7240" stop-color="#999917"/><stop offset="0.7748" stop-color="#99780c"/><stop offset="0.8378" stop-color="#995c03"/><stop offset="0.9104" stop-color="#994600"/><stop offset="1.0000" stop-color="#993300"/></linearGradient><linearGradient id="a74"><stop offset="0.0000" stop-color="#009951"/><stop offset="0.2542" stop-color="#009944"/><stop offset="0.4676" stop-color="#009935"/><stop offset="0.5324" stop-color="#22992f"/><stop offset="0.5947" stop-color="#479929"/><stop offset="0.6547" stop-color="#6e9922"/><stop offset="0.7098" stop-color="#98991a"/><stop offset="0.7674" stop-color="#99750e"/><stop offset="0.8297" stop-color="#995a04"/><stop offset="0.8681" stop-color="#994d00"/><stop offset="0.9065" stop-color="#994300"/><stop offset="1.0000" stop-color="#993000"/></linearGradient><linearGradient id="a75"><stop offset="0.0000" stop-color="#009953"/><stop offset="0.2500" stop-color="#009947"/><stop offset="0.4595" stop-color="#009937"/><stop offset="0.5238" stop-color="#229932"/><stop offset="0.5857" stop-color="#48992b"/><stop offset="0.6429" stop-color="#6e9925"/><stop offset="0.6976" stop-color="#98991e"/><stop offset="0.7548" stop-color="#997410"/><stop offset="0.8190" stop-color="#995806"/><stop offset="0.8690" stop-color="#994800"/><stop offset="0.9000" stop-color="#994000"/><stop offset="1.0000" stop-color="#992d00"/></linearGradient><linearGradient id="a76"><stop offset="0.0000" stop-color="#009955"/><stop offset="0.2453" stop-color="#009949"/><stop offset="0.4528" stop-color="#00993a"/><stop offset="0.5165" stop-color="#239934"/><stop offset="0.5755" stop-color="#47992e"/><stop offset="0.6321" stop-color="#6f9928"/><stop offset="0.6863" stop-color="#999921"/><stop offset="0.7123" stop-color="#99861a"/><stop offset="0.7429" stop-color="#997312"/><stop offset="0.8113" stop-color="#995507"/><stop offset="0.8750" stop-color="#994200"/><stop offset="1.0000" stop-color="#992a00"/></linearGradient><linearGradient id="a77"><stop offset="0.0000" stop-color="#009957"/><stop offset="0.2412" stop-color="#00994b"/><stop offset="0.4450" stop-color="#00993d"/><stop offset="0.5059" stop-color="#229937"/><stop offset="0.5644" stop-color="#479932"/><stop offset="0.6206" stop-color="#6f992b"/><stop offset="0.6721" stop-color="#989925"/><stop offset="0.7330" stop-color="#997114"/><stop offset="0.8009" stop-color="#995409"/><stop offset="0.8782" stop-color="#993d00"/><stop offset="1.0000" stop-color="#992700"/></linearGradient><linearGradient id="a78"><stop offset="0.0000" stop-color="#009959"/><stop offset="0.2372" stop-color="#00994e"/><stop offset="0.4372" stop-color="#009940"/><stop offset="0.4977" stop-color="#23993a"/><stop offset="0.5558" stop-color="#489934"/><stop offset="0.6093" stop-color="#6f992e"/><stop offset="0.6605" stop-color="#999928"/><stop offset="0.6907" stop-color="#99821f"/><stop offset="0.7209" stop-color="#997017"/><stop offset="0.7930" stop-color="#99510a"/><stop offset="0.8791" stop-color="#993900"/><stop offset="1.0000" stop-color="#992400"/></linearGradient><linearGradient id="a79"><stop offset="0.0000" stop-color="#00995c"/><stop offset="0.2327" stop-color="#009950"/><stop offset="0.4286" stop-color="#009943"/><stop offset="0.4839" stop-color="#1f993e"/><stop offset="0.5438" stop-color="#469938"/><stop offset="0.5968" stop-color="#6d9932"/><stop offset="0.6498" stop-color="#99992c"/><stop offset="0.6774" stop-color="#998322"/><stop offset="0.7097" stop-color="#996f19"/><stop offset="0.7834" stop-color="#994f0c"/><stop offset="0.8825" stop-color="#993500"/><stop offset="1.0000" stop-color="#992200"/></linearGradient><linearGradient id="a80"><stop offset="0.0000" stop-color="#00995e"/><stop offset="0.2288" stop-color="#009953"/><stop offset="0.4211" stop-color="#009946"/><stop offset="0.4760" stop-color="#209941"/><stop offset="0.5332" stop-color="#46993b"/><stop offset="0.5858" stop-color="#6d9936"/><stop offset="0.6362" stop-color="#989930"/><stop offset="0.6682" stop-color="#998124"/><stop offset="0.7002" stop-color="#996d1b"/><stop offset="0.7757" stop-color="#994d0d"/><stop offset="0.8856" stop-color="#993100"/><stop offset="1.0000" stop-color="#991f00"/></linearGradient><linearGradient id="a81"><stop offset="0.0000" stop-color="#009960"/><stop offset="0.2245" stop-color="#009955"/><stop offset="0.4150" stop-color="#009949"/><stop offset="0.4694" stop-color="#209944"/><stop offset="0.5261" stop-color="#47993f"/><stop offset="0.5782" stop-color="#6f9939"/><stop offset="0.6259" stop-color="#999933"/><stop offset="0.6553" stop-color="#998128"/><stop offset="0.6871" stop-color="#996d1f"/><stop offset="0.7234" stop-color="#995c16"/><stop offset="0.7664" stop-color="#994b0e"/><stop offset="0.8231" stop-color="#993b07"/><stop offset="0.8889" stop-color="#992d00"/><stop offset="1.0000" stop-color="#991d00"/></linearGradient><linearGradient id="a82"><stop offset="0.0000" stop-color="#009962"/><stop offset="0.4077" stop-color="#00994c"/><stop offset="0.4617" stop-color="#219947"/><stop offset="0.5158" stop-color="#479942"/><stop offset="0.5653" stop-color="#6e993d"/><stop offset="0.6126" stop-color="#979937"/><stop offset="0.6464" stop-color="#997f2a"/><stop offset="0.6779" stop-color="#996b21"/><stop offset="0.7162" stop-color="#995917"/><stop offset="0.7590" stop-color="#994910"/><stop offset="0.8198" stop-color="#993807"/><stop offset="0.8919" stop-color="#992900"/><stop offset="1.0000" stop-color="#991a00"/></linearGradient><linearGradient id="a83"><stop offset="0.0000" stop-color="#009965"/><stop offset="0.4018" stop-color="#00994f"/><stop offset="0.4554" stop-color="#22994b"/><stop offset="0.5067" stop-color="#469946"/><stop offset="0.5558" stop-color="#6e9941"/><stop offset="0.6027" stop-color="#98993b"/><stop offset="0.6339" stop-color="#99802e"/><stop offset="0.6674" stop-color="#996a23"/><stop offset="0.7054" stop-color="#99581a"/><stop offset="0.7500" stop-color="#994711"/><stop offset="0.8170" stop-color="#993508"/><stop offset="0.8951" stop-color="#992600"/><stop offset="1.0000" stop-color="#991800"/></linearGradient><linearGradient id="a84"><stop offset="0.0000" stop-color="#009967"/><stop offset="0.3947" stop-color="#009952"/><stop offset="0.4479" stop-color="#22994e"/><stop offset="0.4989" stop-color="#48994a"/><stop offset="0.5477" stop-color="#709945"/><stop offset="0.5920" stop-color="#999940"/><stop offset="0.6231" stop-color="#997f31"/><stop offset="0.6563" stop-color="#996926"/><stop offset="0.6962" stop-color="#99561b"/><stop offset="0.7406" stop-color="#994613"/><stop offset="0.8115" stop-color="#993309"/><stop offset="0.8980" stop-color="#992300"/><stop offset="1.0000" stop-color="#991600"/></linearGradient><linearGradient id="a85"><stop offset="0.0000" stop-color="#009969"/><stop offset="0.3877" stop-color="#009956"/><stop offset="0.4405" stop-color="#239952"/><stop offset="0.4890" stop-color="#47994d"/><stop offset="0.5352" stop-color="#6e9949"/><stop offset="0.5793" stop-color="#989944"/><stop offset="0.6123" stop-color="#997e35"/><stop offset="0.6454" stop-color="#996829"/><stop offset="0.6850" stop-color="#99551e"/><stop offset="0.7313" stop-color="#994414"/><stop offset="0.8084" stop-color="#993009"/><stop offset="0.9009" stop-color="#992000"/><stop offset="1.0000" stop-color="#991400"/></linearGradient><linearGradient id="a86"><stop offset="0.0000" stop-color="#00996c"/><stop offset="0.3821" stop-color="#009959"/><stop offset="0.4345" stop-color="#249955"/><stop offset="0.4825" stop-color="#499951"/><stop offset="0.5284" stop-color="#70994d"/><stop offset="0.5699" stop-color="#989949"/><stop offset="0.6004" stop-color="#997e39"/><stop offset="0.6354" stop-color="#99672b"/><stop offset="0.6769" stop-color="#995320"/><stop offset="0.7227" stop-color="#994216"/><stop offset="0.8035" stop-color="#992e0a"/><stop offset="0.9017" stop-color="#991d00"/><stop offset="1.0000" stop-color="#991200"/></linearGradient><linearGradient id="a87"><stop offset="0.0000" stop-color="#00996f"/><stop offset="0.3753" stop-color="#00995d"/><stop offset="0.4252" stop-color="#239959"/><stop offset="0.4729" stop-color="#489955"/><stop offset="0.5163" stop-color="#6e9951"/><stop offset="0.5597" stop-color="#99994d"/><stop offset="0.5900" stop-color="#997d3c"/><stop offset="0.6247" stop-color="#99662e"/><stop offset="0.6659" stop-color="#995222"/><stop offset="0.7137" stop-color="#994117"/><stop offset="0.7939" stop-color="#992c0b"/><stop offset="0.8915" stop-color="#991c01"/><stop offset="1.0000" stop-color="#991000"/></linearGradient><linearGradient id="a88"><stop offset="0.0000" stop-color="#009971"/><stop offset="0.3693" stop-color="#009961"/><stop offset="0.4190" stop-color="#24995d"/><stop offset="0.4644" stop-color="#48995a"/><stop offset="0.5076" stop-color="#6e9956"/><stop offset="0.5486" stop-color="#989952"/><stop offset="0.5832" stop-color="#997b3f"/><stop offset="0.6177" stop-color="#996430"/><stop offset="0.6587" stop-color="#995024"/><stop offset="0.7063" stop-color="#993f19"/><stop offset="0.7840" stop-color="#992b0d"/><stop offset="0.8812" stop-color="#991b02"/><stop offset="1.0000" stop-color="#990e00"/></linearGradient><linearGradient id="a89"><stop offset="0.0000" stop-color="#009974"/><stop offset="0.3640" stop-color="#019964"/><stop offset="0.4111" stop-color="#239961"/><stop offset="0.4561" stop-color="#47995e"/><stop offset="0.4989" stop-color="#6f995b"/><stop offset="0.5396" stop-color="#999957"/><stop offset="0.5717" stop-color="#997b43"/><stop offset="0.6060" stop-color="#996434"/><stop offset="0.6488" stop-color="#994f26"/><stop offset="0.6981" stop-color="#993d1a"/><stop offset="0.7752" stop-color="#992a0e"/><stop offset="0.8715" stop-color="#991a03"/><stop offset="0.9143" stop-color="#991500"/><stop offset="1.0000" stop-color="#990d00"/></linearGradient><linearGradient id="a90"><stop offset="0.0000" stop-color="#009977"/><stop offset="0.3553" stop-color="#009969"/><stop offset="0.3979" stop-color="#1e9966"/><stop offset="0.4447" stop-color="#459963"/><stop offset="0.4872" stop-color="#6d995f"/><stop offset="0.5277" stop-color="#97995c"/><stop offset="0.5638" stop-color="#997946"/><stop offset="0.5979" stop-color="#996236"/><stop offset="0.6404" stop-color="#994d28"/><stop offset="0.6915" stop-color="#993b1c"/><stop offset="0.7681" stop-color="#99280f"/><stop offset="0.8638" stop-color="#991904"/><stop offset="0.9170" stop-color="#991300"/><stop offset="1.0000" stop-color="#990b00"/></linearGradient><linearGradient id="a91"><stop offset="0.0000" stop-color="#00997a"/><stop offset="0.3488" stop-color="#00996d"/><stop offset="0.3911" stop-color="#1f996a"/><stop offset="0.4376" stop-color="#469967"/><stop offset="0.4799" stop-color="#6f9964"/><stop offset="0.5180" stop-color="#989961"/><stop offset="0.5518" stop-color="#99794a"/><stop offset="0.5877" stop-color="#996139"/><stop offset="0.6300" stop-color="#994c2a"/><stop offset="0.6808" stop-color="#993a1d"/><stop offset="0.7569" stop-color="#992710"/><stop offset="0.8520" stop-color="#991805"/><stop offset="0.9197" stop-color="#991000"/><stop offset="1.0000" stop-color="#990900"/></linearGradient><linearGradient id="a92"><stop offset="0.0000" stop-color="#00997d"/><stop offset="0.3438" stop-color="#009971"/><stop offset="0.3857" stop-color="#20996f"/><stop offset="0.4298" stop-color="#46996c"/><stop offset="0.4717" stop-color="#6f9969"/><stop offset="0.5094" stop-color="#999966"/><stop offset="0.5409" stop-color="#997a4f"/><stop offset="0.5765" stop-color="#99613d"/><stop offset="0.6205" stop-color="#994b2d"/><stop offset="0.6730" stop-color="#99381f"/><stop offset="0.7484" stop-color="#992612"/><stop offset="0.8428" stop-color="#991706"/><stop offset="0.9224" stop-color="#990e00"/><stop offset="1.0000" stop-color="#990800"/></linearGradient><linearGradient id="a93"><stop offset="0.0000" stop-color="#009980"/><stop offset="0.3375" stop-color="#009975"/><stop offset="0.3792" stop-color="#209973"/><stop offset="0.4208" stop-color="#459971"/><stop offset="0.4583" stop-color="#6b996f"/><stop offset="0.5000" stop-color="#99986b"/><stop offset="0.5312" stop-color="#997953"/><stop offset="0.5687" stop-color="#995e3f"/><stop offset="0.6125" stop-color="#99492f"/><stop offset="0.6646" stop-color="#993721"/><stop offset="0.7417" stop-color="#992413"/><stop offset="0.8354" stop-color="#991607"/><stop offset="0.9229" stop-color="#990c00"/><stop offset="1.0000" stop-color="#990600"/></linearGradient><linearGradient id="a94"><stop offset="0.0000" stop-color="#009983"/><stop offset="0.3313" stop-color="#00997a"/><stop offset="0.3706" stop-color="#1f9978"/><stop offset="0.4120" stop-color="#459976"/><stop offset="0.4907" stop-color="#999770"/><stop offset="0.5217" stop-color="#997857"/><stop offset="0.5590" stop-color="#995d42"/><stop offset="0.6046" stop-color="#994730"/><stop offset="0.6584" stop-color="#993422"/><stop offset="0.7350" stop-color="#992313"/><stop offset="0.8302" stop-color="#991408"/><stop offset="0.9255" stop-color="#990a00"/><stop offset="1.0000" stop-color="#990400"/></linearGradient><linearGradient id="a95"><stop offset="0.0000" stop-color="#009986"/><stop offset="0.3265" stop-color="#00997e"/><stop offset="0.3676" stop-color="#22997d"/><stop offset="0.4066" stop-color="#46997b"/><stop offset="0.4435" stop-color="#6d997a"/><stop offset="0.4805" stop-color="#999977"/><stop offset="0.5113" stop-color="#99785d"/><stop offset="0.5503" stop-color="#995c45"/><stop offset="0.5955" stop-color="#994633"/><stop offset="0.6489" stop-color="#993324"/><stop offset="0.7248" stop-color="#992215"/><stop offset="0.8193" stop-color="#991309"/><stop offset="0.9281" stop-color="#990800"/><stop offset="1.0000" stop-color="#990300"/></linearGradient><linearGradient id="a96"><stop offset="0.0000" stop-color="#00998a"/><stop offset="0.3204" stop-color="#009983"/><stop offset="0.3612" stop-color="#239982"/><stop offset="0.3980" stop-color="#469981"/><stop offset="0.4327" stop-color="#6b997f"/><stop offset="0.4714" stop-color="#99987d"/><stop offset="0.5020" stop-color="#997761"/><stop offset="0.5408" stop-color="#995b49"/><stop offset="0.5857" stop-color="#994535"/><stop offset="0.6408" stop-color="#993225"/><stop offset="0.7184" stop-color="#992016"/><stop offset="0.8122" stop-color="#99120a"/><stop offset="0.9306" stop-color="#990600"/><stop offset="1.0000" stop-color="#990200"/></linearGradient><linearGradient id="a97"><stop offset="0.0000" stop-color="#00998d"/><stop offset="0.3144" stop-color="#009988"/><stop offset="0.3895" stop-color="#459986"/><stop offset="0.4260" stop-color="#6e9985"/><stop offset="0.4604" stop-color="#999984"/><stop offset="0.4625" stop-color="#999782"/><stop offset="0.4929" stop-color="#997665"/><stop offset="0.5314" stop-color="#995a4c"/><stop offset="0.5781" stop-color="#994337"/><stop offset="0.6329" stop-color="#993027"/><stop offset="0.7099" stop-color="#991f17"/><stop offset="0.8053" stop-color="#99110b"/><stop offset="0.9331" stop-color="#990500"/><stop offset="1.0000" stop-color="#990000"/></linearGradient><linearGradient id="a98"><stop offset="0.0000" stop-color="#009991"/><stop offset="0.3085" stop-color="#00998e"/><stop offset="0.3468" stop-color="#23998d"/><stop offset="0.3831" stop-color="#47998c"/><stop offset="0.4173" stop-color="#6e998c"/><stop offset="0.4516" stop-color="#99988a"/><stop offset="0.4839" stop-color="#997569"/><stop offset="0.5222" stop-color="#99594f"/><stop offset="0.5685" stop-color="#99413a"/><stop offset="0.6250" stop-color="#992e28"/><stop offset="0.7016" stop-color="#991d18"/><stop offset="0.7984" stop-color="#990f0b"/><stop offset="0.9355" stop-color="#990300"/><stop offset="1.0000" stop-color="#990000"/></linearGradient><linearGradient id="a99"><stop offset="0.0000" stop-color="#009994"/><stop offset="0.3040" stop-color="#009993"/><stop offset="0.3420" stop-color="#239993"/><stop offset="0.3760" stop-color="#469992"/><stop offset="0.4440" stop-color="#999790"/><stop offset="0.4760" stop-color="#99746e"/><stop offset="0.5140" stop-color="#995753"/><stop offset="0.5600" stop-color="#99403c"/><stop offset="0.6180" stop-color="#992d2a"/><stop offset="0.6960" stop-color="#991c19"/><stop offset="0.7920" stop-color="#990e0c"/><stop offset="0.9380" stop-color="#990100"/><stop offset="1.0000" stop-color="#990000"/></linearGradient><linearGradient id="a100"><stop offset="0.0000" stop-color="#009998"/><stop offset="0.2982" stop-color="#019998"/><stop offset="0.3360" stop-color="#249999"/><stop offset="0.3698" stop-color="#489999"/><stop offset="0.4016" stop-color="#6e9999"/><stop offset="0.4334" stop-color="#999999"/><stop offset="0.4652" stop-color="#997474"/><stop offset="0.5030" stop-color="#995757"/><stop offset="0.5507" stop-color="#993f3f"/><stop offset="0.6103" stop-color="#992b2b"/><stop offset="0.6879" stop-color="#991a1b"/><stop offset="0.7853" stop-color="#990d0d"/><stop offset="0.9364" stop-color="#990000"/><stop offset="1.0000" stop-color="#990000"/></linearGradient><linearGradient id="a101"><stop offset="0.0000" stop-color="#009699"/><stop offset="0.2905" stop-color="#009499"/><stop offset="0.3202" stop-color="#1a9499"/><stop offset="0.3577" stop-color="#419399"/><stop offset="0.3953" stop-color="#6c9399"/><stop offset="0.4289" stop-color="#999299"/><stop offset="0.4308" stop-color="#999097"/><stop offset="0.4625" stop-color="#996e73"/><stop offset="0.5020" stop-color="#995156"/><stop offset="0.5494" stop-color="#993b3f"/><stop offset="0.6087" stop-color="#99282b"/><stop offset="0.6917" stop-color="#99171a"/><stop offset="0.7945" stop-color="#990a0c"/><stop offset="0.9150" stop-color="#990002"/><stop offset="1.0000" stop-color="#990000"/></linearGradient><linearGradient id="a102"><stop offset="0.0000" stop-color="#009299"/><stop offset="0.2849" stop-color="#008e99"/><stop offset="0.3183" stop-color="#1e8e99"/><stop offset="0.3556" stop-color="#448d99"/><stop offset="0.4263" stop-color="#998a97"/><stop offset="0.4578" stop-color="#996974"/><stop offset="0.4971" stop-color="#994e57"/><stop offset="0.5462" stop-color="#99373f"/><stop offset="0.6051" stop-color="#99252c"/><stop offset="0.6916" stop-color="#99151a"/><stop offset="0.8016" stop-color="#99070b"/><stop offset="0.8939" stop-color="#990003"/><stop offset="1.0000" stop-color="#990000"/></linearGradient><linearGradient id="a103"><stop offset="0.0000" stop-color="#008e99"/><stop offset="0.2807" stop-color="#008999"/><stop offset="0.3158" stop-color="#1f8899"/><stop offset="0.3528" stop-color="#458799"/><stop offset="0.3840" stop-color="#688699"/><stop offset="0.4230" stop-color="#998398"/><stop offset="0.4561" stop-color="#996373"/><stop offset="0.4951" stop-color="#994957"/><stop offset="0.5439" stop-color="#99343f"/><stop offset="0.6043" stop-color="#99222c"/><stop offset="0.6940" stop-color="#991219"/><stop offset="0.8109" stop-color="#99050b"/><stop offset="0.8733" stop-color="#990005"/><stop offset="0.9474" stop-color="#990000"/><stop offset="1.0000" stop-color="#990000"/></linearGradient><linearGradient id="a104"><stop offset="0.0000" stop-color="#008b99"/><stop offset="0.2752" stop-color="#008499"/><stop offset="0.3101" stop-color="#1f8399"/><stop offset="0.3488" stop-color="#468199"/><stop offset="0.3818" stop-color="#6b8099"/><stop offset="0.4186" stop-color="#997e98"/><stop offset="0.4516" stop-color="#995e74"/><stop offset="0.4903" stop-color="#994658"/><stop offset="0.5407" stop-color="#99313f"/><stop offset="0.6008" stop-color="#99202c"/><stop offset="0.6977" stop-color="#990f18"/><stop offset="0.8217" stop-color="#99020a"/><stop offset="0.9477" stop-color="#990000"/><stop offset="1.0000" stop-color="#990000"/></linearGradient><linearGradient id="a105"><stop offset="0.0000" stop-color="#008799"/><stop offset="0.2697" stop-color="#007f99"/><stop offset="0.3064" stop-color="#207e99"/><stop offset="0.3449" stop-color="#467c99"/><stop offset="0.3796" stop-color="#6d7a99"/><stop offset="0.4143" stop-color="#997899"/><stop offset="0.4470" stop-color="#995a75"/><stop offset="0.4875" stop-color="#994157"/><stop offset="0.5376" stop-color="#992d3f"/><stop offset="0.5973" stop-color="#991e2c"/><stop offset="0.6975" stop-color="#990d18"/><stop offset="0.8304" stop-color="#990009"/><stop offset="0.9499" stop-color="#990000"/><stop offset="1.0000" stop-color="#990000"/></linearGradient><linearGradient id="a106"><stop offset="0.0000" stop-color="#008399"/><stop offset="0.2649" stop-color="#007b99"/><stop offset="0.3033" stop-color="#217999"/><stop offset="0.3417" stop-color="#477799"/><stop offset="0.3781" stop-color="#707499"/><stop offset="0.4107" stop-color="#997299"/><stop offset="0.4434" stop-color="#995676"/><stop offset="0.4837" stop-color="#993e58"/><stop offset="0.5336" stop-color="#992b40"/><stop offset="0.5950" stop-color="#991b2d"/><stop offset="0.6891" stop-color="#990c1a"/><stop offset="0.8119" stop-color="#99000b"/><stop offset="0.9539" stop-color="#990000"/><stop offset="1.0000" stop-color="#990000"/></linearGradient><linearGradient id="a107"><stop offset="0.0000" stop-color="#008099"/><stop offset="0.2595" stop-color="#007699"/><stop offset="0.3340" stop-color="#447299"/><stop offset="0.4084" stop-color="#996b97"/><stop offset="0.4427" stop-color="#994f73"/><stop offset="0.4828" stop-color="#993957"/><stop offset="0.5324" stop-color="#992740"/><stop offset="0.5935" stop-color="#99192d"/><stop offset="0.6813" stop-color="#990b1b"/><stop offset="0.7920" stop-color="#99000d"/><stop offset="0.9427" stop-color="#990001"/><stop offset="1.0000" stop-color="#990000"/></linearGradient><linearGradient id="a108"><stop offset="0.0000" stop-color="#007c99"/><stop offset="0.2543" stop-color="#007299"/><stop offset="0.3302" stop-color="#456d99"/><stop offset="0.3643" stop-color="#6a6a99"/><stop offset="0.4042" stop-color="#996698"/><stop offset="0.4383" stop-color="#994b74"/><stop offset="0.4801" stop-color="#993657"/><stop offset="0.5313" stop-color="#99243f"/><stop offset="0.5920" stop-color="#99162d"/><stop offset="0.6717" stop-color="#990a1c"/><stop offset="0.7723" stop-color="#99000f"/><stop offset="0.9203" stop-color="#990002"/><stop offset="1.0000" stop-color="#990000"/></linearGradient><linearGradient id="a109"><stop offset="0.0000" stop-color="#007999"/><stop offset="0.2505" stop-color="#006d99"/><stop offset="0.2900" stop-color="#226b99"/><stop offset="0.3277" stop-color="#466899"/><stop offset="0.3616" stop-color="#6a6599"/><stop offset="0.4011" stop-color="#996198"/><stop offset="0.4350" stop-color="#994775"/><stop offset="0.4765" stop-color="#993358"/><stop offset="0.5273" stop-color="#992240"/><stop offset="0.5895" stop-color="#99142d"/><stop offset="0.6629" stop-color="#99091e"/><stop offset="0.7533" stop-color="#990011"/><stop offset="0.9021" stop-color="#990004"/><stop offset="1.0000" stop-color="#990000"/></linearGradient><linearGradient id="a110"><stop offset="0.0000" stop-color="#007699"/><stop offset="0.2453" stop-color="#006999"/><stop offset="0.2865" stop-color="#236699"/><stop offset="0.3240" stop-color="#476399"/><stop offset="0.3596" stop-color="#6c6099"/><stop offset="0.3970" stop-color="#995c99"/><stop offset="0.4307" stop-color="#994475"/><stop offset="0.4719" stop-color="#993059"/><stop offset="0.5225" stop-color="#992041"/><stop offset="0.5861" stop-color="#99122d"/><stop offset="0.6536" stop-color="#99081f"/><stop offset="0.7341" stop-color="#990013"/><stop offset="0.8839" stop-color="#990005"/><stop offset="1.0000" stop-color="#990000"/></linearGradient><linearGradient id="a111"><stop offset="0.0000" stop-color="#007299"/><stop offset="0.2402" stop-color="#006599"/><stop offset="0.2812" stop-color="#236299"/><stop offset="0.3203" stop-color="#475e99"/><stop offset="0.3575" stop-color="#6f5b99"/><stop offset="0.3929" stop-color="#995799"/><stop offset="0.4264" stop-color="#994076"/><stop offset="0.4693" stop-color="#992c59"/><stop offset="0.5196" stop-color="#991d41"/><stop offset="0.5829" stop-color="#99102e"/><stop offset="0.7151" stop-color="#990016"/><stop offset="0.8659" stop-color="#990007"/><stop offset="1.0000" stop-color="#990000"/></linearGradient><linearGradient id="a112"><stop offset="0.0000" stop-color="#006f99"/><stop offset="0.2352" stop-color="#016199"/><stop offset="0.3130" stop-color="#455a99"/><stop offset="0.3907" stop-color="#995197"/><stop offset="0.4241" stop-color="#993b75"/><stop offset="0.4667" stop-color="#992958"/><stop offset="0.5185" stop-color="#991a41"/><stop offset="0.5815" stop-color="#990e2e"/><stop offset="0.6944" stop-color="#990018"/><stop offset="0.7593" stop-color="#990010"/><stop offset="0.9019" stop-color="#990004"/><stop offset="1.0000" stop-color="#990000"/></linearGradient><linearGradient id="a113"><stop offset="0.0000" stop-color="#006c99"/><stop offset="0.2319" stop-color="#015d99"/><stop offset="0.3117" stop-color="#455699"/><stop offset="0.3896" stop-color="#994c98"/><stop offset="0.4249" stop-color="#993775"/><stop offset="0.4675" stop-color="#992658"/><stop offset="0.5195" stop-color="#991741"/><stop offset="0.5826" stop-color="#990c2e"/><stop offset="0.6809" stop-color="#99001b"/><stop offset="0.7588" stop-color="#990011"/><stop offset="0.8905" stop-color="#990005"/><stop offset="1.0000" stop-color="#990000"/></linearGradient><linearGradient id="a114"><stop offset="0.0000" stop-color="#006999"/><stop offset="0.2298" stop-color="#005a99"/><stop offset="0.2693" stop-color="#1e5699"/><stop offset="0.3126" stop-color="#445299"/><stop offset="0.3503" stop-color="#6a4e99"/><stop offset="0.3936" stop-color="#994898"/><stop offset="0.4294" stop-color="#993475"/><stop offset="0.4708" stop-color="#99245a"/><stop offset="0.5235" stop-color="#991642"/><stop offset="0.5857" stop-color="#990b30"/><stop offset="0.6761" stop-color="#99001e"/><stop offset="0.7533" stop-color="#990013"/><stop offset="1.0000" stop-color="#990000"/></linearGradient><linearGradient id="a115"><stop offset="0.0000" stop-color="#006699"/><stop offset="0.2299" stop-color="#005699"/><stop offset="0.2720" stop-color="#205299"/><stop offset="0.3161" stop-color="#454e99"/><stop offset="0.3563" stop-color="#6c4999"/><stop offset="0.3985" stop-color="#994498"/><stop offset="0.4349" stop-color="#993076"/><stop offset="0.4770" stop-color="#99215b"/><stop offset="0.5287" stop-color="#991444"/><stop offset="0.5900" stop-color="#990a31"/><stop offset="0.6724" stop-color="#990021"/><stop offset="0.7567" stop-color="#990015"/><stop offset="1.0000" stop-color="#990001"/></linearGradient><linearGradient id="a116"><stop offset="0.0000" stop-color="#006399"/><stop offset="0.2300" stop-color="#005399"/><stop offset="0.2749" stop-color="#214f99"/><stop offset="0.3216" stop-color="#484a99"/><stop offset="0.3626" stop-color="#6e4599"/><stop offset="0.4035" stop-color="#994099"/><stop offset="0.4386" stop-color="#992e78"/><stop offset="0.4815" stop-color="#991f5d"/><stop offset="0.5322" stop-color="#991346"/><stop offset="0.5945" stop-color="#990833"/><stop offset="0.6686" stop-color="#990024"/><stop offset="0.7602" stop-color="#990016"/><stop offset="1.0000" stop-color="#990003"/></linearGradient><linearGradient id="a117"><stop offset="0.0000" stop-color="#005f99"/><stop offset="0.2306" stop-color="#004f99"/><stop offset="0.2783" stop-color="#224b99"/><stop offset="0.3241" stop-color="#474699"/><stop offset="0.3678" stop-color="#6e4199"/><stop offset="0.4095" stop-color="#993b99"/><stop offset="0.4453" stop-color="#992b79"/><stop offset="0.4891" stop-color="#991c5d"/><stop offset="0.5408" stop-color="#991147"/><stop offset="0.6024" stop-color="#990734"/><stop offset="0.6660" stop-color="#990027"/><stop offset="0.7654" stop-color="#990018"/><stop offset="1.0000" stop-color="#990004"/></linearGradient><linearGradient id="a118"><stop offset="0.0000" stop-color="#005d99"/><stop offset="0.2308" stop-color="#004c99"/><stop offset="0.2794" stop-color="#224899"/><stop offset="0.3259" stop-color="#464399"/><stop offset="0.4170" stop-color="#993697"/><stop offset="0.4534" stop-color="#992778"/><stop offset="0.4960" stop-color="#991a5e"/><stop offset="0.5486" stop-color="#990f48"/><stop offset="0.6093" stop-color="#990636"/><stop offset="0.6619" stop-color="#99002a"/><stop offset="0.7713" stop-color="#990019"/><stop offset="1.0000" stop-color="#990006"/></linearGradient><linearGradient id="a119"><stop offset="0.0000" stop-color="#005a99"/><stop offset="0.2314" stop-color="#004999"/><stop offset="0.2831" stop-color="#234499"/><stop offset="0.3306" stop-color="#463f99"/><stop offset="0.3740" stop-color="#6b3a99"/><stop offset="0.4236" stop-color="#993398"/><stop offset="0.4607" stop-color="#992479"/><stop offset="0.5041" stop-color="#99175f"/><stop offset="0.5558" stop-color="#990d49"/><stop offset="0.6157" stop-color="#990537"/><stop offset="0.6591" stop-color="#99002e"/><stop offset="0.7748" stop-color="#99001b"/><stop offset="1.0000" stop-color="#990007"/></linearGradient><linearGradient id="a120"><stop offset="0.0000" stop-color="#005799"/><stop offset="0.2316" stop-color="#004699"/><stop offset="0.2842" stop-color="#224199"/><stop offset="0.3347" stop-color="#473b99"/><stop offset="0.3811" stop-color="#6d3699"/><stop offset="0.4295" stop-color="#992f98"/><stop offset="0.4653" stop-color="#99217b"/><stop offset="0.5095" stop-color="#991661"/><stop offset="0.5600" stop-color="#990c4c"/><stop offset="0.6211" stop-color="#990439"/><stop offset="0.6547" stop-color="#990031"/><stop offset="0.7789" stop-color="#99001d"/><stop offset="1.0000" stop-color="#990009"/></linearGradient><linearGradient id="a121"><stop offset="0.0000" stop-color="#005499"/><stop offset="0.2323" stop-color="#004399"/><stop offset="0.2882" stop-color="#233d99"/><stop offset="0.3398" stop-color="#483899"/><stop offset="0.3871" stop-color="#6d3299"/><stop offset="0.4366" stop-color="#992b99"/><stop offset="0.4731" stop-color="#991e7b"/><stop offset="0.5161" stop-color="#991462"/><stop offset="0.5677" stop-color="#990a4d"/><stop offset="0.6280" stop-color="#99023b"/><stop offset="0.6989" stop-color="#99002c"/><stop offset="0.7828" stop-color="#99001f"/><stop offset="1.0000" stop-color="#99000b"/></linearGradient><linearGradient id="a122"><stop offset="0.0000" stop-color="#005199"/><stop offset="0.2325" stop-color="#004099"/><stop offset="0.2895" stop-color="#233a99"/><stop offset="0.3443" stop-color="#483599"/><stop offset="0.3947" stop-color="#6f2e99"/><stop offset="0.4430" stop-color="#992899"/><stop offset="0.4803" stop-color="#991c7c"/><stop offset="0.5241" stop-color="#991163"/><stop offset="0.5746" stop-color="#99094f"/><stop offset="0.6338" stop-color="#99013d"/><stop offset="0.7039" stop-color="#99002e"/><stop offset="0.7873" stop-color="#990021"/><stop offset="1.0000" stop-color="#99000c"/></linearGradient><linearGradient id="a123"><stop offset="0.0000" stop-color="#004e99"/><stop offset="0.2327" stop-color="#003d99"/><stop offset="0.3445" stop-color="#463299"/><stop offset="0.4519" stop-color="#992497"/><stop offset="0.4899" stop-color="#99187b"/><stop offset="0.5324" stop-color="#990f64"/><stop offset="0.5839" stop-color="#99074f"/><stop offset="0.6421" stop-color="#99003e"/><stop offset="0.7114" stop-color="#99002f"/><stop offset="0.7942" stop-color="#990022"/><stop offset="1.0000" stop-color="#99000e"/></linearGradient><linearGradient id="a124"><stop offset="0.0000" stop-color="#004b99"/><stop offset="0.2334" stop-color="#013a99"/><stop offset="0.2929" stop-color="#223599"/><stop offset="0.3501" stop-color="#472e99"/><stop offset="0.4600" stop-color="#992098"/><stop offset="0.4966" stop-color="#99167d"/><stop offset="0.5400" stop-color="#990d66"/><stop offset="0.5904" stop-color="#990552"/><stop offset="0.6499" stop-color="#990040"/><stop offset="0.7185" stop-color="#990031"/><stop offset="0.7986" stop-color="#990025"/><stop offset="1.0000" stop-color="#990010"/></linearGradient><linearGradient id="a125"><stop offset="0.0000" stop-color="#004999"/><stop offset="0.2336" stop-color="#013899"/><stop offset="0.2967" stop-color="#233299"/><stop offset="0.3551" stop-color="#472b99"/><stop offset="0.4089" stop-color="#6c2599"/><stop offset="0.4673" stop-color="#991d98"/><stop offset="0.5047" stop-color="#99137e"/><stop offset="0.5491" stop-color="#990b66"/><stop offset="0.5981" stop-color="#990453"/><stop offset="0.6565" stop-color="#990042"/><stop offset="0.7243" stop-color="#990033"/><stop offset="0.8037" stop-color="#990026"/><stop offset="1.0000" stop-color="#990012"/></linearGradient><linearGradient id="a126"><stop offset="0.0000" stop-color="#004699"/><stop offset="0.2321" stop-color="#003599"/><stop offset="0.2943" stop-color="#202f99"/><stop offset="0.3589" stop-color="#462999"/><stop offset="0.4163" stop-color="#6d2299"/><stop offset="0.4761" stop-color="#991a99"/><stop offset="0.5144" stop-color="#99117e"/><stop offset="0.5574" stop-color="#990968"/><stop offset="0.6268" stop-color="#99004e"/><stop offset="0.6651" stop-color="#990044"/><stop offset="0.8086" stop-color="#990029"/><stop offset="1.0000" stop-color="#990014"/></linearGradient><linearGradient id="a127"><stop offset="0.0000" stop-color="#004399"/><stop offset="0.2323" stop-color="#003299"/><stop offset="0.2983" stop-color="#212c99"/><stop offset="0.3643" stop-color="#472699"/><stop offset="0.4254" stop-color="#6e1e99"/><stop offset="0.4841" stop-color="#991799"/><stop offset="0.5208" stop-color="#990e80"/><stop offset="0.5648" stop-color="#99076a"/><stop offset="0.6210" stop-color="#990055"/><stop offset="0.6724" stop-color="#990046"/><stop offset="0.8142" stop-color="#99002b"/><stop offset="1.0000" stop-color="#990017"/></linearGradient><linearGradient id="a128"><stop offset="0.0000" stop-color="#004199"/><stop offset="0.2325" stop-color="#003099"/><stop offset="0.3025" stop-color="#222a99"/><stop offset="0.3700" stop-color="#482399"/><stop offset="0.4325" stop-color="#6f1b99"/><stop offset="0.4925" stop-color="#991399"/><stop offset="0.5325" stop-color="#990b7f"/><stop offset="0.5750" stop-color="#99056a"/><stop offset="0.6150" stop-color="#99005b"/><stop offset="0.6800" stop-color="#990048"/><stop offset="0.8175" stop-color="#99002d"/><stop offset="1.0000" stop-color="#990019"/></linearGradient><linearGradient id="a129"><stop offset="0.0000" stop-color="#003e99"/><stop offset="0.2314" stop-color="#002d99"/><stop offset="0.3033" stop-color="#222799"/><stop offset="0.3702" stop-color="#452099"/><stop offset="0.4319" stop-color="#6a1999"/><stop offset="0.5039" stop-color="#991098"/><stop offset="0.5424" stop-color="#990980"/><stop offset="0.5835" stop-color="#99036c"/><stop offset="0.6324" stop-color="#99005a"/><stop offset="0.6889" stop-color="#99004a"/><stop offset="0.8252" stop-color="#99002f"/><stop offset="1.0000" stop-color="#99001b"/></linearGradient><linearGradient id="a130"><stop offset="0.0000" stop-color="#003c99"/><stop offset="0.2316" stop-color="#002b99"/><stop offset="0.3053" stop-color="#222599"/><stop offset="0.3763" stop-color="#461d99"/><stop offset="0.4395" stop-color="#6a1699"/><stop offset="0.5132" stop-color="#990d98"/><stop offset="0.5526" stop-color="#990680"/><stop offset="0.5947" stop-color="#99016d"/><stop offset="0.6421" stop-color="#99005b"/><stop offset="0.6974" stop-color="#99004c"/><stop offset="0.8289" stop-color="#990032"/><stop offset="1.0000" stop-color="#99001e"/></linearGradient><linearGradient id="a131"><stop offset="0.0000" stop-color="#003999"/><stop offset="0.2324" stop-color="#002999"/><stop offset="0.3108" stop-color="#232299"/><stop offset="0.3838" stop-color="#471b99"/><stop offset="0.4514" stop-color="#6c1399"/><stop offset="0.5243" stop-color="#990a98"/><stop offset="0.5622" stop-color="#990482"/><stop offset="0.6027" stop-color="#990070"/><stop offset="0.6514" stop-color="#99005e"/><stop offset="0.7054" stop-color="#99004e"/><stop offset="0.8351" stop-color="#990035"/><stop offset="1.0000" stop-color="#990021"/></linearGradient><linearGradient id="a132"><stop offset="0.0000" stop-color="#003799"/><stop offset="0.2327" stop-color="#002699"/><stop offset="0.3130" stop-color="#222099"/><stop offset="0.3906" stop-color="#471899"/><stop offset="0.4626" stop-color="#6e1099"/><stop offset="0.5346" stop-color="#990799"/><stop offset="0.5873" stop-color="#99007c"/><stop offset="0.6150" stop-color="#990070"/><stop offset="0.7147" stop-color="#990050"/><stop offset="0.8421" stop-color="#990037"/><stop offset="1.0000" stop-color="#990023"/></linearGradient><linearGradient id="a133"><stop offset="0.0000" stop-color="#003499"/><stop offset="0.2314" stop-color="#002499"/><stop offset="0.3171" stop-color="#231d99"/><stop offset="0.3971" stop-color="#481599"/><stop offset="0.4743" stop-color="#6f0d99"/><stop offset="0.5457" stop-color="#990599"/><stop offset="0.5800" stop-color="#990086"/><stop offset="0.6257" stop-color="#990072"/><stop offset="0.7229" stop-color="#990053"/><stop offset="0.8457" stop-color="#99003a"/><stop offset="1.0000" stop-color="#990027"/></linearGradient><linearGradient id="a134"><stop offset="0.0000" stop-color="#003299"/><stop offset="0.2317" stop-color="#002299"/><stop offset="0.3196" stop-color="#231b99"/><stop offset="0.4047" stop-color="#481399"/><stop offset="0.4839" stop-color="#700b99"/><stop offset="0.5572" stop-color="#990299"/><stop offset="0.6364" stop-color="#990073"/><stop offset="0.7331" stop-color="#990055"/><stop offset="0.8534" stop-color="#99003d"/><stop offset="1.0000" stop-color="#99002a"/></linearGradient><linearGradient id="a135"><stop offset="0.0000" stop-color="#002f99"/><stop offset="0.2319" stop-color="#002099"/><stop offset="0.3223" stop-color="#231999"/><stop offset="0.4066" stop-color="#461199"/><stop offset="0.4849" stop-color="#6b0999"/><stop offset="0.5723" stop-color="#990098"/><stop offset="0.6506" stop-color="#990074"/><stop offset="0.7440" stop-color="#990057"/><stop offset="0.8584" stop-color="#990040"/><stop offset="1.0000" stop-color="#99002d"/></linearGradient><linearGradient id="a136"><stop offset="0.0000" stop-color="#002d99"/><stop offset="0.2305" stop-color="#011e99"/><stop offset="0.3240" stop-color="#221699"/><stop offset="0.4143" stop-color="#470e99"/><stop offset="0.5545" stop-color="#890099"/><stop offset="0.5857" stop-color="#990098"/><stop offset="0.6604" stop-color="#990077"/><stop offset="0.7539" stop-color="#99005a"/><stop offset="0.8660" stop-color="#990043"/><stop offset="1.0000" stop-color="#990030"/></linearGradient><linearGradient id="a137"><stop offset="0.0000" stop-color="#002a99"/><stop offset="0.2308" stop-color="#011c99"/><stop offset="0.3301" stop-color="#231499"/><stop offset="0.4231" stop-color="#470c99"/><stop offset="0.5449" stop-color="#7e0099"/><stop offset="0.5994" stop-color="#990099"/><stop offset="0.6731" stop-color="#990079"/><stop offset="0.7628" stop-color="#99005d"/><stop offset="0.8718" stop-color="#990047"/><stop offset="1.0000" stop-color="#990034"/></linearGradient><linearGradient id="a138"><stop offset="0.0000" stop-color="#002899"/><stop offset="0.2292" stop-color="#011a99"/><stop offset="0.3322" stop-color="#231299"/><stop offset="0.4319" stop-color="#480a99"/><stop offset="0.5349" stop-color="#730099"/><stop offset="0.6146" stop-color="#990099"/><stop offset="0.6877" stop-color="#99007a"/><stop offset="0.7741" stop-color="#990060"/><stop offset="0.8771" stop-color="#99004b"/><stop offset="1.0000" stop-color="#990038"/></linearGradient><linearGradient id="a139"><stop offset="0.0000" stop-color="#002699"/><stop offset="0.2260" stop-color="#001899"/><stop offset="0.3322" stop-color="#211099"/><stop offset="0.4384" stop-color="#470899"/><stop offset="0.5240" stop-color="#690099"/><stop offset="0.6301" stop-color="#990099"/><stop offset="0.7021" stop-color="#99007c"/><stop offset="0.7877" stop-color="#990063"/><stop offset="0.8870" stop-color="#99004e"/><stop offset="1.0000" stop-color="#99003c"/></linearGradient><linearGradient id="a140"><stop offset="0.0000" stop-color="#002399"/><stop offset="0.2270" stop-color="#001699"/><stop offset="0.3404" stop-color="#220e99"/><stop offset="0.4504" stop-color="#480599"/><stop offset="0.5142" stop-color="#600099"/><stop offset="0.6489" stop-color="#980099"/><stop offset="0.7234" stop-color="#99007c"/><stop offset="0.8014" stop-color="#990066"/><stop offset="0.8936" stop-color="#990052"/><stop offset="1.0000" stop-color="#990041"/></linearGradient><linearGradient id="a141"><stop offset="0.0000" stop-color="#002199"/><stop offset="0.2243" stop-color="#001499"/><stop offset="0.3456" stop-color="#230c99"/><stop offset="0.4596" stop-color="#480399"/><stop offset="0.5000" stop-color="#560099"/><stop offset="0.6654" stop-color="#980099"/><stop offset="0.7390" stop-color="#99007e"/><stop offset="0.8125" stop-color="#990069"/><stop offset="0.9007" stop-color="#990056"/><stop offset="1.0000" stop-color="#990046"/></linearGradient><linearGradient id="a142"><stop offset="0.0000" stop-color="#001f99"/><stop offset="0.2243" stop-color="#001299"/><stop offset="0.3498" stop-color="#230a99"/><stop offset="0.4677" stop-color="#470199"/><stop offset="0.5779" stop-color="#6e0099"/><stop offset="0.6844" stop-color="#980099"/><stop offset="0.7567" stop-color="#990080"/><stop offset="0.8251" stop-color="#99006c"/><stop offset="0.9087" stop-color="#99005a"/><stop offset="1.0000" stop-color="#99004b"/></linearGradient><linearGradient id="a143"><stop offset="0.0000" stop-color="#001d99"/><stop offset="0.2222" stop-color="#001099"/><stop offset="0.3532" stop-color="#230899"/><stop offset="0.4802" stop-color="#480099"/><stop offset="0.5952" stop-color="#6e0099"/><stop offset="0.7103" stop-color="#990099"/><stop offset="0.7698" stop-color="#990084"/><stop offset="0.8373" stop-color="#990071"/><stop offset="1.0000" stop-color="#990051"/></linearGradient><linearGradient id="a144"><stop offset="0.0000" stop-color="#001a99"/><stop offset="0.2222" stop-color="#000f99"/><stop offset="0.4527" stop-color="#3c0099"/><stop offset="0.4938" stop-color="#480099"/><stop offset="0.6173" stop-color="#700099"/><stop offset="0.7325" stop-color="#990099"/><stop offset="0.8519" stop-color="#990074"/><stop offset="1.0000" stop-color="#990056"/></linearGradient><linearGradient id="a145"><stop offset="0.0000" stop-color="#001899"/><stop offset="0.2198" stop-color="#000d99"/><stop offset="0.4353" stop-color="#350099"/><stop offset="0.5043" stop-color="#480099"/><stop offset="0.6336" stop-color="#6e0099"/><stop offset="0.7586" stop-color="#990099"/><stop offset="0.8707" stop-color="#990078"/><stop offset="1.0000" stop-color="#99005d"/></linearGradient><linearGradient id="a146"><stop offset="0.0000" stop-color="#001699"/><stop offset="0.2162" stop-color="#000b99"/><stop offset="0.4144" stop-color="#2e0099"/><stop offset="0.5180" stop-color="#480099"/><stop offset="0.6532" stop-color="#6f0099"/><stop offset="0.7838" stop-color="#980099"/><stop offset="0.8874" stop-color="#99007c"/><stop offset="1.0000" stop-color="#990064"/></linearGradient><linearGradient id="a147"><stop offset="0.0000" stop-color="#001499"/><stop offset="0.2160" stop-color="#010a99"/><stop offset="0.3944" stop-color="#270099"/><stop offset="0.5305" stop-color="#480099"/><stop offset="0.6761" stop-color="#6f0099"/><stop offset="0.8122" stop-color="#980099"/><stop offset="0.9061" stop-color="#990080"/><stop offset="1.0000" stop-color="#99006b"/></linearGradient><linearGradient id="a148"><stop offset="0.0000" stop-color="#001299"/><stop offset="0.2129" stop-color="#010899"/><stop offset="0.3713" stop-color="#200099"/><stop offset="0.5495" stop-color="#480099"/><stop offset="0.7030" stop-color="#6f0099"/><stop offset="0.8465" stop-color="#980099"/><stop offset="1.0000" stop-color="#990074"/></linearGradient><linearGradient id="a149"><stop offset="0.0000" stop-color="#000f99"/><stop offset="0.2083" stop-color="#010699"/><stop offset="0.3438" stop-color="#1a0099"/><stop offset="0.5677" stop-color="#490099"/><stop offset="0.7292" stop-color="#6f0099"/><stop offset="0.8854" stop-color="#990099"/><stop offset="1.0000" stop-color="#99007d"/></linearGradient><linearGradient id="a150"><stop offset="0.0000" stop-color="#000d99"/><stop offset="0.2088" stop-color="#010599"/><stop offset="0.3187" stop-color="#140099"/><stop offset="0.5879" stop-color="#480099"/><stop offset="0.7637" stop-color="#6f0099"/><stop offset="0.9286" stop-color="#990099"/><stop offset="1.0000" stop-color="#990088"/></linearGradient><linearGradient id="a151"><stop offset="0.0000" stop-color="#000b99"/><stop offset="0.2035" stop-color="#010399"/><stop offset="0.2849" stop-color="#0e0099"/><stop offset="0.5523" stop-color="#3d0099"/><stop offset="0.7674" stop-color="#690099"/><stop offset="0.9709" stop-color="#980099"/><stop offset="1.0000" stop-color="#990092"/></linearGradient><linearGradient id="a152"><stop offset="0.0000" stop-color="#000999"/><stop offset="0.1925" stop-color="#000299"/><stop offset="0.2236" stop-color="#050199"/><stop offset="0.6335" stop-color="#480099"/><stop offset="0.8199" stop-color="#6c0099"/><stop offset="1.0000" stop-color="#930099"/></linearGradient><linearGradient id="a153"><stop offset="0.0000" stop-color="#000799"/><stop offset="0.1987" stop-color="#020099"/><stop offset="0.6225" stop-color="#410099"/><stop offset="1.0000" stop-color="#870099"/></linearGradient><linearGradient id="a154"><stop offset="0.0000" stop-color="#000599"/><stop offset="0.1844" stop-color="#010099"/><stop offset="0.6099" stop-color="#3b0099"/><stop offset="1.0000" stop-color="#7d0099"/></linearGradient><linearGradient id="a155"><stop offset="0.0000" stop-color="#000299"/><stop offset="0.1705" stop-color="#010099"/><stop offset="0.6047" stop-color="#370099"/><stop offset="1.0000" stop-color="#710099"/></linearGradient><linearGradient id="a156"><stop offset="0.0000" stop-color="#000099"/><stop offset="0.1681" stop-color="#020099"/><stop offset="0.6050" stop-color="#330099"/><stop offset="1.0000" stop-color="#670099"/></linearGradient><linearGradient id="a157"><stop offset="0.0000" stop-color="#000099"/><stop offset="0.1574" stop-color="#020099"/><stop offset="0.5926" stop-color="#2e0099"/><stop offset="1.0000" stop-color="#5d0099"/></linearGradient><linearGradient id="a158"><stop offset="0.0000" stop-color="#000099"/><stop offset="0.1031" stop-color="#000099"/><stop offset="0.1856" stop-color="#060099"/><stop offset="0.6082" stop-color="#2c0099"/><stop offset="1.0000" stop-color="#540099"/></linearGradient><linearGradient id="a159"><stop offset="0.0000" stop-color="#000099"/><stop offset="0.0824" stop-color="#010099"/><stop offset="0.2471" stop-color="#0d0099"/><stop offset="1.0000" stop-color="#4b0099"/></linearGradient><linearGradient id="a160"><stop offset="0.0000" stop-color="#000099"/><stop offset="0.4384" stop-color="#1b0099"/><stop offset="1.0000" stop-color="#430099"/></linearGradient><linearGradient id="a161"><stop offset="0.0000" stop-color="#030099"/><stop offset="1.0000" stop-color="#3b0099"/></linearGradient><linearGradient id="a162"><stop offset="0.0000" stop-color="#070099"/><stop offset="1.0000" stop-color="#330099"/></linearGradient><linearGradient id="a163"><stop offset="0.0000" stop-color="#0c0099"/><stop offset="1.0000" stop-color="#2c0099"/></linearGradient><linearGradient id="a164"><stop offset="0.0000" stop-color="#110099"/><stop offset="1.0000" stop-color="#240099"/></linearGradient><linearGradient id="a165"><stop offset="0.0000" stop-color="#160099"/><stop offset="1.0000" stop-color="#1d0099"/></linearGradient><linearGradient id="b0"><stop offset="0.0000" stop-color="#00ff01"/><stop offset="0.5000" stop-color="#00ff00"/><stop offset="1.0000" stop-color="#05ff00"/></linearGradient><linearGradient id="b1"><stop offset="0.0000" stop-color="#00ff03"/><stop offset="0.3333" stop-color="#01ff01"/><stop offset="1.0000" stop-color="#0dff00"/></linearGradient><linearGradient id="b2"><stop offset="0.0000" stop-color="#00ff04"/><stop offset="0.2500" stop-color="#00ff03"/><stop offset="1.0000" stop-color="#12ff00"/></linearGradient><linearGradient id="b3"><stop offset="0.0000" stop-color="#00ff06"/><stop offset="0.2000" stop-color="#00ff04"/><stop offset="1.0000" stop-color="#18ff00"/></linearGradient><linearGradient id="b4"><stop offset="0.0000" stop-color="#00ff07"/><stop offset="0.1667" stop-color="#01ff06"/><stop offset="1.0000" stop-color="#20ff00"/></linearGradient><linearGradient id="b5"><stop offset="0.0000" stop-color="#00ff09"/><stop offset="0.1429" stop-color="#01ff08"/><stop offset="1.0000" stop-color="#26ff00"/></linearGradient><linearGradient id="b6"><stop offset="0.0000" stop-color="#00ff0b"/><stop offset="0.1250" stop-color="#00ff09"/><stop offset="1.0000" stop-color="#2dff00"/></linearGradient><linearGradient id="b7"><stop offset="0.0000" stop-color="#00ff0d"/><stop offset="0.1389" stop-color="#01ff0b"/><stop offset="1.0000" stop-color="#33ff00"/></linearGradient><linearGradient id="b8"><stop offset="0.0000" stop-color="#00ff0e"/><stop offset="0.1000" stop-color="#01ff0d"/><stop offset="1.0000" stop-color="#3cff00"/></linearGradient><linearGradient id="b9"><stop offset="0.0000" stop-color="#00ff10"/><stop offset="0.0909" stop-color="#00ff0e"/><stop offset="1.0000" stop-color="#43ff00"/></linearGradient><linearGradient id="b10"><stop offset="0.0000" stop-color="#00ff12"/><stop offset="0.1042" stop-color="#02ff10"/><stop offset="1.0000" stop-color="#4aff00"/></linearGradient><linearGradient id="b11"><stop offset="0.0000" stop-color="#00ff14"/><stop offset="0.0943" stop-color="#01ff12"/><stop offset="1.0000" stop-color="#53ff00"/></linearGradient><linearGradient id="b12"><stop offset="0.0000" stop-color="#00ff15"/><stop offset="0.0714" stop-color="#01ff14"/><stop offset="0.1964" stop-color="#0cff11"/><stop offset="1.0000" stop-color="#5bff00"/></linearGradient><linearGradient id="b13"><stop offset="0.0000" stop-color="#00ff17"/><stop offset="0.0667" stop-color="#00ff16"/><stop offset="0.2333" stop-color="#10ff12"/><stop offset="1.0000" stop-color="#63ff00"/></linearGradient><linearGradient id="b14"><stop offset="0.0000" stop-color="#00ff19"/><stop offset="0.0625" stop-color="#00ff18"/><stop offset="0.2500" stop-color="#13ff13"/><stop offset="1.0000" stop-color="#6bff00"/></linearGradient><linearGradient id="b15"><stop offset="0.0000" stop-color="#00ff1b"/><stop offset="0.0588" stop-color="#01ff19"/><stop offset="0.3235" stop-color="#1fff12"/><stop offset="1.0000" stop-color="#75ff00"/></linearGradient><linearGradient id="b16"><stop offset="0.0000" stop-color="#00ff1d"/><stop offset="0.0556" stop-color="#01ff1b"/><stop offset="0.3333" stop-color="#22ff13"/><stop offset="1.0000" stop-color="#7eff00"/></linearGradient><linearGradient id="b17"><stop offset="0.0000" stop-color="#00ff1f"/><stop offset="0.0526" stop-color="#00ff1d"/><stop offset="0.3553" stop-color="#27ff14"/><stop offset="1.0000" stop-color="#86ff00"/></linearGradient><linearGradient id="b18"><stop offset="0.0000" stop-color="#00ff21"/><stop offset="0.0617" stop-color="#01ff1f"/><stop offset="0.3704" stop-color="#2cff15"/><stop offset="1.0000" stop-color="#92ff00"/></linearGradient><linearGradient id="b19"><stop offset="0.0000" stop-color="#00ff23"/><stop offset="0.0476" stop-color="#01ff21"/><stop offset="0.4048" stop-color="#35ff15"/><stop offset="1.0000" stop-color="#9bff00"/></linearGradient><linearGradient id="b20"><stop offset="0.0000" stop-color="#00ff25"/><stop offset="0.0455" stop-color="#00ff23"/><stop offset="0.4091" stop-color="#39ff16"/><stop offset="0.7159" stop-color="#6eff0a"/><stop offset="1.0000" stop-color="#a5ff00"/></linearGradient><linearGradient id="b21"><stop offset="0.0000" stop-color="#00ff27"/><stop offset="0.0430" stop-color="#00ff26"/><stop offset="0.4194" stop-color="#3fff17"/><stop offset="0.7204" stop-color="#77ff0a"/><stop offset="1.0000" stop-color="#b2ff00"/></linearGradient><linearGradient id="b22"><stop offset="0.0000" stop-color="#00ff29"/><stop offset="0.0515" stop-color="#01ff27"/><stop offset="0.4227" stop-color="#42ff19"/><stop offset="0.7216" stop-color="#7eff0b"/><stop offset="1.0000" stop-color="#bcff00"/></linearGradient><linearGradient id="b23"><stop offset="0.0000" stop-color="#00ff2b"/><stop offset="0.0400" stop-color="#01ff2a"/><stop offset="0.4500" stop-color="#4cff19"/><stop offset="0.7300" stop-color="#87ff0b"/><stop offset="1.0000" stop-color="#c7ff00"/></linearGradient><linearGradient id="b24"><stop offset="0.0000" stop-color="#00ff2d"/><stop offset="0.0385" stop-color="#00ff2c"/><stop offset="0.4519" stop-color="#50ff1a"/><stop offset="0.7308" stop-color="#8fff0c"/><stop offset="1.0000" stop-color="#d2ff00"/></linearGradient><linearGradient id="b25"><stop offset="0.0000" stop-color="#00ff30"/><stop offset="0.0459" stop-color="#02ff2e"/><stop offset="0.4587" stop-color="#57ff1b"/><stop offset="0.7339" stop-color="#98ff0d"/><stop offset="1.0000" stop-color="#e1ff00"/></linearGradient><linearGradient id="b26"><stop offset="0.0000" stop-color="#00ff32"/><stop offset="0.0357" stop-color="#01ff30"/><stop offset="0.0982" stop-color="#0dff2d"/><stop offset="0.4732" stop-color="#5fff1c"/><stop offset="0.7411" stop-color="#a3ff0d"/><stop offset="1.0000" stop-color="#edff00"/></linearGradient><linearGradient id="b27"><stop offset="0.0000" stop-color="#00ff34"/><stop offset="0.0345" stop-color="#01ff32"/><stop offset="0.1034" stop-color="#0fff2f"/><stop offset="0.4741" stop-color="#64ff1d"/><stop offset="0.7500" stop-color="#adff0d"/><stop offset="1.0000" stop-color="#f9ff00"/></linearGradient><linearGradient id="b28"><stop offset="0.0000" stop-color="#00ff36"/><stop offset="0.0413" stop-color="#02ff34"/><stop offset="0.4050" stop-color="#57ff22"/><stop offset="0.6942" stop-color="#a7ff12"/><stop offset="0.9669" stop-color="#feff00"/><stop offset="1.0000" stop-color="#fff500"/></linearGradient><linearGradient id="b29"><stop offset="0.0000" stop-color="#00ff39"/><stop offset="0.0320" stop-color="#00ff37"/><stop offset="0.0800" stop-color="#0aff35"/><stop offset="0.4400" stop-color="#64ff22"/><stop offset="0.6960" stop-color="#afff13"/><stop offset="0.9280" stop-color="#fcff02"/><stop offset="1.0000" stop-color="#ffe900"/></linearGradient><linearGradient id="b30"><stop offset="0.0000" stop-color="#00ff3b"/><stop offset="0.0312" stop-color="#01ff39"/><stop offset="0.1016" stop-color="#11ff36"/><stop offset="0.4297" stop-color="#67ff24"/><stop offset="0.6719" stop-color="#b0ff15"/><stop offset="0.8984" stop-color="#feff05"/><stop offset="1.0000" stop-color="#ffde00"/></linearGradient><linearGradient id="b31"><stop offset="0.0000" stop-color="#00ff3d"/><stop offset="0.0303" stop-color="#00ff3c"/><stop offset="0.0833" stop-color="#0dff39"/><stop offset="0.4091" stop-color="#65ff27"/><stop offset="0.6439" stop-color="#aeff18"/><stop offset="0.8636" stop-color="#fdff08"/><stop offset="1.0000" stop-color="#ffd300"/></linearGradient><linearGradient id="b32"><stop offset="0.0000" stop-color="#00ff40"/><stop offset="0.0292" stop-color="#00ff3e"/><stop offset="0.0730" stop-color="#0bff3c"/><stop offset="0.3942" stop-color="#65ff2a"/><stop offset="0.6204" stop-color="#afff1b"/><stop offset="0.8321" stop-color="#ffff0b"/><stop offset="0.9562" stop-color="#ffd400"/><stop offset="1.0000" stop-color="#ffc700"/></linearGradient><linearGradient id="b33"><stop offset="0.0000" stop-color="#00ff42"/><stop offset="0.0284" stop-color="#00ff41"/><stop offset="0.0567" stop-color="#07ff3f"/><stop offset="0.3759" stop-color="#63ff2d"/><stop offset="0.5957" stop-color="#adff1e"/><stop offset="0.8014" stop-color="#fdff0e"/><stop offset="0.9078" stop-color="#ffd904"/><stop offset="1.0000" stop-color="#ffbe00"/></linearGradient><linearGradient id="b34"><stop offset="0.0000" stop-color="#00ff45"/><stop offset="0.0278" stop-color="#01ff43"/><stop offset="0.0833" stop-color="#10ff40"/><stop offset="0.3750" stop-color="#68ff2f"/><stop offset="0.5833" stop-color="#b1ff21"/><stop offset="0.7778" stop-color="#ffff11"/><stop offset="0.8819" stop-color="#ffd807"/><stop offset="1.0000" stop-color="#ffb500"/></linearGradient><linearGradient id="b35"><stop offset="0.0000" stop-color="#00ff47"/><stop offset="0.0268" stop-color="#00ff46"/><stop offset="0.0738" stop-color="#0eff43"/><stop offset="0.3557" stop-color="#66ff32"/><stop offset="0.5570" stop-color="#afff24"/><stop offset="0.7450" stop-color="#feff15"/><stop offset="0.8658" stop-color="#ffd108"/><stop offset="1.0000" stop-color="#ffab00"/></linearGradient><linearGradient id="b36"><stop offset="0.0000" stop-color="#00ff4a"/><stop offset="0.0261" stop-color="#00ff48"/><stop offset="0.0523" stop-color="#07ff47"/><stop offset="0.3399" stop-color="#64ff35"/><stop offset="0.5359" stop-color="#adff27"/><stop offset="0.7255" stop-color="#fffe18"/><stop offset="0.8497" stop-color="#ffce0a"/><stop offset="1.0000" stop-color="#ffa300"/></linearGradient><linearGradient id="b37"><stop offset="0.0000" stop-color="#00ff4c"/><stop offset="0.0256" stop-color="#01ff4b"/><stop offset="0.0769" stop-color="#11ff48"/><stop offset="0.3333" stop-color="#66ff38"/><stop offset="0.5192" stop-color="#aeff2a"/><stop offset="0.6987" stop-color="#feff1b"/><stop offset="0.8397" stop-color="#ffc80b"/><stop offset="1.0000" stop-color="#ff9c00"/></linearGradient><linearGradient id="b38"><stop offset="0.0000" stop-color="#00ff4f"/><stop offset="0.0250" stop-color="#01ff4e"/><stop offset="0.0625" stop-color="#0cff4b"/><stop offset="0.3187" stop-color="#64ff3b"/><stop offset="0.5000" stop-color="#adff2e"/><stop offset="0.6813" stop-color="#fffe1e"/><stop offset="0.7500" stop-color="#ffdf15"/><stop offset="0.8250" stop-color="#ffc40c"/><stop offset="1.0000" stop-color="#ff9500"/></linearGradient><linearGradient id="b39"><stop offset="0.0000" stop-color="#00ff52"/><stop offset="0.0242" stop-color="#00ff50"/><stop offset="0.0545" stop-color="#0aff4f"/><stop offset="0.3091" stop-color="#64ff3e"/><stop offset="0.4848" stop-color="#aeff31"/><stop offset="0.6545" stop-color="#ffff22"/><stop offset="0.7333" stop-color="#ffdb17"/><stop offset="0.8121" stop-color="#ffbe0d"/><stop offset="0.9030" stop-color="#ffa405"/><stop offset="1.0000" stop-color="#ff8d00"/></linearGradient><linearGradient id="b40"><stop offset="0.0000" stop-color="#00ff55"/><stop offset="0.0355" stop-color="#03ff53"/><stop offset="0.2899" stop-color="#60ff42"/><stop offset="0.4615" stop-color="#a9ff35"/><stop offset="0.6391" stop-color="#fffd25"/><stop offset="0.7160" stop-color="#ffda19"/><stop offset="0.7988" stop-color="#ffbb0f"/><stop offset="0.8935" stop-color="#ff9f06"/><stop offset="1.0000" stop-color="#ff8600"/></linearGradient><linearGradient id="b41"><stop offset="0.0000" stop-color="#00ff57"/><stop offset="0.0233" stop-color="#01ff56"/><stop offset="0.0581" stop-color="#0dff54"/><stop offset="0.2907" stop-color="#65ff44"/><stop offset="0.4593" stop-color="#b0ff37"/><stop offset="0.6163" stop-color="#ffff29"/><stop offset="0.6977" stop-color="#ffd81c"/><stop offset="0.7849" stop-color="#ffb711"/><stop offset="0.8837" stop-color="#ff9a07"/><stop offset="1.0000" stop-color="#ff8000"/></linearGradient><linearGradient id="b42"><stop offset="0.0000" stop-color="#00ff5a"/><stop offset="0.0226" stop-color="#00ff59"/><stop offset="0.0508" stop-color="#0aff57"/><stop offset="0.2825" stop-color="#65ff47"/><stop offset="0.4407" stop-color="#aeff3b"/><stop offset="0.5932" stop-color="#feff2d"/><stop offset="0.6836" stop-color="#ffd41d"/><stop offset="0.7740" stop-color="#ffb212"/><stop offset="0.8814" stop-color="#ff9307"/><stop offset="1.0000" stop-color="#ff7900"/></linearGradient><linearGradient id="b43"><stop offset="0.0000" stop-color="#00ff5d"/><stop offset="0.0221" stop-color="#00ff5c"/><stop offset="0.0387" stop-color="#06ff5b"/><stop offset="0.2707" stop-color="#63ff4b"/><stop offset="0.4254" stop-color="#acff3e"/><stop offset="0.5801" stop-color="#fffe30"/><stop offset="0.6630" stop-color="#ffd421"/><stop offset="0.7624" stop-color="#ffaf13"/><stop offset="0.8729" stop-color="#ff8f08"/><stop offset="1.0000" stop-color="#ff7300"/></linearGradient><linearGradient id="b44"><stop offset="0.0000" stop-color="#00ff60"/><stop offset="0.0270" stop-color="#01ff5e"/><stop offset="0.2595" stop-color="#61ff4e"/><stop offset="0.4162" stop-color="#adff42"/><stop offset="0.5622" stop-color="#feff34"/><stop offset="0.6541" stop-color="#ffd023"/><stop offset="0.7514" stop-color="#ffab15"/><stop offset="0.8649" stop-color="#ff8b09"/><stop offset="1.0000" stop-color="#ff6e00"/></linearGradient><linearGradient id="b45"><stop offset="0.0000" stop-color="#00ff63"/><stop offset="0.0212" stop-color="#01ff62"/><stop offset="0.0476" stop-color="#0bff60"/><stop offset="0.2540" stop-color="#64ff51"/><stop offset="0.3968" stop-color="#abff46"/><stop offset="0.5450" stop-color="#fffe37"/><stop offset="0.6349" stop-color="#ffcf25"/><stop offset="0.7354" stop-color="#ffa816"/><stop offset="0.8571" stop-color="#ff8609"/><stop offset="1.0000" stop-color="#ff6800"/></linearGradient><linearGradient id="b46"><stop offset="0.0000" stop-color="#00ff66"/><stop offset="0.0207" stop-color="#00ff65"/><stop offset="0.0415" stop-color="#08ff63"/><stop offset="0.2487" stop-color="#64ff55"/><stop offset="0.3938" stop-color="#afff49"/><stop offset="0.5285" stop-color="#ffff3c"/><stop offset="0.6166" stop-color="#ffcf29"/><stop offset="0.7254" stop-color="#ffa518"/><stop offset="0.8497" stop-color="#ff820a"/><stop offset="1.0000" stop-color="#ff6300"/></linearGradient><linearGradient id="b47"><stop offset="0.0000" stop-color="#00ff69"/><stop offset="0.0254" stop-color="#02ff68"/><stop offset="0.2335" stop-color="#5fff59"/><stop offset="0.3706" stop-color="#a7ff4d"/><stop offset="0.5178" stop-color="#fffd3f"/><stop offset="0.6091" stop-color="#ffcb2a"/><stop offset="0.7208" stop-color="#ffa019"/><stop offset="0.8477" stop-color="#ff7d0a"/><stop offset="1.0000" stop-color="#ff5e00"/></linearGradient><linearGradient id="b48"><stop offset="0.0000" stop-color="#00ff6c"/><stop offset="0.0200" stop-color="#01ff6b"/><stop offset="0.0450" stop-color="#0cff69"/><stop offset="0.2350" stop-color="#64ff5b"/><stop offset="0.3700" stop-color="#aeff50"/><stop offset="0.5000" stop-color="#fffe43"/><stop offset="0.5950" stop-color="#ffc92d"/><stop offset="0.7050" stop-color="#ff9e1b"/><stop offset="0.8400" stop-color="#ff790b"/><stop offset="1.0000" stop-color="#ff5a00"/></linearGradient><linearGradient id="b49"><stop offset="0.0000" stop-color="#00ff6f"/><stop offset="0.0195" stop-color="#01ff6e"/><stop offset="0.0390" stop-color="#09ff6d"/><stop offset="0.2293" stop-color="#65ff5f"/><stop offset="0.3610" stop-color="#afff54"/><stop offset="0.4829" stop-color="#feff48"/><stop offset="0.5805" stop-color="#ffc830"/><stop offset="0.6976" stop-color="#ff991c"/><stop offset="0.8341" stop-color="#ff740c"/><stop offset="1.0000" stop-color="#ff5500"/></linearGradient><linearGradient id="b50"><stop offset="0.0000" stop-color="#00ff73"/><stop offset="0.0239" stop-color="#02ff71"/><stop offset="0.2153" stop-color="#60ff63"/><stop offset="0.3445" stop-color="#aaff58"/><stop offset="0.4737" stop-color="#fffe4b"/><stop offset="0.5215" stop-color="#ffdf3e"/><stop offset="0.5694" stop-color="#ffc632"/><stop offset="0.6890" stop-color="#ff961d"/><stop offset="0.8278" stop-color="#ff710c"/><stop offset="1.0000" stop-color="#ff5100"/></linearGradient><linearGradient id="b51"><stop offset="0.0000" stop-color="#00ff76"/><stop offset="0.0235" stop-color="#02ff75"/><stop offset="0.2113" stop-color="#60ff67"/><stop offset="0.3380" stop-color="#abff5c"/><stop offset="0.4601" stop-color="#ffff50"/><stop offset="0.5070" stop-color="#ffe042"/><stop offset="0.5587" stop-color="#ffc435"/><stop offset="0.6761" stop-color="#ff951f"/><stop offset="0.8216" stop-color="#ff6d0d"/><stop offset="1.0000" stop-color="#ff4d00"/></linearGradient><linearGradient id="b52"><stop offset="0.0000" stop-color="#00ff79"/><stop offset="0.0184" stop-color="#01ff78"/><stop offset="0.0323" stop-color="#08ff77"/><stop offset="0.2074" stop-color="#63ff6a"/><stop offset="0.3226" stop-color="#a9ff60"/><stop offset="0.4470" stop-color="#fffd54"/><stop offset="0.4931" stop-color="#ffde45"/><stop offset="0.5484" stop-color="#ffc037"/><stop offset="0.6682" stop-color="#ff9020"/><stop offset="0.8157" stop-color="#ff690e"/><stop offset="1.0000" stop-color="#ff4800"/></linearGradient><linearGradient id="b53"><stop offset="0.0000" stop-color="#00ff7d"/><stop offset="0.0181" stop-color="#00ff7c"/><stop offset="0.0271" stop-color="#05ff7b"/><stop offset="0.2036" stop-color="#63ff6e"/><stop offset="0.3213" stop-color="#adff64"/><stop offset="0.4344" stop-color="#ffff59"/><stop offset="0.4796" stop-color="#ffdf49"/><stop offset="0.5339" stop-color="#ffc03a"/><stop offset="0.5928" stop-color="#ffa62e"/><stop offset="0.6561" stop-color="#ff8e22"/><stop offset="0.8100" stop-color="#ff650e"/><stop offset="1.0000" stop-color="#ff4500"/></linearGradient><linearGradient id="b54"><stop offset="0.0000" stop-color="#00ff80"/><stop offset="0.0222" stop-color="#02ff7f"/><stop offset="0.1911" stop-color="#5eff73"/><stop offset="0.3022" stop-color="#a5ff69"/><stop offset="0.4267" stop-color="#fffd5c"/><stop offset="0.4756" stop-color="#ffda4b"/><stop offset="0.5289" stop-color="#ffbc3c"/><stop offset="0.5867" stop-color="#ffa22f"/><stop offset="0.6533" stop-color="#ff8a23"/><stop offset="0.8089" stop-color="#ff610f"/><stop offset="1.0000" stop-color="#ff4100"/></linearGradient><linearGradient id="b55"><stop offset="0.0000" stop-color="#00ff84"/><stop offset="0.0218" stop-color="#01ff83"/><stop offset="0.1878" stop-color="#5eff77"/><stop offset="0.3013" stop-color="#a9ff6d"/><stop offset="0.4148" stop-color="#fffe61"/><stop offset="0.4629" stop-color="#ffdb4f"/><stop offset="0.5153" stop-color="#ffbd40"/><stop offset="0.5764" stop-color="#ffa131"/><stop offset="0.6419" stop-color="#ff8825"/><stop offset="0.7991" stop-color="#ff5f10"/><stop offset="1.0000" stop-color="#ff3d00"/></linearGradient><linearGradient id="b56"><stop offset="0.0000" stop-color="#00ff87"/><stop offset="0.0172" stop-color="#01ff86"/><stop offset="0.0258" stop-color="#05ff86"/><stop offset="0.1845" stop-color="#61ff7a"/><stop offset="0.2961" stop-color="#adff71"/><stop offset="0.3991" stop-color="#feff67"/><stop offset="0.4506" stop-color="#ffd953"/><stop offset="0.5021" stop-color="#ffbb43"/><stop offset="0.5622" stop-color="#ff9f34"/><stop offset="0.6309" stop-color="#ff8526"/><stop offset="0.7940" stop-color="#ff5b10"/><stop offset="1.0000" stop-color="#ff3a00"/></linearGradient><linearGradient id="b57"><stop offset="0.0000" stop-color="#00ff8b"/><stop offset="0.0169" stop-color="#00ff8a"/><stop offset="0.1772" stop-color="#5fff7f"/><stop offset="0.2827" stop-color="#a8ff76"/><stop offset="0.3924" stop-color="#fffe6a"/><stop offset="0.4388" stop-color="#ffda57"/><stop offset="0.4937" stop-color="#ffb945"/><stop offset="0.5570" stop-color="#ff9b35"/><stop offset="0.6245" stop-color="#ff8328"/><stop offset="0.7004" stop-color="#ff6c1c"/><stop offset="0.7890" stop-color="#ff5811"/><stop offset="1.0000" stop-color="#ff3600"/></linearGradient><linearGradient id="b58"><stop offset="0.0000" stop-color="#00ff8f"/><stop offset="0.0207" stop-color="#02ff8e"/><stop offset="0.1743" stop-color="#5fff83"/><stop offset="0.2822" stop-color="#acff7a"/><stop offset="0.3817" stop-color="#ffff70"/><stop offset="0.4315" stop-color="#ffd85a"/><stop offset="0.4855" stop-color="#ffb748"/><stop offset="0.5477" stop-color="#ff9a38"/><stop offset="0.6141" stop-color="#ff812a"/><stop offset="0.6929" stop-color="#ff6a1d"/><stop offset="0.7842" stop-color="#ff5511"/><stop offset="1.0000" stop-color="#ff3300"/></linearGradient><linearGradient id="b59"><stop offset="0.0000" stop-color="#00ff93"/><stop offset="0.0204" stop-color="#04ff91"/><stop offset="0.1673" stop-color="#5fff87"/><stop offset="0.2653" stop-color="#a7ff7f"/><stop offset="0.3714" stop-color="#fffd74"/><stop offset="0.4204" stop-color="#ffd65e"/><stop offset="0.4735" stop-color="#ffb54b"/><stop offset="0.5347" stop-color="#ff983a"/><stop offset="0.6082" stop-color="#ff7d2a"/><stop offset="0.6898" stop-color="#ff651d"/><stop offset="0.7796" stop-color="#ff5112"/><stop offset="1.0000" stop-color="#ff3000"/></linearGradient><linearGradient id="b60"><stop offset="0.0000" stop-color="#00ff97"/><stop offset="0.0161" stop-color="#01ff96"/><stop offset="0.1647" stop-color="#60ff8b"/><stop offset="0.2651" stop-color="#abff83"/><stop offset="0.3614" stop-color="#ffff7a"/><stop offset="0.4096" stop-color="#ffd763"/><stop offset="0.4659" stop-color="#ffb44e"/><stop offset="0.5261" stop-color="#ff963d"/><stop offset="0.5984" stop-color="#ff7b2d"/><stop offset="0.6787" stop-color="#ff641f"/><stop offset="0.7711" stop-color="#ff4f13"/><stop offset="1.0000" stop-color="#ff2d00"/></linearGradient><linearGradient id="b61"><stop offset="0.0000" stop-color="#00ff9b"/><stop offset="0.0158" stop-color="#00ff9a"/><stop offset="0.1581" stop-color="#5dff90"/><stop offset="0.2490" stop-color="#a3ff89"/><stop offset="0.3518" stop-color="#feff7f"/><stop offset="0.3557" stop-color="#fffc7e"/><stop offset="0.4032" stop-color="#ffd566"/><stop offset="0.4585" stop-color="#ffb251"/><stop offset="0.5217" stop-color="#ff933e"/><stop offset="0.5929" stop-color="#ff782e"/><stop offset="0.6759" stop-color="#ff6120"/><stop offset="0.7708" stop-color="#ff4c13"/><stop offset="1.0000" stop-color="#ff2a00"/></linearGradient><linearGradient id="b62"><stop offset="0.0000" stop-color="#00ff9f"/><stop offset="0.0195" stop-color="#02ff9e"/><stop offset="0.1556" stop-color="#5dff95"/><stop offset="0.2490" stop-color="#a7ff8d"/><stop offset="0.3463" stop-color="#fffe84"/><stop offset="0.3969" stop-color="#ffd369"/><stop offset="0.4514" stop-color="#ffb053"/><stop offset="0.5136" stop-color="#ff9140"/><stop offset="0.5875" stop-color="#ff762f"/><stop offset="0.6693" stop-color="#ff5e21"/><stop offset="0.7665" stop-color="#ff4914"/><stop offset="1.0000" stop-color="#ff2700"/></linearGradient><linearGradient id="b63"><stop offset="0.0000" stop-color="#00ffa3"/><stop offset="0.0153" stop-color="#01ffa2"/><stop offset="0.1533" stop-color="#61ff99"/><stop offset="0.2452" stop-color="#acff92"/><stop offset="0.3333" stop-color="#feff8a"/><stop offset="0.3831" stop-color="#ffd46e"/><stop offset="0.4368" stop-color="#ffb058"/><stop offset="0.5019" stop-color="#ff9043"/><stop offset="0.5747" stop-color="#ff7431"/><stop offset="0.6590" stop-color="#ff5c22"/><stop offset="0.7586" stop-color="#ff4614"/><stop offset="1.0000" stop-color="#ff2400"/></linearGradient><linearGradient id="b64"><stop offset="0.0000" stop-color="#00ffa7"/><stop offset="0.0151" stop-color="#00ffa6"/><stop offset="0.1472" stop-color="#5eff9e"/><stop offset="0.2340" stop-color="#a6ff97"/><stop offset="0.3283" stop-color="#fffd8e"/><stop offset="0.3774" stop-color="#ffd272"/><stop offset="0.4302" stop-color="#ffae5a"/><stop offset="0.4943" stop-color="#ff8e45"/><stop offset="0.5698" stop-color="#ff7133"/><stop offset="0.6566" stop-color="#ff5922"/><stop offset="0.7547" stop-color="#ff4415"/><stop offset="1.0000" stop-color="#ff2200"/></linearGradient><linearGradient id="b65"><stop offset="0.0000" stop-color="#00ffac"/><stop offset="0.0186" stop-color="#02ffab"/><stop offset="0.1450" stop-color="#5effa3"/><stop offset="0.2342" stop-color="#abff9c"/><stop offset="0.3197" stop-color="#ffff95"/><stop offset="0.3680" stop-color="#ffd377"/><stop offset="0.4238" stop-color="#ffac5d"/><stop offset="0.4870" stop-color="#ff8c48"/><stop offset="0.5613" stop-color="#ff7035"/><stop offset="0.6468" stop-color="#ff5724"/><stop offset="0.7472" stop-color="#ff4216"/><stop offset="0.8625" stop-color="#ff2f0a"/><stop offset="1.0000" stop-color="#ff1f00"/></linearGradient><linearGradient id="b66"><stop offset="0.0000" stop-color="#00ffb0"/><stop offset="0.0182" stop-color="#02ffaf"/><stop offset="0.1350" stop-color="#58ffa8"/><stop offset="0.2190" stop-color="#a1ffa2"/><stop offset="0.3139" stop-color="#fffd99"/><stop offset="0.3613" stop-color="#ffd07a"/><stop offset="0.4197" stop-color="#ffa85f"/><stop offset="0.4854" stop-color="#ff8748"/><stop offset="0.5584" stop-color="#ff6c35"/><stop offset="0.6460" stop-color="#ff5324"/><stop offset="0.7482" stop-color="#ff3e16"/><stop offset="1.0000" stop-color="#ff1c00"/></linearGradient><linearGradient id="b67"><stop offset="0.0000" stop-color="#00ffb5"/><stop offset="0.0144" stop-color="#01ffb4"/><stop offset="0.1372" stop-color="#5fffad"/><stop offset="0.2202" stop-color="#a9ffa7"/><stop offset="0.3032" stop-color="#fffea0"/><stop offset="0.3502" stop-color="#ffd180"/><stop offset="0.4079" stop-color="#ffa963"/><stop offset="0.4729" stop-color="#ff874c"/><stop offset="0.5487" stop-color="#ff6a37"/><stop offset="0.6354" stop-color="#ff5226"/><stop offset="0.7401" stop-color="#ff3c17"/><stop offset="0.8592" stop-color="#ff2a0a"/><stop offset="1.0000" stop-color="#ff1a00"/></linearGradient><linearGradient id="b68"><stop offset="0.0000" stop-color="#00ffb9"/><stop offset="0.0142" stop-color="#00ffb8"/><stop offset="0.1281" stop-color="#59ffb2"/><stop offset="0.2064" stop-color="#a0ffad"/><stop offset="0.2954" stop-color="#feffa6"/><stop offset="0.2989" stop-color="#fffca4"/><stop offset="0.3452" stop-color="#ffcf83"/><stop offset="0.4021" stop-color="#ffa766"/><stop offset="0.4662" stop-color="#ff854e"/><stop offset="0.5445" stop-color="#ff6738"/><stop offset="0.6335" stop-color="#ff4f26"/><stop offset="0.7367" stop-color="#ff3a17"/><stop offset="0.8577" stop-color="#ff270a"/><stop offset="1.0000" stop-color="#ff1800"/></linearGradient><linearGradient id="b69"><stop offset="0.0000" stop-color="#00ffbe"/><stop offset="0.0175" stop-color="#02ffbd"/><stop offset="0.1259" stop-color="#59ffb7"/><stop offset="0.2063" stop-color="#a5ffb2"/><stop offset="0.2902" stop-color="#fffeab"/><stop offset="0.3357" stop-color="#ffd089"/><stop offset="0.3916" stop-color="#ffa76b"/><stop offset="0.4580" stop-color="#ff8350"/><stop offset="0.5350" stop-color="#ff663a"/><stop offset="0.6259" stop-color="#ff4c28"/><stop offset="0.7308" stop-color="#ff3718"/><stop offset="0.8531" stop-color="#ff250a"/><stop offset="1.0000" stop-color="#ff1500"/></linearGradient><linearGradient id="b70"><stop offset="0.0000" stop-color="#00ffc3"/><stop offset="0.0138" stop-color="#01ffc2"/><stop offset="0.1280" stop-color="#60ffbc"/><stop offset="0.2076" stop-color="#adffb7"/><stop offset="0.2803" stop-color="#ffffb2"/><stop offset="0.3287" stop-color="#ffce8d"/><stop offset="0.3841" stop-color="#ffa56e"/><stop offset="0.4498" stop-color="#ff8253"/><stop offset="0.5260" stop-color="#ff643d"/><stop offset="0.6159" stop-color="#ff4b29"/><stop offset="0.7232" stop-color="#ff3519"/><stop offset="0.8512" stop-color="#ff230b"/><stop offset="1.0000" stop-color="#ff1300"/></linearGradient><linearGradient id="b71"><stop offset="0.0000" stop-color="#00ffc8"/><stop offset="0.0137" stop-color="#01ffc7"/><stop offset="0.1229" stop-color="#5dffc2"/><stop offset="0.1945" stop-color="#a3ffbe"/><stop offset="0.2765" stop-color="#fffdb7"/><stop offset="0.3242" stop-color="#ffcb90"/><stop offset="0.3788" stop-color="#ffa371"/><stop offset="0.4437" stop-color="#ff8055"/><stop offset="0.5222" stop-color="#ff623e"/><stop offset="0.6143" stop-color="#ff482a"/><stop offset="0.7235" stop-color="#ff3219"/><stop offset="0.8498" stop-color="#ff200b"/><stop offset="1.0000" stop-color="#ff1100"/></linearGradient><linearGradient id="b72"><stop offset="0.0000" stop-color="#00ffcd"/><stop offset="0.0135" stop-color="#00ffcc"/><stop offset="0.1212" stop-color="#5dffc7"/><stop offset="0.1953" stop-color="#a8ffc4"/><stop offset="0.2694" stop-color="#ffffbf"/><stop offset="0.3165" stop-color="#ffcc96"/><stop offset="0.3704" stop-color="#ffa375"/><stop offset="0.4377" stop-color="#ff7e58"/><stop offset="0.5152" stop-color="#ff6040"/><stop offset="0.6061" stop-color="#ff472c"/><stop offset="0.7172" stop-color="#ff311a"/><stop offset="0.8451" stop-color="#ff1f0b"/><stop offset="1.0000" stop-color="#ff0f00"/></linearGradient><linearGradient id="b73"><stop offset="0.0000" stop-color="#00ffd2"/><stop offset="0.0166" stop-color="#02ffd1"/><stop offset="0.1126" stop-color="#57ffcd"/><stop offset="0.1821" stop-color="#9effca"/><stop offset="0.2616" stop-color="#feffc6"/><stop offset="0.2649" stop-color="#fffcc3"/><stop offset="0.3113" stop-color="#ffca9a"/><stop offset="0.3675" stop-color="#ff9f77"/><stop offset="0.4338" stop-color="#ff7b59"/><stop offset="0.5099" stop-color="#ff5d41"/><stop offset="0.6026" stop-color="#ff442c"/><stop offset="0.7119" stop-color="#ff2e1a"/><stop offset="0.8642" stop-color="#ff1a09"/><stop offset="1.0000" stop-color="#ff0d00"/></linearGradient><linearGradient id="b74"><stop offset="0.0000" stop-color="#00ffd7"/><stop offset="0.0131" stop-color="#01ffd7"/><stop offset="0.1148" stop-color="#5effd3"/><stop offset="0.1836" stop-color="#a7ffd0"/><stop offset="0.2557" stop-color="#fffecc"/><stop offset="0.3016" stop-color="#ffcba0"/><stop offset="0.3574" stop-color="#ff9f7c"/><stop offset="0.4230" stop-color="#ff7b5d"/><stop offset="0.5016" stop-color="#ff5c43"/><stop offset="0.5967" stop-color="#ff422d"/><stop offset="0.7082" stop-color="#ff2c1b"/><stop offset="0.8590" stop-color="#ff180a"/><stop offset="1.0000" stop-color="#ff0b00"/></linearGradient><linearGradient id="b75"><stop offset="0.0000" stop-color="#00ffdd"/><stop offset="0.0129" stop-color="#00ffdc"/><stop offset="0.1133" stop-color="#5effd9"/><stop offset="0.1845" stop-color="#acffd6"/><stop offset="0.2492" stop-color="#feffd3"/><stop offset="0.2977" stop-color="#ffc8a4"/><stop offset="0.3528" stop-color="#ff9d7f"/><stop offset="0.4175" stop-color="#ff7960"/><stop offset="0.4951" stop-color="#ff5a45"/><stop offset="0.5890" stop-color="#ff402f"/><stop offset="0.7023" stop-color="#ff2b1c"/><stop offset="0.8544" stop-color="#ff160b"/><stop offset="1.0000" stop-color="#ff0900"/></linearGradient><linearGradient id="b76"><stop offset="0.0000" stop-color="#00ffe2"/><stop offset="0.0159" stop-color="#02ffe2"/><stop offset="0.1051" stop-color="#57ffdf"/><stop offset="0.1720" stop-color="#a2ffdd"/><stop offset="0.2452" stop-color="#fffdd9"/><stop offset="0.2675" stop-color="#ffe1c0"/><stop offset="0.2930" stop-color="#ffc6a8"/><stop offset="0.3471" stop-color="#ff9b82"/><stop offset="0.4108" stop-color="#ff7762"/><stop offset="0.4904" stop-color="#ff5846"/><stop offset="0.5860" stop-color="#ff3e2f"/><stop offset="0.7006" stop-color="#ff281c"/><stop offset="0.8535" stop-color="#ff140a"/><stop offset="1.0000" stop-color="#ff0700"/></linearGradient><linearGradient id="b77"><stop offset="0.0000" stop-color="#00ffe8"/><stop offset="0.0126" stop-color="#02ffe7"/><stop offset="0.1073" stop-color="#5effe5"/><stop offset="0.1735" stop-color="#abffe4"/><stop offset="0.2366" stop-color="#ffffe2"/><stop offset="0.2587" stop-color="#ffe2c8"/><stop offset="0.2839" stop-color="#ffc7af"/><stop offset="0.3375" stop-color="#ff9b87"/><stop offset="0.4038" stop-color="#ff7565"/><stop offset="0.4826" stop-color="#ff5648"/><stop offset="0.5773" stop-color="#ff3c31"/><stop offset="0.6940" stop-color="#ff261d"/><stop offset="0.8486" stop-color="#ff120b"/><stop offset="1.0000" stop-color="#ff0500"/></linearGradient><linearGradient id="b78"><stop offset="0.0000" stop-color="#00ffed"/><stop offset="0.0125" stop-color="#01ffed"/><stop offset="0.0997" stop-color="#58ffec"/><stop offset="0.1620" stop-color="#a0ffeb"/><stop offset="0.2305" stop-color="#fdffe9"/><stop offset="0.2336" stop-color="#fffce7"/><stop offset="0.2555" stop-color="#ffe0cc"/><stop offset="0.2804" stop-color="#ffc5b3"/><stop offset="0.3333" stop-color="#ff998a"/><stop offset="0.3988" stop-color="#ff7367"/><stop offset="0.4798" stop-color="#ff544a"/><stop offset="0.5763" stop-color="#ff3931"/><stop offset="0.6916" stop-color="#ff241d"/><stop offset="0.8474" stop-color="#ff110b"/><stop offset="1.0000" stop-color="#ff0300"/></linearGradient><linearGradient id="b79"><stop offset="0.0000" stop-color="#00fff3"/><stop offset="0.0123" stop-color="#00fff3"/><stop offset="0.1015" stop-color="#5cfff2"/><stop offset="0.1662" stop-color="#aafff2"/><stop offset="0.2277" stop-color="#fffef0"/><stop offset="0.2492" stop-color="#ffe1d4"/><stop offset="0.2738" stop-color="#ffc5ba"/><stop offset="0.3262" stop-color="#ff998f"/><stop offset="0.3938" stop-color="#ff726a"/><stop offset="0.4738" stop-color="#ff524c"/><stop offset="0.5692" stop-color="#ff3833"/><stop offset="0.6862" stop-color="#ff221e"/><stop offset="0.8400" stop-color="#ff0f0c"/><stop offset="1.0000" stop-color="#ff0200"/></linearGradient><linearGradient id="b80"><stop offset="0.0000" stop-color="#00fff9"/><stop offset="0.0152" stop-color="#02fff9"/><stop offset="0.0939" stop-color="#55fff9"/><stop offset="0.1545" stop-color="#9ffff9"/><stop offset="0.2212" stop-color="#fefff9"/><stop offset="0.2242" stop-color="#fffcf5"/><stop offset="0.2455" stop-color="#ffded9"/><stop offset="0.2697" stop-color="#ffc3be"/><stop offset="0.3242" stop-color="#ff9591"/><stop offset="0.3909" stop-color="#ff6e6b"/><stop offset="0.4697" stop-color="#ff4f4d"/><stop offset="0.5667" stop-color="#ff3533"/><stop offset="0.6879" stop-color="#ff1f1e"/><stop offset="0.8455" stop-color="#ff0c0b"/><stop offset="1.0000" stop-color="#ff0000"/></linearGradient><linearGradient id="b81"><stop offset="0.0000" stop-color="#00feff"/><stop offset="0.0121" stop-color="#02feff"/><stop offset="0.1000" stop-color="#5ffeff"/><stop offset="0.1606" stop-color="#acfeff"/><stop offset="0.2182" stop-color="#fffdff"/><stop offset="0.2394" stop-color="#ffe0e1"/><stop offset="0.2636" stop-color="#ffc4c5"/><stop offset="0.3182" stop-color="#ff9596"/><stop offset="0.3848" stop-color="#ff6e6f"/><stop offset="0.4636" stop-color="#ff4f50"/><stop offset="0.5636" stop-color="#ff3435"/><stop offset="0.6848" stop-color="#ff1e1f"/><stop offset="0.8455" stop-color="#ff0b0c"/><stop offset="1.0000" stop-color="#ff0000"/></linearGradient><linearGradient id="b82"><stop offset="0.0000" stop-color="#00f8ff"/><stop offset="0.0123" stop-color="#01f8ff"/><stop offset="0.1012" stop-color="#5df7ff"/><stop offset="0.1656" stop-color="#acf6ff"/><stop offset="0.2239" stop-color="#fef6ff"/><stop offset="0.2485" stop-color="#ffd5de"/><stop offset="0.2699" stop-color="#ffbec6"/><stop offset="0.3252" stop-color="#ff9097"/><stop offset="0.3896" stop-color="#ff6c72"/><stop offset="0.4693" stop-color="#ff4d52"/><stop offset="0.5675" stop-color="#ff3337"/><stop offset="0.6902" stop-color="#ff1e21"/><stop offset="0.8466" stop-color="#ff0b0e"/><stop offset="1.0000" stop-color="#ff0001"/></linearGradient><linearGradient id="b83"><stop offset="0.0000" stop-color="#00f2ff"/><stop offset="0.0124" stop-color="#00f2ff"/><stop offset="0.0963" stop-color="#54f1ff"/><stop offset="0.1584" stop-color="#9defff"/><stop offset="0.2298" stop-color="#feeeff"/><stop offset="0.2329" stop-color="#ffebfc"/><stop offset="0.2547" stop-color="#ffcfdf"/><stop offset="0.2795" stop-color="#ffb6c4"/><stop offset="0.3323" stop-color="#ff8c98"/><stop offset="0.3975" stop-color="#ff6973"/><stop offset="0.4783" stop-color="#ff4b53"/><stop offset="0.5745" stop-color="#ff3239"/><stop offset="0.6894" stop-color="#ff1e24"/><stop offset="0.8447" stop-color="#ff0b10"/><stop offset="1.0000" stop-color="#ff0003"/></linearGradient><linearGradient id="b84"><stop offset="0.0000" stop-color="#00ecff"/><stop offset="0.0157" stop-color="#02ecff"/><stop offset="0.1003" stop-color="#55eaff"/><stop offset="0.1630" stop-color="#9de8ff"/><stop offset="0.2351" stop-color="#fde6ff"/><stop offset="0.2382" stop-color="#ffe4fc"/><stop offset="0.2602" stop-color="#ffc9e0"/><stop offset="0.2853" stop-color="#ffb0c5"/><stop offset="0.3386" stop-color="#ff8899"/><stop offset="0.4044" stop-color="#ff6674"/><stop offset="0.4859" stop-color="#ff4854"/><stop offset="0.5799" stop-color="#ff313b"/><stop offset="0.6959" stop-color="#ff1d25"/><stop offset="0.8527" stop-color="#ff0b12"/><stop offset="1.0000" stop-color="#ff0005"/></linearGradient><linearGradient id="b85"><stop offset="0.0000" stop-color="#00e6ff"/><stop offset="0.0127" stop-color="#01e6ff"/><stop offset="0.1051" stop-color="#5ae4ff"/><stop offset="0.1688" stop-color="#a2e1ff"/><stop offset="0.2420" stop-color="#ffddfd"/><stop offset="0.2643" stop-color="#ffc3e0"/><stop offset="0.2898" stop-color="#ffabc6"/><stop offset="0.3439" stop-color="#ff849a"/><stop offset="0.4108" stop-color="#ff6275"/><stop offset="0.4904" stop-color="#ff4756"/><stop offset="0.5860" stop-color="#ff2f3d"/><stop offset="0.7006" stop-color="#ff1c27"/><stop offset="0.8567" stop-color="#ff0a13"/><stop offset="1.0000" stop-color="#ff0007"/></linearGradient><linearGradient id="b86"><stop offset="0.0000" stop-color="#00e1ff"/><stop offset="0.0129" stop-color="#00e0ff"/><stop offset="0.1097" stop-color="#5bddff"/><stop offset="0.1774" stop-color="#a6dbff"/><stop offset="0.2484" stop-color="#ffd6fd"/><stop offset="0.2710" stop-color="#ffbde1"/><stop offset="0.2968" stop-color="#ffa6c7"/><stop offset="0.3516" stop-color="#ff809b"/><stop offset="0.4194" stop-color="#ff5f76"/><stop offset="0.4968" stop-color="#ff4558"/><stop offset="0.5903" stop-color="#ff2f3f"/><stop offset="0.7032" stop-color="#ff1c2a"/><stop offset="0.8581" stop-color="#ff0a15"/><stop offset="1.0000" stop-color="#ff0009"/></linearGradient><linearGradient id="b87"><stop offset="0.0000" stop-color="#00dbff"/><stop offset="0.0163" stop-color="#02dbff"/><stop offset="0.1111" stop-color="#59d7ff"/><stop offset="0.1830" stop-color="#a7d4ff"/><stop offset="0.2549" stop-color="#ffd0fe"/><stop offset="0.3007" stop-color="#ffa4cb"/><stop offset="0.3562" stop-color="#ff7e9f"/><stop offset="0.4216" stop-color="#ff5f7a"/><stop offset="0.5000" stop-color="#ff445c"/><stop offset="0.5948" stop-color="#ff2e42"/><stop offset="0.7059" stop-color="#ff1c2c"/><stop offset="0.8595" stop-color="#ff0a18"/><stop offset="1.0000" stop-color="#ff000b"/></linearGradient><linearGradient id="b88"><stop offset="0.0000" stop-color="#00d6ff"/><stop offset="0.0132" stop-color="#02d5ff"/><stop offset="0.1192" stop-color="#61d1ff"/><stop offset="0.1887" stop-color="#abceff"/><stop offset="0.2583" stop-color="#ffc9fe"/><stop offset="0.3046" stop-color="#ff9fcb"/><stop offset="0.3609" stop-color="#ff7aa0"/><stop offset="0.4272" stop-color="#ff5c7b"/><stop offset="0.5066" stop-color="#ff425d"/><stop offset="0.5993" stop-color="#ff2d43"/><stop offset="0.7119" stop-color="#ff1a2d"/><stop offset="0.8642" stop-color="#ff0919"/><stop offset="1.0000" stop-color="#ff000c"/></linearGradient><linearGradient id="b89"><stop offset="0.0000" stop-color="#00d1ff"/><stop offset="0.0134" stop-color="#01d0ff"/><stop offset="0.1208" stop-color="#5fcbff"/><stop offset="0.1946" stop-color="#abc7ff"/><stop offset="0.2651" stop-color="#ffc3ff"/><stop offset="0.3121" stop-color="#ff9acc"/><stop offset="0.3691" stop-color="#ff76a1"/><stop offset="0.4362" stop-color="#ff587c"/><stop offset="0.5134" stop-color="#ff405f"/><stop offset="0.6040" stop-color="#ff2c46"/><stop offset="0.7148" stop-color="#ff1a30"/><stop offset="0.8658" stop-color="#ff091b"/><stop offset="1.0000" stop-color="#ff000e"/></linearGradient><linearGradient id="b90"><stop offset="0.0000" stop-color="#00ccff"/><stop offset="0.0136" stop-color="#00cbff"/><stop offset="0.1224" stop-color="#5dc6ff"/><stop offset="0.2007" stop-color="#acc1ff"/><stop offset="0.2721" stop-color="#ffbcff"/><stop offset="0.3197" stop-color="#ff95cd"/><stop offset="0.3776" stop-color="#ff72a2"/><stop offset="0.4422" stop-color="#ff577f"/><stop offset="0.5204" stop-color="#ff3f61"/><stop offset="0.6122" stop-color="#ff2a48"/><stop offset="0.7211" stop-color="#ff1932"/><stop offset="0.8707" stop-color="#ff091d"/><stop offset="1.0000" stop-color="#ff0011"/></linearGradient><linearGradient id="b91"><stop offset="0.0000" stop-color="#00c7ff"/><stop offset="0.0172" stop-color="#02c6ff"/><stop offset="0.1207" stop-color="#58c0ff"/><stop offset="0.1931" stop-color="#9ebcff"/><stop offset="0.2793" stop-color="#feb6ff"/><stop offset="0.2828" stop-color="#ffb3fc"/><stop offset="0.3310" stop-color="#ff8ecb"/><stop offset="0.3862" stop-color="#ff6ea3"/><stop offset="0.4517" stop-color="#ff5380"/><stop offset="0.5276" stop-color="#ff3d63"/><stop offset="0.6172" stop-color="#ff2a4a"/><stop offset="0.7241" stop-color="#ff1935"/><stop offset="0.8724" stop-color="#ff0920"/><stop offset="1.0000" stop-color="#ff0013"/></linearGradient><linearGradient id="b92"><stop offset="0.0000" stop-color="#00c2ff"/><stop offset="0.0140" stop-color="#01c1ff"/><stop offset="0.1259" stop-color="#5cbbff"/><stop offset="0.1993" stop-color="#a2b6ff"/><stop offset="0.2832" stop-color="#feb0ff"/><stop offset="0.2867" stop-color="#ffaefc"/><stop offset="0.3322" stop-color="#ff8bcf"/><stop offset="0.3881" stop-color="#ff6ca6"/><stop offset="0.4545" stop-color="#ff5283"/><stop offset="0.5315" stop-color="#ff3b65"/><stop offset="0.6224" stop-color="#ff284c"/><stop offset="0.7273" stop-color="#ff1837"/><stop offset="0.8776" stop-color="#ff0821"/><stop offset="1.0000" stop-color="#ff0015"/></linearGradient><linearGradient id="b93"><stop offset="0.0000" stop-color="#00bdff"/><stop offset="0.0142" stop-color="#01bcff"/><stop offset="0.1312" stop-color="#5db5ff"/><stop offset="0.2092" stop-color="#a6b0ff"/><stop offset="0.2943" stop-color="#ffa8fd"/><stop offset="0.3404" stop-color="#ff87d0"/><stop offset="0.3972" stop-color="#ff68a7"/><stop offset="0.4610" stop-color="#ff5085"/><stop offset="0.5390" stop-color="#ff3a67"/><stop offset="0.6277" stop-color="#ff274f"/><stop offset="0.7340" stop-color="#ff1739"/><stop offset="0.8830" stop-color="#ff0823"/><stop offset="1.0000" stop-color="#ff0017"/></linearGradient><linearGradient id="b94"><stop offset="0.0000" stop-color="#00b8ff"/><stop offset="0.0180" stop-color="#02b7ff"/><stop offset="0.1331" stop-color="#5bb0ff"/><stop offset="0.2158" stop-color="#a6aaff"/><stop offset="0.3022" stop-color="#ffa2fd"/><stop offset="0.3489" stop-color="#ff82d0"/><stop offset="0.4065" stop-color="#ff65a8"/><stop offset="0.4712" stop-color="#ff4d86"/><stop offset="0.5468" stop-color="#ff386a"/><stop offset="0.6331" stop-color="#ff2751"/><stop offset="0.7374" stop-color="#ff173c"/><stop offset="0.8597" stop-color="#ff0a29"/><stop offset="1.0000" stop-color="#ff001a"/></linearGradient><linearGradient id="b95"><stop offset="0.0000" stop-color="#00b4ff"/><stop offset="0.0182" stop-color="#02b3ff"/><stop offset="0.1350" stop-color="#59abff"/><stop offset="0.2226" stop-color="#a7a5ff"/><stop offset="0.3102" stop-color="#ff9dfe"/><stop offset="0.3577" stop-color="#ff7dd1"/><stop offset="0.4124" stop-color="#ff63ab"/><stop offset="0.4781" stop-color="#ff4b89"/><stop offset="0.5547" stop-color="#ff366c"/><stop offset="0.6423" stop-color="#ff2553"/><stop offset="0.7445" stop-color="#ff163e"/><stop offset="0.8613" stop-color="#ff0a2c"/><stop offset="1.0000" stop-color="#ff001c"/></linearGradient><linearGradient id="b96"><stop offset="0.0000" stop-color="#00afff"/><stop offset="0.0148" stop-color="#01aeff"/><stop offset="0.1444" stop-color="#61a6ff"/><stop offset="0.2296" stop-color="#aa9fff"/><stop offset="0.3148" stop-color="#ff97fe"/><stop offset="0.3630" stop-color="#ff79d2"/><stop offset="0.4185" stop-color="#ff5fac"/><stop offset="0.4852" stop-color="#ff488a"/><stop offset="0.5593" stop-color="#ff356e"/><stop offset="0.6481" stop-color="#ff2455"/><stop offset="0.7481" stop-color="#ff1540"/><stop offset="0.8963" stop-color="#ff062a"/><stop offset="1.0000" stop-color="#ff001e"/></linearGradient><linearGradient id="b97"><stop offset="0.0000" stop-color="#00abff"/><stop offset="0.0150" stop-color="#00aaff"/><stop offset="0.1466" stop-color="#5fa1ff"/><stop offset="0.2368" stop-color="#ab9aff"/><stop offset="0.3233" stop-color="#ff92ff"/><stop offset="0.3722" stop-color="#ff75d3"/><stop offset="0.4286" stop-color="#ff5bad"/><stop offset="0.4925" stop-color="#ff468c"/><stop offset="0.5677" stop-color="#ff3370"/><stop offset="0.6541" stop-color="#ff2358"/><stop offset="0.7519" stop-color="#ff1543"/><stop offset="1.0000" stop-color="#ff0021"/></linearGradient><linearGradient id="b98"><stop offset="0.0000" stop-color="#00a6ff"/><stop offset="0.0191" stop-color="#02a5ff"/><stop offset="0.1489" stop-color="#5d9cff"/><stop offset="0.2443" stop-color="#ab95ff"/><stop offset="0.3321" stop-color="#ff8dff"/><stop offset="0.3817" stop-color="#ff70d3"/><stop offset="0.4351" stop-color="#ff59b0"/><stop offset="0.5000" stop-color="#ff448f"/><stop offset="0.5725" stop-color="#ff3274"/><stop offset="0.6565" stop-color="#ff235b"/><stop offset="0.7557" stop-color="#ff1546"/><stop offset="1.0000" stop-color="#ff0024"/></linearGradient><linearGradient id="b99"><stop offset="0.0000" stop-color="#00a2ff"/><stop offset="0.0117" stop-color="#00a1ff"/><stop offset="0.0233" stop-color="#06a0ff"/><stop offset="0.1595" stop-color="#6497ff"/><stop offset="0.2529" stop-color="#af8fff"/><stop offset="0.3385" stop-color="#fe87ff"/><stop offset="0.3891" stop-color="#ff6cd4"/><stop offset="0.4436" stop-color="#ff56b1"/><stop offset="0.5058" stop-color="#ff4292"/><stop offset="0.5798" stop-color="#ff3176"/><stop offset="0.6654" stop-color="#ff215d"/><stop offset="0.7626" stop-color="#ff1448"/><stop offset="1.0000" stop-color="#ff0027"/></linearGradient><linearGradient id="b100"><stop offset="0.0000" stop-color="#009eff"/><stop offset="0.0157" stop-color="#019dff"/><stop offset="0.1535" stop-color="#5c93ff"/><stop offset="0.2441" stop-color="#a28cff"/><stop offset="0.3504" stop-color="#ff80fc"/><stop offset="0.3976" stop-color="#ff68d5"/><stop offset="0.4528" stop-color="#ff52b2"/><stop offset="0.5157" stop-color="#ff3f93"/><stop offset="0.5906" stop-color="#ff2e77"/><stop offset="0.6732" stop-color="#ff205f"/><stop offset="0.7677" stop-color="#ff134b"/><stop offset="1.0000" stop-color="#ff0029"/></linearGradient><linearGradient id="b101"><stop offset="0.0000" stop-color="#009aff"/><stop offset="0.0160" stop-color="#0099ff"/><stop offset="0.1600" stop-color="#5d8eff"/><stop offset="0.2560" stop-color="#a686ff"/><stop offset="0.3600" stop-color="#ff7bfd"/><stop offset="0.4080" stop-color="#ff64d6"/><stop offset="0.4640" stop-color="#ff4fb2"/><stop offset="0.5240" stop-color="#ff3d95"/><stop offset="0.5960" stop-color="#ff2d7a"/><stop offset="0.6800" stop-color="#ff1f62"/><stop offset="0.7720" stop-color="#ff134e"/><stop offset="1.0000" stop-color="#ff002c"/></linearGradient><linearGradient id="b102"><stop offset="0.0000" stop-color="#0096ff"/><stop offset="0.0203" stop-color="#0294ff"/><stop offset="0.1626" stop-color="#5b8aff"/><stop offset="0.2642" stop-color="#a682ff"/><stop offset="0.3699" stop-color="#ff77fd"/><stop offset="0.4187" stop-color="#ff60d6"/><stop offset="0.4715" stop-color="#ff4db5"/><stop offset="0.5325" stop-color="#ff3b98"/><stop offset="0.6057" stop-color="#ff2c7d"/><stop offset="0.6870" stop-color="#ff1e65"/><stop offset="0.7764" stop-color="#ff1251"/><stop offset="1.0000" stop-color="#ff002f"/></linearGradient><linearGradient id="b103"><stop offset="0.0000" stop-color="#0092ff"/><stop offset="0.0124" stop-color="#0091ff"/><stop offset="0.0249" stop-color="#0690ff"/><stop offset="0.1743" stop-color="#6285ff"/><stop offset="0.2739" stop-color="#aa7dff"/><stop offset="0.3776" stop-color="#ff72fe"/><stop offset="0.4274" stop-color="#ff5cd7"/><stop offset="0.4813" stop-color="#ff49b6"/><stop offset="0.5436" stop-color="#ff3999"/><stop offset="0.6141" stop-color="#ff2a7f"/><stop offset="0.6929" stop-color="#ff1d68"/><stop offset="0.7842" stop-color="#ff1154"/><stop offset="1.0000" stop-color="#ff0032"/></linearGradient><linearGradient id="b104"><stop offset="0.0000" stop-color="#008eff"/><stop offset="0.0168" stop-color="#018dff"/><stop offset="0.1765" stop-color="#6081ff"/><stop offset="0.2815" stop-color="#aa78ff"/><stop offset="0.3866" stop-color="#ff6dfe"/><stop offset="0.4370" stop-color="#ff58d8"/><stop offset="0.4916" stop-color="#ff46b7"/><stop offset="0.5546" stop-color="#ff369a"/><stop offset="0.6218" stop-color="#ff2881"/><stop offset="0.7017" stop-color="#ff1b6a"/><stop offset="0.7899" stop-color="#ff1056"/><stop offset="1.0000" stop-color="#ff0035"/></linearGradient><linearGradient id="b105"><stop offset="0.0000" stop-color="#008aff"/><stop offset="0.0214" stop-color="#0289ff"/><stop offset="0.1838" stop-color="#617dff"/><stop offset="0.2949" stop-color="#ae73ff"/><stop offset="0.3974" stop-color="#ff69ff"/><stop offset="0.4444" stop-color="#ff56db"/><stop offset="0.5000" stop-color="#ff44ba"/><stop offset="0.5598" stop-color="#ff359e"/><stop offset="0.6282" stop-color="#ff2785"/><stop offset="0.7906" stop-color="#ff105b"/><stop offset="1.0000" stop-color="#ff0039"/></linearGradient><linearGradient id="b106"><stop offset="0.0000" stop-color="#0087ff"/><stop offset="0.0217" stop-color="#0285ff"/><stop offset="0.1870" stop-color="#5f79ff"/><stop offset="0.3000" stop-color="#ab6fff"/><stop offset="0.4087" stop-color="#ff64ff"/><stop offset="0.4565" stop-color="#ff52dc"/><stop offset="0.5130" stop-color="#ff41bb"/><stop offset="0.5739" stop-color="#ff329f"/><stop offset="0.6391" stop-color="#ff2587"/><stop offset="0.8000" stop-color="#ff105d"/><stop offset="1.0000" stop-color="#ff003c"/></linearGradient><linearGradient id="b107"><stop offset="0.0000" stop-color="#0083ff"/><stop offset="0.0178" stop-color="#0182ff"/><stop offset="0.0311" stop-color="#0881ff"/><stop offset="0.1956" stop-color="#6374ff"/><stop offset="0.3111" stop-color="#ae6aff"/><stop offset="0.4178" stop-color="#fe60ff"/><stop offset="0.4667" stop-color="#ff4edd"/><stop offset="0.5200" stop-color="#ff3ebe"/><stop offset="0.5778" stop-color="#ff31a3"/><stop offset="0.6444" stop-color="#ff248b"/><stop offset="0.8044" stop-color="#ff0f61"/><stop offset="1.0000" stop-color="#ff0040"/></linearGradient><linearGradient id="b108"><stop offset="0.0000" stop-color="#007fff"/><stop offset="0.0225" stop-color="#027eff"/><stop offset="0.1982" stop-color="#6171ff"/><stop offset="0.3153" stop-color="#ac66ff"/><stop offset="0.4279" stop-color="#fe5bff"/><stop offset="0.4820" stop-color="#ff49da"/><stop offset="0.5315" stop-color="#ff3bbf"/><stop offset="0.5901" stop-color="#ff2ea4"/><stop offset="0.6532" stop-color="#ff238d"/><stop offset="0.8063" stop-color="#ff0f65"/><stop offset="1.0000" stop-color="#ff0043"/></linearGradient><linearGradient id="b109"><stop offset="0.0000" stop-color="#007cff"/><stop offset="0.0229" stop-color="#027aff"/><stop offset="0.1972" stop-color="#5d6dff"/><stop offset="0.3165" stop-color="#a663ff"/><stop offset="0.4450" stop-color="#ff55fd"/><stop offset="0.4908" stop-color="#ff46de"/><stop offset="0.5459" stop-color="#ff38bf"/><stop offset="0.6651" stop-color="#ff2190"/><stop offset="0.8165" stop-color="#ff0e67"/><stop offset="1.0000" stop-color="#ff0047"/></linearGradient><linearGradient id="b110"><stop offset="0.0000" stop-color="#0078ff"/><stop offset="0.0141" stop-color="#0077ff"/><stop offset="0.0376" stop-color="#0a76ff"/><stop offset="0.2113" stop-color="#6369ff"/><stop offset="0.3286" stop-color="#a95eff"/><stop offset="0.4554" stop-color="#ff51fd"/><stop offset="0.5023" stop-color="#ff43de"/><stop offset="0.5540" stop-color="#ff36c3"/><stop offset="0.6714" stop-color="#ff2093"/><stop offset="0.8169" stop-color="#ff0e6c"/><stop offset="1.0000" stop-color="#ff004b"/></linearGradient><linearGradient id="b111"><stop offset="0.0000" stop-color="#0075ff"/><stop offset="0.0191" stop-color="#0174ff"/><stop offset="0.0287" stop-color="#0573ff"/><stop offset="0.2153" stop-color="#6165ff"/><stop offset="0.3397" stop-color="#aa5aff"/><stop offset="0.4689" stop-color="#ff4dfe"/><stop offset="0.5167" stop-color="#ff3fdf"/><stop offset="0.5646" stop-color="#ff34c6"/><stop offset="0.6842" stop-color="#ff1e96"/><stop offset="0.8278" stop-color="#ff0c6f"/><stop offset="1.0000" stop-color="#ff0050"/></linearGradient><linearGradient id="b112"><stop offset="0.0000" stop-color="#0072ff"/><stop offset="0.0194" stop-color="#0070ff"/><stop offset="0.0291" stop-color="#0470ff"/><stop offset="0.2233" stop-color="#6261ff"/><stop offset="0.3544" stop-color="#ad56ff"/><stop offset="0.4806" stop-color="#ff49fe"/><stop offset="0.5291" stop-color="#ff3ce0"/><stop offset="0.5777" stop-color="#ff30c6"/><stop offset="0.6942" stop-color="#ff1c98"/><stop offset="0.8350" stop-color="#ff0b72"/><stop offset="1.0000" stop-color="#ff0053"/></linearGradient><linearGradient id="b113"><stop offset="0.0000" stop-color="#006eff"/><stop offset="0.0248" stop-color="#026dff"/><stop offset="0.2277" stop-color="#615eff"/><stop offset="0.3663" stop-color="#ad52ff"/><stop offset="0.4950" stop-color="#ff45ff"/><stop offset="0.5891" stop-color="#ff2ec9"/><stop offset="0.7030" stop-color="#ff1b9c"/><stop offset="0.8366" stop-color="#ff0b77"/><stop offset="1.0000" stop-color="#ff0058"/></linearGradient><linearGradient id="b114"><stop offset="0.0000" stop-color="#006bff"/><stop offset="0.0203" stop-color="#016aff"/><stop offset="0.0457" stop-color="#0c68ff"/><stop offset="0.2386" stop-color="#645aff"/><stop offset="0.3756" stop-color="#ae4eff"/><stop offset="0.5076" stop-color="#ff41ff"/><stop offset="0.5990" stop-color="#ff2ccc"/><stop offset="0.7107" stop-color="#ff1aa0"/><stop offset="0.8426" stop-color="#ff0b7c"/><stop offset="1.0000" stop-color="#ff005d"/></linearGradient><linearGradient id="b115"><stop offset="0.0000" stop-color="#0068ff"/><stop offset="0.0206" stop-color="#0067ff"/><stop offset="0.0361" stop-color="#0766ff"/><stop offset="0.2423" stop-color="#6257ff"/><stop offset="0.3866" stop-color="#ae4aff"/><stop offset="0.5206" stop-color="#fe3dff"/><stop offset="0.6134" stop-color="#ff29cd"/><stop offset="0.7216" stop-color="#ff18a3"/><stop offset="0.8505" stop-color="#ff0a7f"/><stop offset="1.0000" stop-color="#ff0061"/></linearGradient><linearGradient id="b116"><stop offset="0.0000" stop-color="#0065ff"/><stop offset="0.0211" stop-color="#0064ff"/><stop offset="0.0316" stop-color="#0463ff"/><stop offset="0.2474" stop-color="#6153ff"/><stop offset="0.3947" stop-color="#ab47ff"/><stop offset="0.5368" stop-color="#fe39ff"/><stop offset="0.6316" stop-color="#ff26ce"/><stop offset="0.7316" stop-color="#ff17a7"/><stop offset="0.8526" stop-color="#ff0a85"/><stop offset="1.0000" stop-color="#ff0067"/></linearGradient><linearGradient id="b117"><stop offset="0.0000" stop-color="#0062ff"/><stop offset="0.0269" stop-color="#0160ff"/><stop offset="0.2581" stop-color="#6250ff"/><stop offset="0.4086" stop-color="#ac43ff"/><stop offset="0.5538" stop-color="#fe36ff"/><stop offset="0.6505" stop-color="#ff23ce"/><stop offset="0.7473" stop-color="#ff15aa"/><stop offset="0.8656" stop-color="#ff0888"/><stop offset="1.0000" stop-color="#ff006c"/></linearGradient><linearGradient id="b118"><stop offset="0.0000" stop-color="#005fff"/><stop offset="0.0221" stop-color="#015dff"/><stop offset="0.0442" stop-color="#095cff"/><stop offset="0.2652" stop-color="#634dff"/><stop offset="0.4144" stop-color="#a940ff"/><stop offset="0.5746" stop-color="#ff31fe"/><stop offset="0.6575" stop-color="#ff22d4"/><stop offset="0.7569" stop-color="#ff14ae"/><stop offset="0.8674" stop-color="#ff088e"/><stop offset="1.0000" stop-color="#ff0072"/></linearGradient><linearGradient id="b119"><stop offset="0.0000" stop-color="#005cff"/><stop offset="0.0225" stop-color="#005aff"/><stop offset="0.0393" stop-color="#0659ff"/><stop offset="0.2697" stop-color="#614aff"/><stop offset="0.4270" stop-color="#aa3dff"/><stop offset="0.5899" stop-color="#ff2dfe"/><stop offset="0.6742" stop-color="#ff1fd4"/><stop offset="0.7697" stop-color="#ff12b0"/><stop offset="0.8764" stop-color="#ff0792"/><stop offset="1.0000" stop-color="#ff0077"/></linearGradient><linearGradient id="b120"><stop offset="0.0000" stop-color="#0059ff"/><stop offset="0.0345" stop-color="#0457ff"/><stop offset="0.2816" stop-color="#6246ff"/><stop offset="0.4483" stop-color="#ad39ff"/><stop offset="0.6092" stop-color="#ff2afe"/><stop offset="0.6897" stop-color="#ff1dd7"/><stop offset="0.7816" stop-color="#ff11b5"/><stop offset="0.8851" stop-color="#ff0697"/><stop offset="1.0000" stop-color="#ff007d"/></linearGradient><linearGradient id="b121"><stop offset="0.0000" stop-color="#0056ff"/><stop offset="0.0237" stop-color="#0155ff"/><stop offset="0.0651" stop-color="#0f52ff"/><stop offset="0.2959" stop-color="#6542ff"/><stop offset="0.4675" stop-color="#b035ff"/><stop offset="0.6272" stop-color="#ff26ff"/><stop offset="0.7041" stop-color="#ff1ada"/><stop offset="0.7929" stop-color="#ff0fb9"/><stop offset="0.8876" stop-color="#ff069e"/><stop offset="1.0000" stop-color="#ff0084"/></linearGradient><linearGradient id="b122"><stop offset="0.0000" stop-color="#0053ff"/><stop offset="0.0242" stop-color="#0152ff"/><stop offset="0.0606" stop-color="#0c50ff"/><stop offset="0.3091" stop-color="#663fff"/><stop offset="0.4848" stop-color="#b032ff"/><stop offset="0.6485" stop-color="#ff23ff"/><stop offset="0.7212" stop-color="#ff18dd"/><stop offset="0.8061" stop-color="#ff0ebe"/><stop offset="0.8970" stop-color="#ff05a3"/><stop offset="1.0000" stop-color="#ff008b"/></linearGradient><linearGradient id="b123"><stop offset="0.0000" stop-color="#0051ff"/><stop offset="0.0247" stop-color="#004fff"/><stop offset="0.0556" stop-color="#0a4dff"/><stop offset="0.3148" stop-color="#643cff"/><stop offset="0.4938" stop-color="#ae2fff"/><stop offset="0.6667" stop-color="#ff20ff"/><stop offset="0.7407" stop-color="#ff15de"/><stop offset="0.8148" stop-color="#ff0dc3"/><stop offset="0.9568" stop-color="#ff009b"/><stop offset="1.0000" stop-color="#ff0091"/></linearGradient><linearGradient id="b124"><stop offset="0.0000" stop-color="#004eff"/><stop offset="0.0253" stop-color="#004dff"/><stop offset="0.0443" stop-color="#054bff"/><stop offset="0.3228" stop-color="#633aff"/><stop offset="0.5127" stop-color="#ae2bff"/><stop offset="0.6899" stop-color="#fe1cff"/><stop offset="0.8354" stop-color="#ff0bc5"/><stop offset="1.0000" stop-color="#ff0099"/></linearGradient><linearGradient id="b125"><stop offset="0.0000" stop-color="#004bff"/><stop offset="0.0261" stop-color="#014aff"/><stop offset="0.0719" stop-color="#0e47ff"/><stop offset="0.3399" stop-color="#6636ff"/><stop offset="0.5294" stop-color="#ae28ff"/><stop offset="0.7124" stop-color="#fe19ff"/><stop offset="0.8497" stop-color="#ff09ca"/><stop offset="1.0000" stop-color="#ff00a1"/></linearGradient><linearGradient id="b126"><stop offset="0.0000" stop-color="#0049ff"/><stop offset="0.0268" stop-color="#0047ff"/><stop offset="0.0671" stop-color="#0c45ff"/><stop offset="0.3490" stop-color="#6434ff"/><stop offset="0.5503" stop-color="#ae25ff"/><stop offset="0.7383" stop-color="#fd16ff"/><stop offset="0.8658" stop-color="#ff08cf"/><stop offset="1.0000" stop-color="#ff00a9"/></linearGradient><linearGradient id="b127"><stop offset="0.0000" stop-color="#0046ff"/><stop offset="0.0274" stop-color="#0045ff"/><stop offset="0.0548" stop-color="#0743ff"/><stop offset="0.3562" stop-color="#6331ff"/><stop offset="0.5685" stop-color="#af22ff"/><stop offset="0.7603" stop-color="#fd12ff"/><stop offset="0.8836" stop-color="#ff06d2"/><stop offset="1.0000" stop-color="#ff00b1"/></linearGradient><linearGradient id="b128"><stop offset="0.0000" stop-color="#0044ff"/><stop offset="0.0282" stop-color="#0042ff"/><stop offset="0.0493" stop-color="#0541ff"/><stop offset="0.3662" stop-color="#612eff"/><stop offset="0.5845" stop-color="#ac1fff"/><stop offset="0.7887" stop-color="#fd0fff"/><stop offset="0.9014" stop-color="#ff04d7"/><stop offset="1.0000" stop-color="#ff00ba"/></linearGradient><linearGradient id="b129"><stop offset="0.0000" stop-color="#0041ff"/><stop offset="0.0292" stop-color="#013fff"/><stop offset="0.0876" stop-color="#103cff"/><stop offset="0.3942" stop-color="#672bff"/><stop offset="0.6131" stop-color="#af1cff"/><stop offset="0.8248" stop-color="#ff0cff"/><stop offset="0.9051" stop-color="#ff04e1"/><stop offset="1.0000" stop-color="#ff00c5"/></linearGradient><linearGradient id="b130"><stop offset="0.0000" stop-color="#003eff"/><stop offset="0.0301" stop-color="#003dff"/><stop offset="0.0827" stop-color="#0d3aff"/><stop offset="0.4060" stop-color="#6528ff"/><stop offset="0.6391" stop-color="#af19ff"/><stop offset="0.8571" stop-color="#ff08ff"/><stop offset="1.0000" stop-color="#ff00cf"/></linearGradient><linearGradient id="b131"><stop offset="0.0000" stop-color="#003cff"/><stop offset="0.0308" stop-color="#003bff"/><stop offset="0.0692" stop-color="#0939ff"/><stop offset="0.4154" stop-color="#6426ff"/><stop offset="0.6615" stop-color="#b016ff"/><stop offset="0.8846" stop-color="#ff05ff"/><stop offset="1.0000" stop-color="#ff00d9"/></linearGradient><linearGradient id="b132"><stop offset="0.0000" stop-color="#0039ff"/><stop offset="0.0320" stop-color="#0138ff"/><stop offset="0.1040" stop-color="#1234ff"/><stop offset="0.4400" stop-color="#6722ff"/><stop offset="0.6880" stop-color="#b013ff"/><stop offset="0.9200" stop-color="#fe02ff"/><stop offset="1.0000" stop-color="#ff00e5"/></linearGradient><linearGradient id="b133"><stop offset="0.0000" stop-color="#0037ff"/><stop offset="0.0331" stop-color="#0136ff"/><stop offset="0.3802" stop-color="#5224ff"/><stop offset="0.6777" stop-color="#a413ff"/><stop offset="0.9587" stop-color="#fe00ff"/><stop offset="1.0000" stop-color="#ff00f2"/></linearGradient><linearGradient id="b134"><stop offset="0.0000" stop-color="#0035ff"/><stop offset="0.0342" stop-color="#0034ff"/><stop offset="0.0940" stop-color="#0d31ff"/><stop offset="0.4701" stop-color="#641eff"/><stop offset="0.7436" stop-color="#ae0eff"/><stop offset="1.0000" stop-color="#fe00ff"/></linearGradient><linearGradient id="b135"><stop offset="0.0000" stop-color="#0033ff"/><stop offset="0.0351" stop-color="#0031ff"/><stop offset="0.0614" stop-color="#0530ff"/><stop offset="0.4649" stop-color="#5e1dff"/><stop offset="0.7456" stop-color="#a70dff"/><stop offset="0.9474" stop-color="#e200ff"/><stop offset="1.0000" stop-color="#f200ff"/></linearGradient><linearGradient id="b136"><stop offset="0.0000" stop-color="#0030ff"/><stop offset="0.0367" stop-color="#012fff"/><stop offset="0.0826" stop-color="#0a2dff"/><stop offset="0.4679" stop-color="#5b1bff"/><stop offset="0.7431" stop-color="#9e0cff"/><stop offset="0.9450" stop-color="#d400ff"/><stop offset="1.0000" stop-color="#e400ff"/></linearGradient><linearGradient id="b137"><stop offset="0.0000" stop-color="#002eff"/><stop offset="0.0381" stop-color="#002dff"/><stop offset="0.4571" stop-color="#531aff"/><stop offset="0.7333" stop-color="#920cff"/><stop offset="1.0000" stop-color="#d700ff"/></linearGradient><linearGradient id="b138"><stop offset="0.0000" stop-color="#002cff"/><stop offset="0.0495" stop-color="#022aff"/><stop offset="0.4356" stop-color="#4a1aff"/><stop offset="0.7228" stop-color="#870cff"/><stop offset="1.0000" stop-color="#ca00ff"/></linearGradient><linearGradient id="b139"><stop offset="0.0000" stop-color="#002aff"/><stop offset="0.0510" stop-color="#0128ff"/><stop offset="0.4286" stop-color="#4519ff"/><stop offset="0.7245" stop-color="#810bff"/><stop offset="1.0000" stop-color="#c000ff"/></linearGradient><linearGradient id="b140"><stop offset="0.0000" stop-color="#0028ff"/><stop offset="0.0430" stop-color="#0126ff"/><stop offset="0.4301" stop-color="#4217ff"/><stop offset="0.7204" stop-color="#790aff"/><stop offset="1.0000" stop-color="#b400ff"/></linearGradient><linearGradient id="b141"><stop offset="0.0000" stop-color="#0026ff"/><stop offset="0.0449" stop-color="#0024ff"/><stop offset="0.4045" stop-color="#3917ff"/><stop offset="0.7079" stop-color="#6f0aff"/><stop offset="1.0000" stop-color="#a900ff"/></linearGradient><linearGradient id="b142"><stop offset="0.0000" stop-color="#0024ff"/><stop offset="0.0588" stop-color="#0122ff"/><stop offset="0.3882" stop-color="#3316ff"/><stop offset="0.7059" stop-color="#670aff"/><stop offset="1.0000" stop-color="#9d00ff"/></linearGradient><linearGradient id="b143"><stop offset="0.0000" stop-color="#0021ff"/><stop offset="0.0494" stop-color="#0120ff"/><stop offset="0.3951" stop-color="#3214ff"/><stop offset="1.0000" stop-color="#9500ff"/></linearGradient><linearGradient id="b144"><stop offset="0.0000" stop-color="#001fff"/><stop offset="0.0519" stop-color="#001eff"/><stop offset="0.3636" stop-color="#2a14ff"/><stop offset="1.0000" stop-color="#8a00ff"/></linearGradient><linearGradient id="b145"><stop offset="0.0000" stop-color="#001eff"/><stop offset="0.0548" stop-color="#001cff"/><stop offset="0.3288" stop-color="#2214ff"/><stop offset="1.0000" stop-color="#8000ff"/></linearGradient><linearGradient id="b146"><stop offset="0.0000" stop-color="#001cff"/><stop offset="0.0725" stop-color="#011aff"/><stop offset="0.2899" stop-color="#1a14ff"/><stop offset="1.0000" stop-color="#7600ff"/></linearGradient><linearGradient id="b147"><stop offset="0.0000" stop-color="#001aff"/><stop offset="0.0615" stop-color="#0118ff"/><stop offset="0.2923" stop-color="#1a12ff"/><stop offset="1.0000" stop-color="#6f00ff"/></linearGradient><linearGradient id="b148"><stop offset="0.0000" stop-color="#0018ff"/><stop offset="0.0656" stop-color="#0016ff"/><stop offset="0.2459" stop-color="#1212ff"/><stop offset="1.0000" stop-color="#6500ff"/></linearGradient><linearGradient id="b149"><stop offset="0.0000" stop-color="#0016ff"/><stop offset="0.0702" stop-color="#0014ff"/><stop offset="0.1579" stop-color="#0812ff"/><stop offset="1.0000" stop-color="#5c00ff"/></linearGradient><linearGradient id="b150"><stop offset="0.0000" stop-color="#0014ff"/><stop offset="0.0769" stop-color="#0112ff"/><stop offset="0.1731" stop-color="#0910ff"/><stop offset="1.0000" stop-color="#5400ff"/></linearGradient><linearGradient id="b151"><stop offset="0.0000" stop-color="#0012ff"/><stop offset="0.0816" stop-color="#0111ff"/><stop offset="1.0000" stop-color="#4d00ff"/></linearGradient><linearGradient id="b152"><stop offset="0.0000" stop-color="#0010ff"/><stop offset="0.0889" stop-color="#000fff"/><stop offset="1.0000" stop-color="#4500ff"/></linearGradient><linearGradient id="b153"><stop offset="0.0000" stop-color="#000fff"/><stop offset="0.1220" stop-color="#010dff"/><stop offset="1.0000" stop-color="#3d00ff"/></linearGradient><linearGradient id="b154"><stop offset="0.0000" stop-color="#000dff"/><stop offset="0.1111" stop-color="#010bff"/><stop offset="1.0000" stop-color="#3500ff"/></linearGradient><linearGradient id="b155"><stop offset="0.0000" stop-color="#000bff"/><stop offset="0.1212" stop-color="#0009ff"/><stop offset="1.0000" stop-color="#2f00ff"/></linearGradient><linearGradient id="b156"><stop offset="0.0000" stop-color="#0009ff"/><stop offset="0.1379" stop-color="#0008ff"/><stop offset="1.0000" stop-color="#2800ff"/></linearGradient><linearGradient id="b157"><stop offset="0.0000" stop-color="#0008ff"/><stop offset="0.2000" stop-color="#0106ff"/><stop offset="1.0000" stop-color="#2000ff"/></linearGradient><linearGradient id="b158"><stop offset="0.0000" stop-color="#0006ff"/><stop offset="0.1905" stop-color="#0104ff"/><stop offset="1.0000" stop-color="#1b00ff"/></linearGradient><linearGradient id="b159"><stop offset="0.0000" stop-color="#0004ff"/><stop offset="0.2353" stop-color="#0003ff"/><stop offset="1.0000" stop-color="#1400ff"/></linearGradient><linearGradient id="b160"><stop offset="0.0000" stop-color="#0003ff"/><stop offset="0.3077" stop-color="#0001ff"/><stop offset="1.0000" stop-color="#0d00ff"/></linearGradient><linearGradient id="b161"><stop offset="0.0000" stop-color="#0001ff"/><stop offset="0.3750" stop-color="#0000ff"/><stop offset="1.0000" stop-color="#0700ff"/></linearGradient></defs><g clip-path="url(#hs)"><rect x="44" y="3" width="40" height="3.6" fill="url(#a0)"/><rect x="37" y="6" width="58" height="3.6" fill="url(#a1)"/><rect x="32" y="9" width="72" height="3.6" fill="url(#a2)"/><rect x="28" y="12" width="83" height="3.6" fill="url(#a3)"/><rect x="25" y="15" width="94" height="3.6" fill="url(#a4)"/><rect x="23" y="18" width="102" height="3.6" fill="url(#a5)"/><rect x="20" y="21" width="112" height="3.6" fill="url(#a6)"/><rect x="19" y="24" width="119" height="3.6" fill="url(#a7)"/><rect x="17" y="27" width="127" height="3.6" fill="url(#a8)"/><rect x="15" y="30" width="135" height="3.6" fill="url(#a9)"/><rect x="14" y="33" width="142" height="3.6" fill="url(#a10)"/><rect x="12" y="36" width="149" height="3.6" fill="url(#a11)"/><rect x="11" y="39" width="156" height="3.6" fill="url(#a12)"/><rect x="10" y="42" width="162" height="3.6" fill="url(#a13)"/><rect x="9" y="45" width="168" height="3.6" fill="url(#a14)"/><rect x="8" y="48" width="174" height="3.6" fill="url(#a15)"/><rect x="7" y="51" width="180" height="3.6" fill="url(#a16)"/><rect x="6" y="54" width="186" height="3.6" fill="url(#a17)"/><rect x="5" y="57" width="192" height="3.6" fill="url(#a18)"/><rect x="4" y="60" width="197" height="3.6" fill="url(#a19)"/><rect x="4" y="63" width="202" height="3.6" fill="url(#a20)"/><rect x="3" y="66" width="208" height="3.6" fill="url(#a21)"/><rect x="3" y="69" width="212" height="3.6" fill="url(#a22)"/><rect x="2" y="72" width="218" height="3.6" fill="url(#a23)"/><rect x="2" y="75" width="222" height="3.6" fill="url(#a24)"/><rect x="1" y="78" width="227" height="3.6" fill="url(#a25)"/><rect x="1" y="81" width="232" height="3.6" fill="url(#a26)"/><rect x="1" y="84" width="236" height="3.6" fill="url(#a27)"/><rect x="0" y="87" width="241" height="3.6" fill="url(#a28)"/><rect x="0" y="90" width="245" height="3.6" fill="url(#a29)"/><rect x="0" y="93" width="250" height="3.6" fill="url(#a30)"/><rect x="0" y="96" width="254" height="3.6" fill="url(#a31)"/><rect x="0" y="99" width="258" height="3.6" fill="url(#a32)"/><rect x="0" y="102" width="262" height="3.6" fill="url(#a33)"/><rect x="0" y="105" width="266" height="3.6" fill="url(#a34)"/><rect x="0" y="108" width="270" height="3.6" fill="url(#a35)"/><rect x="0" y="111" width="274" height="3.6" fill="url(#a36)"/><rect x="0" y="114" width="279" height="3.6" fill="url(#a37)"/><rect x="0" y="117" width="283" height="3.6" fill="url(#a38)"/><rect x="0" y="120" width="287" height="3.6" fill="url(#a39)"/><rect x="0" y="123" width="291" height="3.6" fill="url(#a40)"/><rect x="0" y="126" width="295" height="3.6" fill="url(#a41)"/><rect x="0" y="129" width="299" height="3.6" fill="url(#a42)"/><rect x="0" y="132" width="303" height="3.6" fill="url(#a43)"/><rect x="0" y="135" width="307" height="3.6" fill="url(#a44)"/><rect x="0" y="138" width="311" height="3.6" fill="url(#a45)"/><rect x="0" y="141" width="315" height="3.6" fill="url(#a46)"/><rect x="0" y="144" width="319" height="3.6" fill="url(#a47)"/><rect x="0" y="147" width="323" height="3.6" fill="url(#a48)"/><rect x="0" y="150" width="327" height="3.6" fill="url(#a49)"/><rect x="0" y="153" width="331" height="3.6" fill="url(#a50)"/><rect x="0" y="156" width="335" height="3.6" fill="url(#a51)"/><rect x="0" y="159" width="339" height="3.6" fill="url(#a52)"/><rect x="0" y="162" width="343" height="3.6" fill="url(#a53)"/><rect x="1" y="165" width="346" height="3.6" fill="url(#a54)"/><rect x="1" y="168" width="350" height="3.6" fill="url(#a55)"/><rect x="1" y="171" width="354" height="3.6" fill="url(#a56)"/><rect x="1" y="174" width="358" height="3.6" fill="url(#a57)"/><rect x="2" y="177" width="360" height="3.6" fill="url(#a58)"/><rect x="2" y="180" width="364" height="3.6" fill="url(#a59)"/><rect x="2" y="183" width="368" height="3.6" fill="url(#a60)"/><rect x="3" y="186" width="371" height="3.6" fill="url(#a61)"/><rect x="3" y="189" width="375" height="3.6" fill="url(#a62)"/><rect x="4" y="192" width="378" height="3.6" fill="url(#a63)"/><rect x="4" y="195" width="382" height="3.6" fill="url(#a64)"/><rect x="4" y="198" width="386" height="3.6" fill="url(#a65)"/><rect x="5" y="201" width="389" height="3.6" fill="url(#a66)"/><rect x="5" y="204" width="393" height="3.6" fill="url(#a67)"/><rect x="6" y="207" width="396" height="3.6" fill="url(#a68)"/><rect x="6" y="210" width="400" height="3.6" fill="url(#a69)"/><rect x="6" y="213" width="404" height="3.6" fill="url(#a70)"/><rect x="7" y="216" width="407" height="3.6" fill="url(#a71)"/><rect x="7" y="219" width="411" height="3.6" fill="url(#a72)"/><rect x="8" y="222" width="413" height="3.6" fill="url(#a73)"/><rect x="8" y="225" width="417" height="3.6" fill="url(#a74)"/><rect x="9" y="228" width="420" height="3.6" fill="url(#a75)"/><rect x="9" y="231" width="424" height="3.6" fill="url(#a76)"/><rect x="10" y="234" width="427" height="3.6" fill="url(#a77)"/><rect x="11" y="237" width="430" height="3.6" fill="url(#a78)"/><rect x="11" y="240" width="434" height="3.6" fill="url(#a79)"/><rect x="12" y="243" width="437" height="3.6" fill="url(#a80)"/><rect x="12" y="246" width="441" height="3.6" fill="url(#a81)"/><rect x="13" y="249" width="444" height="3.6" fill="url(#a82)"/><rect x="13" y="252" width="448" height="3.6" fill="url(#a83)"/><rect x="14" y="255" width="451" height="3.6" fill="url(#a84)"/><rect x="15" y="258" width="454" height="3.6" fill="url(#a85)"/><rect x="15" y="261" width="458" height="3.6" fill="url(#a86)"/><rect x="16" y="264" width="461" height="3.6" fill="url(#a87)"/><rect x="17" y="267" width="463" height="3.6" fill="url(#a88)"/><rect x="17" y="270" width="467" height="3.6" fill="url(#a89)"/><rect x="18" y="273" width="470" height="3.6" fill="url(#a90)"/><rect x="19" y="276" width="473" height="3.6" fill="url(#a91)"/><rect x="19" y="279" width="477" height="3.6" fill="url(#a92)"/><rect x="20" y="282" width="480" height="3.6" fill="url(#a93)"/><rect x="21" y="285" width="483" height="3.6" fill="url(#a94)"/><rect x="21" y="288" width="487" height="3.6" fill="url(#a95)"/><rect x="22" y="291" width="490" height="3.6" fill="url(#a96)"/><rect x="23" y="294" width="493" height="3.6" fill="url(#a97)"/><rect x="24" y="297" width="496" height="3.6" fill="url(#a98)"/><rect x="24" y="300" width="500" height="3.6" fill="url(#a99)"/><rect x="25" y="303" width="503" height="3.6" fill="url(#a100)"/><rect x="26" y="306" width="506" height="3.6" fill="url(#a101)"/><rect x="27" y="309" width="509" height="3.6" fill="url(#a102)"/><rect x="27" y="312" width="513" height="3.6" fill="url(#a103)"/><rect x="28" y="315" width="516" height="3.6" fill="url(#a104)"/><rect x="29" y="318" width="519" height="3.6" fill="url(#a105)"/><rect x="30" y="321" width="521" height="3.6" fill="url(#a106)"/><rect x="31" y="324" width="524" height="3.6" fill="url(#a107)"/><rect x="32" y="327" width="527" height="3.6" fill="url(#a108)"/><rect x="32" y="330" width="531" height="3.6" fill="url(#a109)"/><rect x="33" y="333" width="534" height="3.6" fill="url(#a110)"/><rect x="34" y="336" width="537" height="3.6" fill="url(#a111)"/><rect x="35" y="339" width="540" height="3.6" fill="url(#a112)"/><rect x="36" y="342" width="539" height="3.6" fill="url(#a113)"/><rect x="37" y="345" width="531" height="3.6" fill="url(#a114)"/><rect x="38" y="348" width="522" height="3.6" fill="url(#a115)"/><rect x="39" y="351" width="513" height="3.6" fill="url(#a116)"/><rect x="40" y="354" width="503" height="3.6" fill="url(#a117)"/><rect x="41" y="357" width="494" height="3.6" fill="url(#a118)"/><rect x="42" y="360" width="484" height="3.6" fill="url(#a119)"/><rect x="43" y="363" width="475" height="3.6" fill="url(#a120)"/><rect x="44" y="366" width="465" height="3.6" fill="url(#a121)"/><rect x="45" y="369" width="456" height="3.6" fill="url(#a122)"/><rect x="46" y="372" width="447" height="3.6" fill="url(#a123)"/><rect x="47" y="375" width="437" height="3.6" fill="url(#a124)"/><rect x="48" y="378" width="428" height="3.6" fill="url(#a125)"/><rect x="49" y="381" width="418" height="3.6" fill="url(#a126)"/><rect x="50" y="384" width="409" height="3.6" fill="url(#a127)"/><rect x="51" y="387" width="400" height="3.6" fill="url(#a128)"/><rect x="53" y="390" width="389" height="3.6" fill="url(#a129)"/><rect x="54" y="393" width="380" height="3.6" fill="url(#a130)"/><rect x="55" y="396" width="370" height="3.6" fill="url(#a131)"/><rect x="56" y="399" width="361" height="3.6" fill="url(#a132)"/><rect x="58" y="402" width="350" height="3.6" fill="url(#a133)"/><rect x="59" y="405" width="341" height="3.6" fill="url(#a134)"/><rect x="60" y="408" width="332" height="3.6" fill="url(#a135)"/><rect x="62" y="411" width="321" height="3.6" fill="url(#a136)"/><rect x="63" y="414" width="312" height="3.6" fill="url(#a137)"/><rect x="65" y="417" width="301" height="3.6" fill="url(#a138)"/><rect x="66" y="420" width="292" height="3.6" fill="url(#a139)"/><rect x="67" y="423" width="282" height="3.6" fill="url(#a140)"/><rect x="69" y="426" width="272" height="3.6" fill="url(#a141)"/><rect x="70" y="429" width="263" height="3.6" fill="url(#a142)"/><rect x="72" y="432" width="252" height="3.6" fill="url(#a143)"/><rect x="73" y="435" width="243" height="3.6" fill="url(#a144)"/><rect x="75" y="438" width="232" height="3.6" fill="url(#a145)"/><rect x="77" y="441" width="222" height="3.6" fill="url(#a146)"/><rect x="78" y="444" width="213" height="3.6" fill="url(#a147)"/><rect x="80" y="447" width="202" height="3.6" fill="url(#a148)"/><rect x="82" y="450" width="192" height="3.6" fill="url(#a149)"/><rect x="83" y="453" width="182" height="3.6" fill="url(#a150)"/><rect x="85" y="456" width="172" height="3.6" fill="url(#a151)"/><rect x="87" y="459" width="161" height="3.6" fill="url(#a152)"/><rect x="89" y="462" width="151" height="3.6" fill="url(#a153)"/><rect x="91" y="465" width="141" height="3.6" fill="url(#a154)"/><rect x="94" y="468" width="129" height="3.6" fill="url(#a155)"/><rect x="96" y="471" width="119" height="3.6" fill="url(#a156)"/><rect x="98" y="474" width="108" height="3.6" fill="url(#a157)"/><rect x="101" y="477" width="97" height="3.6" fill="url(#a158)"/><rect x="104" y="480" width="85" height="3.6" fill="url(#a159)"/><rect x="108" y="483" width="73" height="3.6" fill="url(#a160)"/><rect x="112" y="486" width="61" height="3.6" fill="url(#a161)"/><rect x="116" y="489" width="48" height="3.6" fill="url(#a162)"/><rect x="120" y="492" width="36" height="3.6" fill="url(#a163)"/><rect x="125" y="495" width="22" height="3.6" fill="url(#a164)"/><rect x="130" y="498" width="9" height="2.8" fill="url(#a165)"/></g><g clip-path="url(#tr)"><rect x="229" y="142" width="8" height="2.6" fill="url(#b0)"/><rect x="229" y="144" width="12" height="2.6" fill="url(#b1)"/><rect x="228" y="146" width="16" height="2.6" fill="url(#b2)"/><rect x="227" y="148" width="20" height="2.6" fill="url(#b3)"/><rect x="227" y="150" width="24" height="2.6" fill="url(#b4)"/><rect x="226" y="152" width="28" height="2.6" fill="url(#b5)"/><rect x="225" y="154" width="32" height="2.6" fill="url(#b6)"/><rect x="224" y="156" width="36" height="2.6" fill="url(#b7)"/><rect x="224" y="158" width="40" height="2.6" fill="url(#b8)"/><rect x="223" y="160" width="44" height="2.6" fill="url(#b9)"/><rect x="222" y="162" width="48" height="2.6" fill="url(#b10)"/><rect x="221" y="164" width="53" height="2.6" fill="url(#b11)"/><rect x="221" y="166" width="56" height="2.6" fill="url(#b12)"/><rect x="220" y="168" width="60" height="2.6" fill="url(#b13)"/><rect x="219" y="170" width="64" height="2.6" fill="url(#b14)"/><rect x="219" y="172" width="68" height="2.6" fill="url(#b15)"/><rect x="218" y="174" width="72" height="2.6" fill="url(#b16)"/><rect x="217" y="176" width="76" height="2.6" fill="url(#b17)"/><rect x="216" y="178" width="81" height="2.6" fill="url(#b18)"/><rect x="216" y="180" width="84" height="2.6" fill="url(#b19)"/><rect x="215" y="182" width="88" height="2.6" fill="url(#b20)"/><rect x="214" y="184" width="93" height="2.6" fill="url(#b21)"/><rect x="213" y="186" width="97" height="2.6" fill="url(#b22)"/><rect x="213" y="188" width="100" height="2.6" fill="url(#b23)"/><rect x="212" y="190" width="104" height="2.6" fill="url(#b24)"/><rect x="211" y="192" width="109" height="2.6" fill="url(#b25)"/><rect x="211" y="194" width="112" height="2.6" fill="url(#b26)"/><rect x="210" y="196" width="116" height="2.6" fill="url(#b27)"/><rect x="209" y="198" width="121" height="2.6" fill="url(#b28)"/><rect x="208" y="200" width="125" height="2.6" fill="url(#b29)"/><rect x="208" y="202" width="128" height="2.6" fill="url(#b30)"/><rect x="207" y="204" width="132" height="2.6" fill="url(#b31)"/><rect x="206" y="206" width="137" height="2.6" fill="url(#b32)"/><rect x="205" y="208" width="141" height="2.6" fill="url(#b33)"/><rect x="205" y="210" width="144" height="2.6" fill="url(#b34)"/><rect x="204" y="212" width="149" height="2.6" fill="url(#b35)"/><rect x="203" y="214" width="153" height="2.6" fill="url(#b36)"/><rect x="203" y="216" width="156" height="2.6" fill="url(#b37)"/><rect x="202" y="218" width="160" height="2.6" fill="url(#b38)"/><rect x="201" y="220" width="165" height="2.6" fill="url(#b39)"/><rect x="200" y="222" width="169" height="2.6" fill="url(#b40)"/><rect x="200" y="224" width="172" height="2.6" fill="url(#b41)"/><rect x="199" y="226" width="177" height="2.6" fill="url(#b42)"/><rect x="198" y="228" width="181" height="2.6" fill="url(#b43)"/><rect x="197" y="230" width="185" height="2.6" fill="url(#b44)"/><rect x="197" y="232" width="189" height="2.6" fill="url(#b45)"/><rect x="196" y="234" width="193" height="2.6" fill="url(#b46)"/><rect x="195" y="236" width="197" height="2.6" fill="url(#b47)"/><rect x="195" y="238" width="200" height="2.6" fill="url(#b48)"/><rect x="194" y="240" width="205" height="2.6" fill="url(#b49)"/><rect x="193" y="242" width="209" height="2.6" fill="url(#b50)"/><rect x="192" y="244" width="213" height="2.6" fill="url(#b51)"/><rect x="192" y="246" width="217" height="2.6" fill="url(#b52)"/><rect x="191" y="248" width="221" height="2.6" fill="url(#b53)"/><rect x="190" y="250" width="225" height="2.6" fill="url(#b54)"/><rect x="189" y="252" width="229" height="2.6" fill="url(#b55)"/><rect x="189" y="254" width="233" height="2.6" fill="url(#b56)"/><rect x="188" y="256" width="237" height="2.6" fill="url(#b57)"/><rect x="187" y="258" width="241" height="2.6" fill="url(#b58)"/><rect x="187" y="260" width="245" height="2.6" fill="url(#b59)"/><rect x="186" y="262" width="249" height="2.6" fill="url(#b60)"/><rect x="185" y="264" width="253" height="2.6" fill="url(#b61)"/><rect x="184" y="266" width="257" height="2.6" fill="url(#b62)"/><rect x="184" y="268" width="261" height="2.6" fill="url(#b63)"/><rect x="183" y="270" width="265" height="2.6" fill="url(#b64)"/><rect x="182" y="272" width="269" height="2.6" fill="url(#b65)"/><rect x="181" y="274" width="274" height="2.6" fill="url(#b66)"/><rect x="181" y="276" width="277" height="2.6" fill="url(#b67)"/><rect x="180" y="278" width="281" height="2.6" fill="url(#b68)"/><rect x="179" y="280" width="286" height="2.6" fill="url(#b69)"/><rect x="179" y="282" width="289" height="2.6" fill="url(#b70)"/><rect x="178" y="284" width="293" height="2.6" fill="url(#b71)"/><rect x="177" y="286" width="297" height="2.6" fill="url(#b72)"/><rect x="176" y="288" width="302" height="2.6" fill="url(#b73)"/><rect x="176" y="290" width="305" height="2.6" fill="url(#b74)"/><rect x="175" y="292" width="309" height="2.6" fill="url(#b75)"/><rect x="174" y="294" width="314" height="2.6" fill="url(#b76)"/><rect x="174" y="296" width="317" height="2.6" fill="url(#b77)"/><rect x="173" y="298" width="321" height="2.6" fill="url(#b78)"/><rect x="172" y="300" width="325" height="2.6" fill="url(#b79)"/><rect x="171" y="302" width="330" height="2.6" fill="url(#b80)"/><rect x="171" y="304" width="330" height="2.6" fill="url(#b81)"/><rect x="170" y="306" width="326" height="2.6" fill="url(#b82)"/><rect x="169" y="308" width="322" height="2.6" fill="url(#b83)"/><rect x="168" y="310" width="319" height="2.6" fill="url(#b84)"/><rect x="168" y="312" width="314" height="2.6" fill="url(#b85)"/><rect x="167" y="314" width="310" height="2.6" fill="url(#b86)"/><rect x="166" y="316" width="306" height="2.6" fill="url(#b87)"/><rect x="166" y="318" width="302" height="2.6" fill="url(#b88)"/><rect x="165" y="320" width="298" height="2.6" fill="url(#b89)"/><rect x="164" y="322" width="294" height="2.6" fill="url(#b90)"/><rect x="163" y="324" width="290" height="2.6" fill="url(#b91)"/><rect x="163" y="326" width="286" height="2.6" fill="url(#b92)"/><rect x="162" y="328" width="282" height="2.6" fill="url(#b93)"/><rect x="161" y="330" width="278" height="2.6" fill="url(#b94)"/><rect x="160" y="332" width="274" height="2.6" fill="url(#b95)"/><rect x="160" y="334" width="270" height="2.6" fill="url(#b96)"/><rect x="159" y="336" width="266" height="2.6" fill="url(#b97)"/><rect x="158" y="338" width="262" height="2.6" fill="url(#b98)"/><rect x="158" y="340" width="257" height="2.6" fill="url(#b99)"/><rect x="157" y="342" width="254" height="2.6" fill="url(#b100)"/><rect x="156" y="344" width="250" height="2.6" fill="url(#b101)"/><rect x="155" y="346" width="246" height="2.6" fill="url(#b102)"/><rect x="155" y="348" width="241" height="2.6" fill="url(#b103)"/><rect x="154" y="350" width="238" height="2.6" fill="url(#b104)"/><rect x="153" y="352" width="234" height="2.6" fill="url(#b105)"/><rect x="152" y="354" width="230" height="2.6" fill="url(#b106)"/><rect x="152" y="356" width="225" height="2.6" fill="url(#b107)"/><rect x="151" y="358" width="222" height="2.6" fill="url(#b108)"/><rect x="150" y="360" width="218" height="2.6" fill="url(#b109)"/><rect x="150" y="362" width="213" height="2.6" fill="url(#b110)"/><rect x="149" y="364" width="209" height="2.6" fill="url(#b111)"/><rect x="148" y="366" width="206" height="2.6" fill="url(#b112)"/><rect x="147" y="368" width="202" height="2.6" fill="url(#b113)"/><rect x="147" y="370" width="197" height="2.6" fill="url(#b114)"/><rect x="146" y="372" width="194" height="2.6" fill="url(#b115)"/><rect x="145" y="374" width="190" height="2.6" fill="url(#b116)"/><rect x="144" y="376" width="186" height="2.6" fill="url(#b117)"/><rect x="144" y="378" width="181" height="2.6" fill="url(#b118)"/><rect x="143" y="380" width="178" height="2.6" fill="url(#b119)"/><rect x="142" y="382" width="174" height="2.6" fill="url(#b120)"/><rect x="142" y="384" width="169" height="2.6" fill="url(#b121)"/><rect x="141" y="386" width="165" height="2.6" fill="url(#b122)"/><rect x="140" y="388" width="162" height="2.6" fill="url(#b123)"/><rect x="139" y="390" width="158" height="2.6" fill="url(#b124)"/><rect x="139" y="392" width="153" height="2.6" fill="url(#b125)"/><rect x="138" y="394" width="149" height="2.6" fill="url(#b126)"/><rect x="137" y="396" width="146" height="2.6" fill="url(#b127)"/><rect x="136" y="398" width="142" height="2.6" fill="url(#b128)"/><rect x="136" y="400" width="137" height="2.6" fill="url(#b129)"/><rect x="135" y="402" width="133" height="2.6" fill="url(#b130)"/><rect x="134" y="404" width="130" height="2.6" fill="url(#b131)"/><rect x="134" y="406" width="125" height="2.6" fill="url(#b132)"/><rect x="133" y="408" width="121" height="2.6" fill="url(#b133)"/><rect x="132" y="410" width="117" height="2.6" fill="url(#b134)"/><rect x="131" y="412" width="114" height="2.6" fill="url(#b135)"/><rect x="131" y="414" width="109" height="2.6" fill="url(#b136)"/><rect x="130" y="416" width="105" height="2.6" fill="url(#b137)"/><rect x="129" y="418" width="101" height="2.6" fill="url(#b138)"/><rect x="128" y="420" width="98" height="2.6" fill="url(#b139)"/><rect x="128" y="422" width="93" height="2.6" fill="url(#b140)"/><rect x="127" y="424" width="89" height="2.6" fill="url(#b141)"/><rect x="126" y="426" width="85" height="2.6" fill="url(#b142)"/><rect x="126" y="428" width="81" height="2.6" fill="url(#b143)"/><rect x="125" y="430" width="77" height="2.6" fill="url(#b144)"/><rect x="124" y="432" width="73" height="2.6" fill="url(#b145)"/><rect x="123" y="434" width="69" height="2.6" fill="url(#b146)"/><rect x="123" y="436" width="65" height="2.6" fill="url(#b147)"/><rect x="122" y="438" width="61" height="2.6" fill="url(#b148)"/><rect x="121" y="440" width="57" height="2.6" fill="url(#b149)"/><rect x="121" y="442" width="52" height="2.6" fill="url(#b150)"/><rect x="120" y="444" width="49" height="2.6" fill="url(#b151)"/><rect x="119" y="446" width="45" height="2.6" fill="url(#b152)"/><rect x="118" y="448" width="41" height="2.6" fill="url(#b153)"/><rect x="118" y="450" width="36" height="2.6" fill="url(#b154)"/><rect x="117" y="452" width="33" height="2.6" fill="url(#b155)"/><rect x="116" y="454" width="29" height="2.6" fill="url(#b156)"/><rect x="115" y="456" width="25" height="2.6" fill="url(#b157)"/><rect x="115" y="458" width="21" height="2.6" fill="url(#b158)"/><rect x="114" y="460" width="17" height="2.6" fill="url(#b159)"/><rect x="113" y="462" width="13" height="2.6" fill="url(#b160)"/><rect x="113" y="464" width="8" height="2.6" fill="url(#b161)"/></g><rect x="229.9" y="200.8" width="13.8" height="13.8" fill="none" stroke="#fff" stroke-width="1.5"/><rect x="285.0" y="199.1" width="13.8" height="13.8" fill="none" stroke="#fff" stroke-width="1.5"/><rect x="339.8" y="210.7" width="13.8" height="13.8" fill="none" stroke="#fff" stroke-width="1.5"/><rect x="360.7" y="231.9" width="13.8" height="13.8" fill="none" stroke="#fff" stroke-width="1.5"/><rect x="391.8" y="251.4" width="13.8" height="13.8" fill="none" stroke="#fff" stroke-width="1.5"/><rect x="257.3" y="238.7" width="13.8" height="13.8" fill="none" stroke="#fff" stroke-width="1.5"/><rect x="196.6" y="277.7" width="13.8" height="13.8" fill="none" stroke="#fff" stroke-width="1.5"/><rect x="287.8" y="280.5" width="13.8" height="13.8" fill="none" stroke="#fff" stroke-width="1.5"/><rect x="303.1" y="276.3" width="13.8" height="13.8" fill="none" stroke="#fff" stroke-width="1.5"/><rect x="352.2" y="305.9" width="13.8" height="13.8" fill="none" stroke="#fff" stroke-width="1.5"/><rect x="409.5" y="303.1" width="13.8" height="13.8" fill="none" stroke="#fff" stroke-width="1.5"/><rect x="154.5" y="332.5" width="13.8" height="13.8" fill="none" stroke="#fff" stroke-width="1.5"/><rect x="186.4" y="333.6" width="13.8" height="13.8" fill="none" stroke="#fff" stroke-width="1.5"/><rect x="200.5" y="342.3" width="13.8" height="13.8" fill="none" stroke="#fff" stroke-width="1.5"/><rect x="283.6" y="345.2" width="13.8" height="13.8" fill="none" stroke="#fff" stroke-width="1.5"/><rect x="217.8" y="360.7" width="13.8" height="13.8" fill="none" stroke="#fff" stroke-width="1.5"/><rect x="161.8" y="378.8" width="13.8" height="13.8" fill="none" stroke="#fff" stroke-width="1.5"/><rect x="142.4" y="408.2" width="13.8" height="13.8" fill="none" stroke="#fff" stroke-width="1.5"/><rect x="236.4" y="296.2" width="13.6" height="13.6" fill="none" stroke="#000" stroke-width="2.2"/><circle cx="247.8" cy="233.3" r="4.55" fill="#469449" stroke="#000" stroke-width="1.1"/><circle cx="295.8" cy="221.7" r="4.55" fill="#9dbc40" stroke="#000" stroke-width="1.1"/><circle cx="341.9" cy="226.2" r="4.55" fill="#e7c71f" stroke="#000" stroke-width="1.1"/><circle cx="356.0" cy="242.9" r="4.55" fill="#e0a32e" stroke="#000" stroke-width="1.1"/><circle cx="377.5" cy="257.0" r="4.55" fill="#d67e2c" stroke="#000" stroke-width="1.1"/><circle cx="262.5" cy="262.1" r="4.55" fill="#576c43" stroke="#000" stroke-width="1.1"/><circle cx="203.5" cy="308.1" r="4.55" fill="#67bdaa" stroke="#000" stroke-width="1.1"/><circle cx="274.9" cy="300.2" r="4.55" fill="#c29682" stroke="#000" stroke-width="1.1"/><circle cx="295.0" cy="293.1" r="4.55" fill="#735244" stroke="#000" stroke-width="1.1"/><circle cx="323.0" cy="315.7" r="4.55" fill="#c15a63" stroke="#000" stroke-width="1.1"/><circle cx="380.0" cy="303.3" r="4.55" fill="#af363c" stroke="#000" stroke-width="1.1"/><circle cx="163.9" cy="357.8" r="4.55" fill="#0085a3" stroke="#000" stroke-width="1.1"/><circle cx="184.8" cy="355.8" r="4.55" fill="#627a9d" stroke="#000" stroke-width="1.1"/><circle cx="193.9" cy="360.1" r="4.55" fill="#8580b1" stroke="#000" stroke-width="1.1"/><circle cx="202.1" cy="369.4" r="4.55" fill="#000000" stroke="#000" stroke-width="1.1"/><circle cx="200.9" cy="377.3" r="4.55" fill="#5e3c6c" stroke="#000" stroke-width="1.1"/><circle cx="255.5" cy="355.0" r="4.55" fill="#bb5695" stroke="#000" stroke-width="1.1"/><circle cx="160.0" cy="391.1" r="4.55" fill="#505ba6" stroke="#000" stroke-width="1.1"/><circle cx="141.9" cy="415.2" r="4.55" fill="#383d96" stroke="#000" stroke-width="1.1"/><circle cx="229.7" cy="320.7" r="4.55" fill="#3c3c3c" stroke="#000" stroke-width="1.1"/><circle cx="229.1" cy="320.2" r="4.55" fill="#a0a0a0" stroke="#000" stroke-width="1.1"/></svg>
<div class="r" style="left:1507.20px;top:80.00px;width:197.30px;height:154.40px;background:#2b2b2b;"></div>
<svg class="r" style="left:1511.2px;top:84.0px" width="189.3" height="146.4" viewBox="0 0 189.3 146.4"><defs><clipPath id="tr2"><path d="M1215.4 -43.2L332.5 -579.7L-57.1 493.2Z"/></clipPath><linearGradient id="c0"><stop offset="0.0000" stop-color="#008599"/><stop offset="0.6402" stop-color="#008299"/><stop offset="1.0000" stop-color="#238199"/></linearGradient><linearGradient id="c1"><stop offset="0.0000" stop-color="#008399"/><stop offset="0.6349" stop-color="#008099"/><stop offset="1.0000" stop-color="#247f99"/></linearGradient><linearGradient id="c2"><stop offset="0.0000" stop-color="#008199"/><stop offset="0.6243" stop-color="#007f99"/><stop offset="1.0000" stop-color="#247d99"/></linearGradient><linearGradient id="c3"><stop offset="0.0000" stop-color="#007f99"/><stop offset="0.6190" stop-color="#007d99"/><stop offset="1.0000" stop-color="#257b99"/></linearGradient><linearGradient id="c4"><stop offset="0.0000" stop-color="#007e99"/><stop offset="0.6085" stop-color="#007b99"/><stop offset="1.0000" stop-color="#257999"/></linearGradient><linearGradient id="c5"><stop offset="0.0000" stop-color="#007c99"/><stop offset="0.6032" stop-color="#007999"/><stop offset="1.0000" stop-color="#267799"/></linearGradient><linearGradient id="c6"><stop offset="0.0000" stop-color="#007a99"/><stop offset="0.5926" stop-color="#007799"/><stop offset="1.0000" stop-color="#267599"/></linearGradient><linearGradient id="c7"><stop offset="0.0000" stop-color="#007899"/><stop offset="0.5873" stop-color="#007599"/><stop offset="1.0000" stop-color="#277399"/></linearGradient><linearGradient id="c8"><stop offset="0.0000" stop-color="#007799"/><stop offset="0.5767" stop-color="#007499"/><stop offset="1.0000" stop-color="#277199"/></linearGradient><linearGradient id="c9"><stop offset="0.0000" stop-color="#007599"/><stop offset="0.5714" stop-color="#007299"/><stop offset="1.0000" stop-color="#286f99"/></linearGradient><linearGradient id="c10"><stop offset="0.0000" stop-color="#007399"/><stop offset="0.5661" stop-color="#007099"/><stop offset="1.0000" stop-color="#286d99"/></linearGradient><linearGradient id="c11"><stop offset="0.0000" stop-color="#007299"/><stop offset="0.5556" stop-color="#006e99"/><stop offset="1.0000" stop-color="#296b99"/></linearGradient><linearGradient id="c12"><stop offset="0.0000" stop-color="#007099"/><stop offset="0.5503" stop-color="#006d99"/><stop offset="1.0000" stop-color="#296999"/></linearGradient><linearGradient id="c13"><stop offset="0.0000" stop-color="#006f99"/><stop offset="0.5397" stop-color="#006b99"/><stop offset="1.0000" stop-color="#2a6899"/></linearGradient><linearGradient id="c14"><stop offset="0.0000" stop-color="#006d99"/><stop offset="0.5344" stop-color="#006999"/><stop offset="1.0000" stop-color="#2a6699"/></linearGradient><linearGradient id="c15"><stop offset="0.0000" stop-color="#006b99"/><stop offset="0.5238" stop-color="#006899"/><stop offset="1.0000" stop-color="#2b6499"/></linearGradient><linearGradient id="c16"><stop offset="0.0000" stop-color="#006a99"/><stop offset="0.5185" stop-color="#006699"/><stop offset="1.0000" stop-color="#2b6299"/></linearGradient><linearGradient id="c17"><stop offset="0.0000" stop-color="#006899"/><stop offset="0.5079" stop-color="#006599"/><stop offset="1.0000" stop-color="#2c6099"/></linearGradient><linearGradient id="c18"><stop offset="0.0000" stop-color="#006799"/><stop offset="0.5026" stop-color="#006399"/><stop offset="1.0000" stop-color="#2c5f99"/></linearGradient><linearGradient id="c19"><stop offset="0.0000" stop-color="#006599"/><stop offset="0.4974" stop-color="#006199"/><stop offset="1.0000" stop-color="#2d5d99"/></linearGradient><linearGradient id="c20"><stop offset="0.0000" stop-color="#006499"/><stop offset="0.4868" stop-color="#006099"/><stop offset="1.0000" stop-color="#2d5b99"/></linearGradient><linearGradient id="c21"><stop offset="0.0000" stop-color="#006299"/><stop offset="0.4815" stop-color="#005e99"/><stop offset="1.0000" stop-color="#2d5a99"/></linearGradient><linearGradient id="c22"><stop offset="0.0000" stop-color="#006199"/><stop offset="0.4709" stop-color="#005d99"/><stop offset="1.0000" stop-color="#2e5899"/></linearGradient><linearGradient id="c23"><stop offset="0.0000" stop-color="#005f99"/><stop offset="0.4656" stop-color="#005c99"/><stop offset="1.0000" stop-color="#2e5699"/></linearGradient><linearGradient id="c24"><stop offset="0.0000" stop-color="#005e99"/><stop offset="0.4550" stop-color="#005a99"/><stop offset="1.0000" stop-color="#2f5599"/></linearGradient><linearGradient id="c25"><stop offset="0.0000" stop-color="#005c99"/><stop offset="0.4497" stop-color="#005999"/><stop offset="1.0000" stop-color="#2f5399"/></linearGradient><linearGradient id="c26"><stop offset="0.0000" stop-color="#005b99"/><stop offset="0.4392" stop-color="#005799"/><stop offset="1.0000" stop-color="#305299"/></linearGradient><linearGradient id="c27"><stop offset="0.0000" stop-color="#005a99"/><stop offset="0.4339" stop-color="#005699"/><stop offset="1.0000" stop-color="#305099"/></linearGradient><linearGradient id="c28"><stop offset="0.0000" stop-color="#005899"/><stop offset="0.4286" stop-color="#005499"/><stop offset="1.0000" stop-color="#304f99"/></linearGradient><linearGradient id="c29"><stop offset="0.0000" stop-color="#005799"/><stop offset="0.4180" stop-color="#005399"/><stop offset="1.0000" stop-color="#314d99"/></linearGradient><linearGradient id="c30"><stop offset="0.0000" stop-color="#005699"/><stop offset="0.4127" stop-color="#005299"/><stop offset="1.0000" stop-color="#314b99"/></linearGradient><linearGradient id="c31"><stop offset="0.0000" stop-color="#005499"/><stop offset="0.4021" stop-color="#005099"/><stop offset="1.0000" stop-color="#314a99"/></linearGradient><linearGradient id="c32"><stop offset="0.0000" stop-color="#005399"/><stop offset="0.3968" stop-color="#004f99"/><stop offset="1.0000" stop-color="#324899"/></linearGradient><linearGradient id="c33"><stop offset="0.0000" stop-color="#005199"/><stop offset="0.3862" stop-color="#004e99"/><stop offset="1.0000" stop-color="#324799"/></linearGradient><linearGradient id="c34"><stop offset="0.0000" stop-color="#005099"/><stop offset="0.3810" stop-color="#004c99"/><stop offset="1.0000" stop-color="#334699"/></linearGradient><linearGradient id="c35"><stop offset="0.0000" stop-color="#004f99"/><stop offset="0.3757" stop-color="#004b99"/><stop offset="1.0000" stop-color="#334499"/></linearGradient><linearGradient id="c36"><stop offset="0.0000" stop-color="#004e99"/><stop offset="0.3651" stop-color="#004a99"/><stop offset="1.0000" stop-color="#334399"/></linearGradient><linearGradient id="d0"><stop offset="0.0000" stop-color="#00ddff"/><stop offset="0.6402" stop-color="#00d9ff"/><stop offset="1.0000" stop-color="#3bd7ff"/></linearGradient><linearGradient id="d1"><stop offset="0.0000" stop-color="#00daff"/><stop offset="0.6349" stop-color="#00d6ff"/><stop offset="1.0000" stop-color="#3cd3ff"/></linearGradient><linearGradient id="d2"><stop offset="0.0000" stop-color="#00d7ff"/><stop offset="0.6243" stop-color="#00d3ff"/><stop offset="1.0000" stop-color="#3dd0ff"/></linearGradient><linearGradient id="d3"><stop offset="0.0000" stop-color="#00d4ff"/><stop offset="0.6190" stop-color="#00d0ff"/><stop offset="1.0000" stop-color="#3ecdff"/></linearGradient><linearGradient id="d4"><stop offset="0.0000" stop-color="#00d1ff"/><stop offset="0.6085" stop-color="#00cdff"/><stop offset="1.0000" stop-color="#3ec9ff"/></linearGradient><linearGradient id="d5"><stop offset="0.0000" stop-color="#00ceff"/><stop offset="0.6032" stop-color="#00caff"/><stop offset="1.0000" stop-color="#3fc6ff"/></linearGradient><linearGradient id="d6"><stop offset="0.0000" stop-color="#00ccff"/><stop offset="0.5926" stop-color="#00c7ff"/><stop offset="1.0000" stop-color="#40c3ff"/></linearGradient><linearGradient id="d7"><stop offset="0.0000" stop-color="#00c9ff"/><stop offset="0.5873" stop-color="#00c4ff"/><stop offset="1.0000" stop-color="#41bfff"/></linearGradient><linearGradient id="d8"><stop offset="0.0000" stop-color="#00c6ff"/><stop offset="0.5767" stop-color="#00c1ff"/><stop offset="1.0000" stop-color="#42bcff"/></linearGradient><linearGradient id="d9"><stop offset="0.0000" stop-color="#00c3ff"/><stop offset="0.5714" stop-color="#00beff"/><stop offset="1.0000" stop-color="#43b9ff"/></linearGradient><linearGradient id="d10"><stop offset="0.0000" stop-color="#00c0ff"/><stop offset="0.5661" stop-color="#00bbff"/><stop offset="1.0000" stop-color="#43b6ff"/></linearGradient><linearGradient id="d11"><stop offset="0.0000" stop-color="#00beff"/><stop offset="0.5556" stop-color="#00b8ff"/><stop offset="1.0000" stop-color="#44b3ff"/></linearGradient><linearGradient id="d12"><stop offset="0.0000" stop-color="#00bbff"/><stop offset="0.5503" stop-color="#00b5ff"/><stop offset="1.0000" stop-color="#45b0ff"/></linearGradient><linearGradient id="d13"><stop offset="0.0000" stop-color="#00b8ff"/><stop offset="0.5397" stop-color="#00b2ff"/><stop offset="1.0000" stop-color="#46adff"/></linearGradient><linearGradient id="d14"><stop offset="0.0000" stop-color="#00b6ff"/><stop offset="0.5344" stop-color="#00b0ff"/><stop offset="1.0000" stop-color="#47aaff"/></linearGradient><linearGradient id="d15"><stop offset="0.0000" stop-color="#00b3ff"/><stop offset="0.5238" stop-color="#00adff"/><stop offset="1.0000" stop-color="#47a7ff"/></linearGradient><linearGradient id="d16"><stop offset="0.0000" stop-color="#00b0ff"/><stop offset="0.5185" stop-color="#00aaff"/><stop offset="1.0000" stop-color="#48a4ff"/></linearGradient><linearGradient id="d17"><stop offset="0.0000" stop-color="#00aeff"/><stop offset="0.5079" stop-color="#00a8ff"/><stop offset="0.7460" stop-color="#22a4ff"/><stop offset="1.0000" stop-color="#49a1ff"/></linearGradient><linearGradient id="d18"><stop offset="0.0000" stop-color="#00abff"/><stop offset="0.5026" stop-color="#00a5ff"/><stop offset="1.0000" stop-color="#4a9eff"/></linearGradient><linearGradient id="d19"><stop offset="0.0000" stop-color="#00a9ff"/><stop offset="0.4974" stop-color="#00a2ff"/><stop offset="1.0000" stop-color="#4a9bff"/></linearGradient><linearGradient id="d20"><stop offset="0.0000" stop-color="#00a6ff"/><stop offset="0.4868" stop-color="#00a0ff"/><stop offset="1.0000" stop-color="#4b98ff"/></linearGradient><linearGradient id="d21"><stop offset="0.0000" stop-color="#00a4ff"/><stop offset="0.4815" stop-color="#009dff"/><stop offset="1.0000" stop-color="#4c96ff"/></linearGradient><linearGradient id="d22"><stop offset="0.0000" stop-color="#00a1ff"/><stop offset="0.4709" stop-color="#009bff"/><stop offset="0.7354" stop-color="#2597ff"/><stop offset="1.0000" stop-color="#4c93ff"/></linearGradient><linearGradient id="d23"><stop offset="0.0000" stop-color="#009fff"/><stop offset="0.4656" stop-color="#0099ff"/><stop offset="1.0000" stop-color="#4d90ff"/></linearGradient><linearGradient id="d24"><stop offset="0.0000" stop-color="#009dff"/><stop offset="0.4550" stop-color="#0096ff"/><stop offset="0.7249" stop-color="#2592ff"/><stop offset="1.0000" stop-color="#4e8dff"/></linearGradient><linearGradient id="d25"><stop offset="0.0000" stop-color="#009aff"/><stop offset="0.4497" stop-color="#0094ff"/><stop offset="0.7302" stop-color="#278fff"/><stop offset="1.0000" stop-color="#4f8bff"/></linearGradient><linearGradient id="d26"><stop offset="0.0000" stop-color="#0098ff"/><stop offset="0.4392" stop-color="#0091ff"/><stop offset="0.7143" stop-color="#258dff"/><stop offset="1.0000" stop-color="#4f88ff"/></linearGradient><linearGradient id="d27"><stop offset="0.0000" stop-color="#0095ff"/><stop offset="0.4339" stop-color="#008fff"/><stop offset="0.7249" stop-color="#278aff"/><stop offset="1.0000" stop-color="#5085ff"/></linearGradient><linearGradient id="d28"><stop offset="0.0000" stop-color="#0093ff"/><stop offset="0.4286" stop-color="#008dff"/><stop offset="0.7196" stop-color="#2888ff"/><stop offset="1.0000" stop-color="#5183ff"/></linearGradient><linearGradient id="d29"><stop offset="0.0000" stop-color="#0091ff"/><stop offset="0.4180" stop-color="#008aff"/><stop offset="0.7143" stop-color="#2885ff"/><stop offset="1.0000" stop-color="#5180ff"/></linearGradient><linearGradient id="d30"><stop offset="0.0000" stop-color="#008fff"/><stop offset="0.4127" stop-color="#0088ff"/><stop offset="0.7143" stop-color="#2883ff"/><stop offset="1.0000" stop-color="#527eff"/></linearGradient><linearGradient id="d31"><stop offset="0.0000" stop-color="#008cff"/><stop offset="0.4021" stop-color="#0086ff"/><stop offset="0.7037" stop-color="#2881ff"/><stop offset="1.0000" stop-color="#527bff"/></linearGradient><linearGradient id="d32"><stop offset="0.0000" stop-color="#008aff"/><stop offset="0.3968" stop-color="#0084ff"/><stop offset="0.7037" stop-color="#297eff"/><stop offset="1.0000" stop-color="#5379ff"/></linearGradient><linearGradient id="d33"><stop offset="0.0000" stop-color="#0088ff"/><stop offset="0.3862" stop-color="#0082ff"/><stop offset="0.6931" stop-color="#287cff"/><stop offset="1.0000" stop-color="#5476ff"/></linearGradient><linearGradient id="d34"><stop offset="0.0000" stop-color="#0086ff"/><stop offset="0.3810" stop-color="#007fff"/><stop offset="0.6984" stop-color="#2a7aff"/><stop offset="1.0000" stop-color="#5474ff"/></linearGradient><linearGradient id="d35"><stop offset="0.0000" stop-color="#0083ff"/><stop offset="0.3757" stop-color="#007dff"/><stop offset="0.6931" stop-color="#2a77ff"/><stop offset="1.0000" stop-color="#5571ff"/></linearGradient><linearGradient id="d36"><stop offset="0.0000" stop-color="#0082ff"/><stop offset="0.3651" stop-color="#007cff"/><stop offset="0.6825" stop-color="#2976ff"/><stop offset="1.0000" stop-color="#5670ff"/></linearGradient></defs><rect x="0" y="0" width="189.3" height="4.6" fill="url(#c0)"/><rect x="0" y="4" width="189.3" height="4.6" fill="url(#c1)"/><rect x="0" y="8" width="189.3" height="4.6" fill="url(#c2)"/><rect x="0" y="12" width="189.3" height="4.6" fill="url(#c3)"/><rect x="0" y="16" width="189.3" height="4.6" fill="url(#c4)"/><rect x="0" y="20" width="189.3" height="4.6" fill="url(#c5)"/><rect x="0" y="24" width="189.3" height="4.6" fill="url(#c6)"/><rect x="0" y="28" width="189.3" height="4.6" fill="url(#c7)"/><rect x="0" y="32" width="189.3" height="4.6" fill="url(#c8)"/><rect x="0" y="36" width="189.3" height="4.6" fill="url(#c9)"/><rect x="0" y="40" width="189.3" height="4.6" fill="url(#c10)"/><rect x="0" y="44" width="189.3" height="4.6" fill="url(#c11)"/><rect x="0" y="48" width="189.3" height="4.6" fill="url(#c12)"/><rect x="0" y="52" width="189.3" height="4.6" fill="url(#c13)"/><rect x="0" y="56" width="189.3" height="4.6" fill="url(#c14)"/><rect x="0" y="60" width="189.3" height="4.6" fill="url(#c15)"/><rect x="0" y="64" width="189.3" height="4.6" fill="url(#c16)"/><rect x="0" y="68" width="189.3" height="4.6" fill="url(#c17)"/><rect x="0" y="72" width="189.3" height="4.6" fill="url(#c18)"/><rect x="0" y="76" width="189.3" height="4.6" fill="url(#c19)"/><rect x="0" y="80" width="189.3" height="4.6" fill="url(#c20)"/><rect x="0" y="84" width="189.3" height="4.6" fill="url(#c21)"/><rect x="0" y="88" width="189.3" height="4.6" fill="url(#c22)"/><rect x="0" y="92" width="189.3" height="4.6" fill="url(#c23)"/><rect x="0" y="96" width="189.3" height="4.6" fill="url(#c24)"/><rect x="0" y="100" width="189.3" height="4.6" fill="url(#c25)"/><rect x="0" y="104" width="189.3" height="4.6" fill="url(#c26)"/><rect x="0" y="108" width="189.3" height="4.6" fill="url(#c27)"/><rect x="0" y="112" width="189.3" height="4.6" fill="url(#c28)"/><rect x="0" y="116" width="189.3" height="4.6" fill="url(#c29)"/><rect x="0" y="120" width="189.3" height="4.6" fill="url(#c30)"/><rect x="0" y="124" width="189.3" height="4.6" fill="url(#c31)"/><rect x="0" y="128" width="189.3" height="4.6" fill="url(#c32)"/><rect x="0" y="132" width="189.3" height="4.6" fill="url(#c33)"/><rect x="0" y="136" width="189.3" height="4.6" fill="url(#c34)"/><rect x="0" y="140" width="189.3" height="4.6" fill="url(#c35)"/><rect x="0" y="144" width="189.3" height="3" fill="url(#c36)"/><g clip-path="url(#tr2)"><rect x="0" y="0" width="189.3" height="4.6" fill="url(#d0)"/><rect x="0" y="4" width="189.3" height="4.6" fill="url(#d1)"/><rect x="0" y="8" width="189.3" height="4.6" fill="url(#d2)"/><rect x="0" y="12" width="189.3" height="4.6" fill="url(#d3)"/><rect x="0" y="16" width="189.3" height="4.6" fill="url(#d4)"/><rect x="0" y="20" width="189.3" height="4.6" fill="url(#d5)"/><rect x="0" y="24" width="189.3" height="4.6" fill="url(#d6)"/><rect x="0" y="28" width="189.3" height="4.6" fill="url(#d7)"/><rect x="0" y="32" width="189.3" height="4.6" fill="url(#d8)"/><rect x="0" y="36" width="189.3" height="4.6" fill="url(#d9)"/><rect x="0" y="40" width="189.3" height="4.6" fill="url(#d10)"/><rect x="0" y="44" width="189.3" height="4.6" fill="url(#d11)"/><rect x="0" y="48" width="189.3" height="4.6" fill="url(#d12)"/><rect x="0" y="52" width="189.3" height="4.6" fill="url(#d13)"/><rect x="0" y="56" width="189.3" height="4.6" fill="url(#d14)"/><rect x="0" y="60" width="189.3" height="4.6" fill="url(#d15)"/><rect x="0" y="64" width="189.3" height="4.6" fill="url(#d16)"/><rect x="0" y="68" width="189.3" height="4.6" fill="url(#d17)"/><rect x="0" y="72" width="189.3" height="4.6" fill="url(#d18)"/><rect x="0" y="76" width="189.3" height="4.6" fill="url(#d19)"/><rect x="0" y="80" width="189.3" height="4.6" fill="url(#d20)"/><rect x="0" y="84" width="189.3" height="4.6" fill="url(#d21)"/><rect x="0" y="88" width="189.3" height="4.6" fill="url(#d22)"/><rect x="0" y="92" width="189.3" height="4.6" fill="url(#d23)"/><rect x="0" y="96" width="189.3" height="4.6" fill="url(#d24)"/><rect x="0" y="100" width="189.3" height="4.6" fill="url(#d25)"/><rect x="0" y="104" width="189.3" height="4.6" fill="url(#d26)"/><rect x="0" y="108" width="189.3" height="4.6" fill="url(#d27)"/><rect x="0" y="112" width="189.3" height="4.6" fill="url(#d28)"/><rect x="0" y="116" width="189.3" height="4.6" fill="url(#d29)"/><rect x="0" y="120" width="189.3" height="4.6" fill="url(#d30)"/><rect x="0" y="124" width="189.3" height="4.6" fill="url(#d31)"/><rect x="0" y="128" width="189.3" height="4.6" fill="url(#d32)"/><rect x="0" y="132" width="189.3" height="4.6" fill="url(#d33)"/><rect x="0" y="136" width="189.3" height="4.6" fill="url(#d34)"/><rect x="0" y="140" width="189.3" height="4.6" fill="url(#d35)"/><rect x="0" y="144" width="189.3" height="3" fill="url(#d36)"/></g><rect x="86.8" y="65.8" width="14" height="13.6" fill="none" stroke="#fff" stroke-width="1.3"/><circle cx="104.8" cy="134.8" r="4.2" fill="#0085a3" stroke="#000" stroke-width="1.1"/><circle cx="175.2" cy="131.0" r="4.2" fill="#627a9d" stroke="#000" stroke-width="1.1"/></svg>
<svg class="r" style="left:0;top:0" width="1719" height="885" viewBox="0 0 1719 885"><rect x="1510.60" y="83.40" width="190.50" height="147.60" fill="none" stroke="#969696" stroke-width="1.3"/></svg>
<div class="t" style="left:1049.18px;top:584.53px;font-size:15.55px;color:#dcdcdc;transform:scaleX(0.9300);transform-origin:50% 50%;">0</div>
<div class="t" style="left:1038.95px;top:568.93px;font-size:15.55px;color:#dcdcdc;transform:scaleX(0.9300);transform-origin:100% 50%;">0</div>
<div class="t" style="left:1120.39px;top:584.53px;font-size:15.55px;color:#dcdcdc;transform:scaleX(0.9300);transform-origin:50% 50%;">0,1</div>
<div class="t" style="left:1025.98px;top:509.45px;font-size:15.55px;color:#dcdcdc;transform:scaleX(0.9300);transform-origin:100% 50%;">0,1</div>
<div class="t" style="left:1198.09px;top:584.53px;font-size:15.55px;color:#dcdcdc;transform:scaleX(0.9300);transform-origin:50% 50%;">0,2</div>
<div class="t" style="left:1025.98px;top:449.97px;font-size:15.55px;color:#dcdcdc;transform:scaleX(0.9300);transform-origin:100% 50%;">0,2</div>
<div class="t" style="left:1275.79px;top:584.53px;font-size:15.55px;color:#dcdcdc;transform:scaleX(0.9300);transform-origin:50% 50%;">0,3</div>
<div class="t" style="left:1025.98px;top:390.49px;font-size:15.55px;color:#dcdcdc;transform:scaleX(0.9300);transform-origin:100% 50%;">0,3</div>
<div class="t" style="left:1353.49px;top:584.53px;font-size:15.55px;color:#dcdcdc;transform:scaleX(0.9300);transform-origin:50% 50%;">0,4</div>
<div class="t" style="left:1025.98px;top:331.01px;font-size:15.55px;color:#dcdcdc;transform:scaleX(0.9300);transform-origin:100% 50%;">0,4</div>
<div class="t" style="left:1431.19px;top:584.53px;font-size:15.55px;color:#dcdcdc;transform:scaleX(0.9300);transform-origin:50% 50%;">0,5</div>
<div class="t" style="left:1025.98px;top:271.53px;font-size:15.55px;color:#dcdcdc;transform:scaleX(0.9300);transform-origin:100% 50%;">0,5</div>
<div class="t" style="left:1508.89px;top:584.53px;font-size:15.55px;color:#dcdcdc;transform:scaleX(0.9300);transform-origin:50% 50%;">0,6</div>
<div class="t" style="left:1025.98px;top:212.05px;font-size:15.55px;color:#dcdcdc;transform:scaleX(0.9300);transform-origin:100% 50%;">0,6</div>
<div class="t" style="left:1586.59px;top:584.53px;font-size:15.55px;color:#dcdcdc;transform:scaleX(0.9300);transform-origin:50% 50%;">0,7</div>
<div class="t" style="left:1025.98px;top:152.57px;font-size:15.55px;color:#dcdcdc;transform:scaleX(0.9300);transform-origin:100% 50%;">0,7</div>
<div class="t" style="left:1664.29px;top:584.53px;font-size:15.55px;color:#dcdcdc;transform:scaleX(0.9300);transform-origin:50% 50%;">0,8</div>
<div class="t" style="left:1025.98px;top:93.09px;font-size:15.55px;color:#dcdcdc;transform:scaleX(0.9300);transform-origin:100% 50%;">0,8</div>
<svg class="r" style="left:0;top:0" width="1719" height="885" viewBox="0 0 1719 885"><rect x="1053.50" y="76.00" width="654.00" height="500.20" fill="none" stroke="#9c9c9c" stroke-width="1.3"/><path d="M1053.80 576.70L1053.80 582.00" stroke="#dedede" stroke-width="1.7"/><path d="M1047.80 576.60L1053.00 576.60" stroke="#dedede" stroke-width="1.7"/><path d="M1131.50 576.70L1131.50 582.00" stroke="#dedede" stroke-width="1.7"/><path d="M1047.80 517.12L1053.00 517.12" stroke="#dedede" stroke-width="1.7"/><path d="M1209.20 576.70L1209.20 582.00" stroke="#dedede" stroke-width="1.7"/><path d="M1047.80 457.64L1053.00 457.64" stroke="#dedede" stroke-width="1.7"/><path d="M1286.90 576.70L1286.90 582.00" stroke="#dedede" stroke-width="1.7"/><path d="M1047.80 398.16L1053.00 398.16" stroke="#dedede" stroke-width="1.7"/><path d="M1364.60 576.70L1364.60 582.00" stroke="#dedede" stroke-width="1.7"/><path d="M1047.80 338.68L1053.00 338.68" stroke="#dedede" stroke-width="1.7"/><path d="M1442.30 576.70L1442.30 582.00" stroke="#dedede" stroke-width="1.7"/><path d="M1047.80 279.20L1053.00 279.20" stroke="#dedede" stroke-width="1.7"/><path d="M1520.00 576.70L1520.00 582.00" stroke="#dedede" stroke-width="1.7"/><path d="M1047.80 219.72L1053.00 219.72" stroke="#dedede" stroke-width="1.7"/><path d="M1597.70 576.70L1597.70 582.00" stroke="#dedede" stroke-width="1.7"/><path d="M1047.80 160.24L1053.00 160.24" stroke="#dedede" stroke-width="1.7"/><path d="M1675.40 576.70L1675.40 582.00" stroke="#dedede" stroke-width="1.7"/><path d="M1047.80 100.76L1053.00 100.76" stroke="#dedede" stroke-width="1.7"/></svg>
<div class="r" style="left:1423.60px;top:536.20px;width:280.40px;height:27.40px;background:#373737;"></div>
<div class="t" style="left:1455.10px;top:539.94px;font-size:21.22px;color:#ffffff;transform:scaleX(0.9536);transform-origin:0 50%;">RGB Triplet: 0, 133, 163</div>
</body></html>
